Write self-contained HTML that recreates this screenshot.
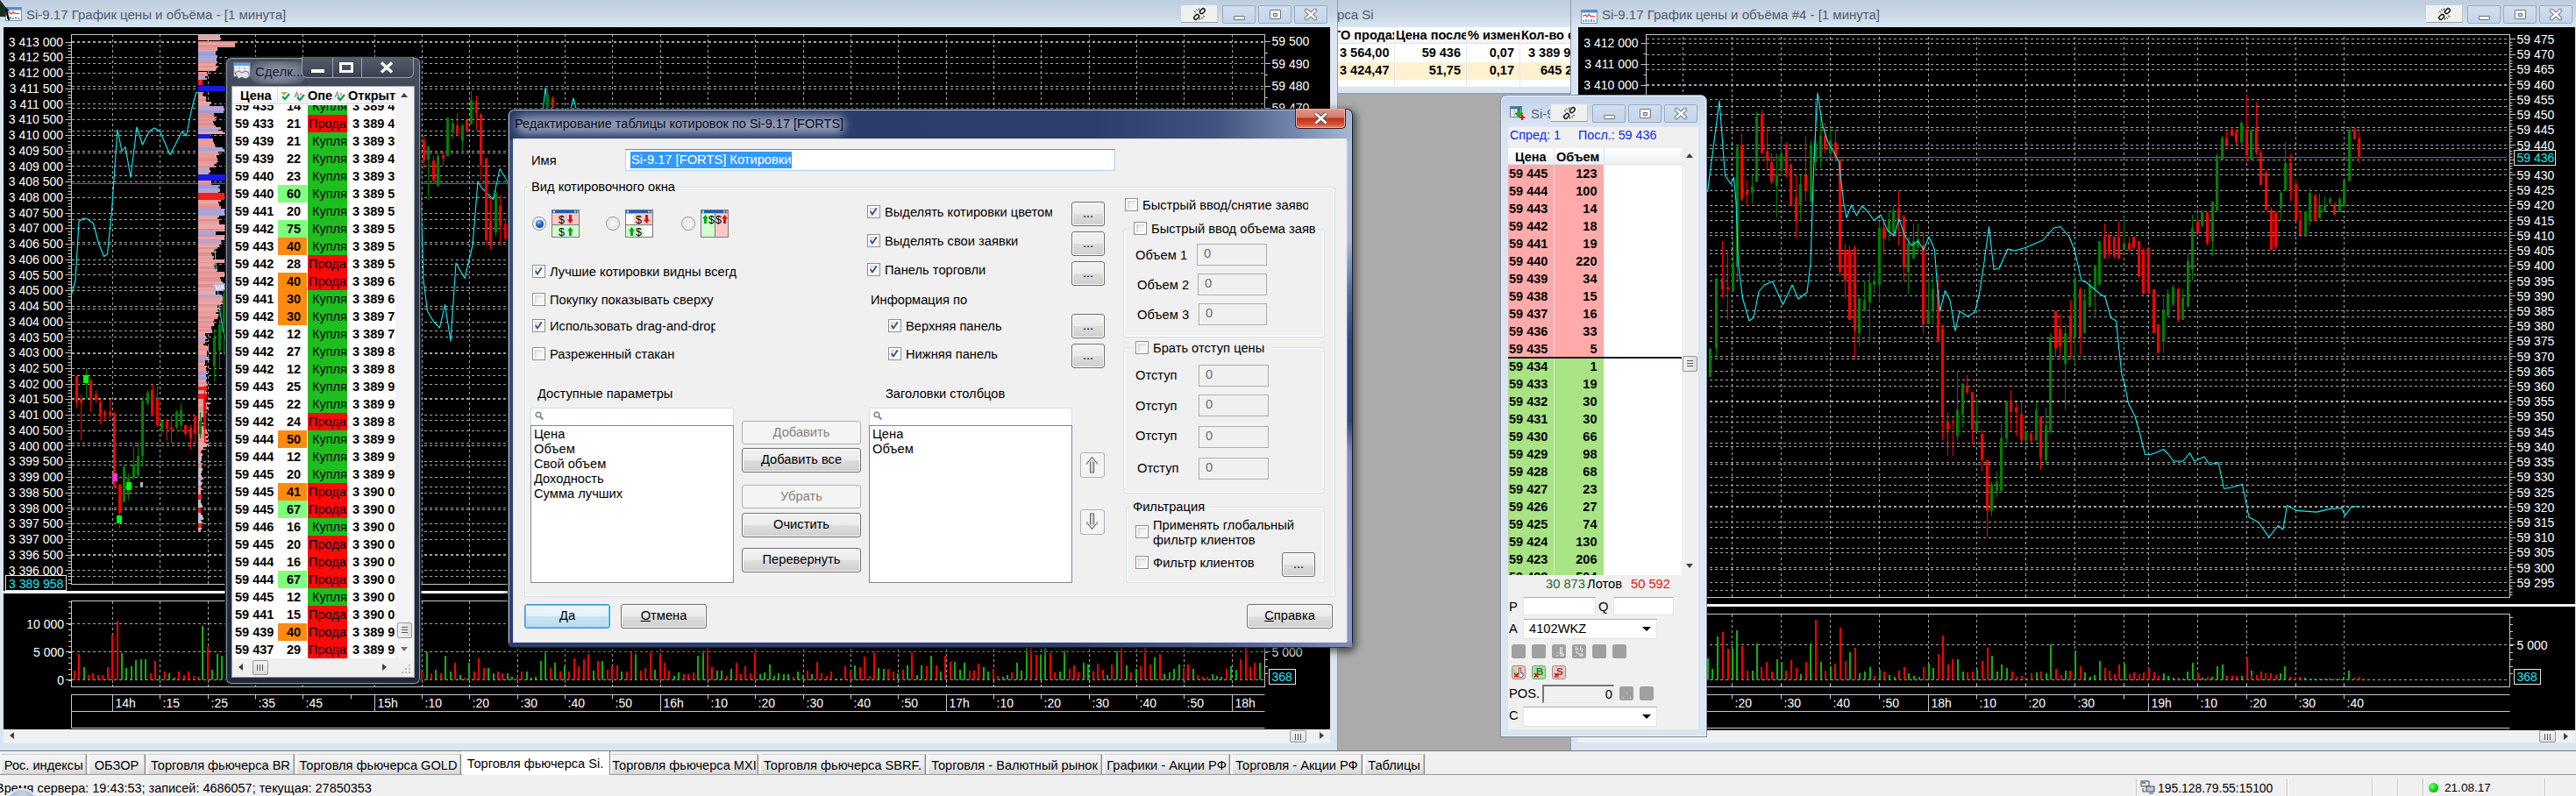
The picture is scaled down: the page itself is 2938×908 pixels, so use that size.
<!DOCTYPE html>
<html lang="ru"><head><meta charset="utf-8"><title>QUIK</title><style>
*{box-sizing:border-box}
html,body{margin:0;padding:0;overflow:hidden;width:2938px;height:908px}
#root{position:absolute;left:0;top:0;width:2938px;height:908px;overflow:hidden;background:#ababab}
body{width:2938px;height:908px;overflow:hidden;position:relative;background:#ababab;
 font-family:"Liberation Sans",sans-serif;font-size:14.7px;color:#000}
.a{position:absolute}
.nw{white-space:nowrap;overflow:hidden}
.tb{position:absolute;left:0;top:0;right:0;height:31px;background:linear-gradient(#bfcedf 0%,#c9d6e4 55%,#dae6f3 100%)}
.tt{position:absolute;top:8px;font-size:15px;color:#4f5b70;white-space:nowrap}
.wb{position:absolute;top:6px;height:21px;width:38px;border:1px solid #98abc6;border-radius:2px;background:linear-gradient(#d3dfee,#c3d3e8)}
.lk{position:absolute;top:6px;height:20px;width:42px;background:#f0f0f0;border-bottom:1px solid #a0a0a0;border-right:1px solid #c8c8c8}
svg{position:absolute;overflow:visible}
.ax{font-family:"Liberation Sans",sans-serif;font-size:14px;fill:#fff}
</style></head><body><div id="root">
<div class="a" style="left:0;top:0;width:1526px;height:856px;background:#dbe5f2;border-right:1px solid #8e9cb2"><div class="tb"></div><svg style="left:6px;top:8px" width="19" height="16" viewBox="0 0 19 16"><rect x=".5" y=".5" width="18" height="15" fill="#fff" stroke="#7a8aa0"/><rect x="1" y="1" width="17" height="2.500" fill="#4a90e0"/><path d="M2 7.500l3-1.500 2 2 2-2.500 2 2h5" stroke="#e03030" fill="none" stroke-width="1.200"/><path d="M3 14v-2M6 14v-3M9 14v-2M12 14v-3M15 14v-2" stroke="#3080d0" stroke-width="1.400"/></svg><div class="tt" style="left:30px">Si-9.17 График цены и объёма - [1 минута]</div><svg style="left:0;top:0" width="16" height="26" viewBox="0 0 16 26"><path d="M0 0L6.600 8.500L6.300 19L0 19z" fill="#16301f"/><path d="M6.300 8.300l4.500 4.200-2.300.6 2.600 9.400-1.800.8-3-9.200z" fill="#000"/></svg><div class="lk" style="left:1347px"><svg width="42" height="20" viewBox="0 0 42 20"><g fill="none" stroke="#1a1a1a"><g transform="rotate(-45 21 10)"><rect x="13" y="8" width="6.500" height="4" rx="2" stroke-width="1.500"/><rect x="22.500" y="8" width="6.500" height="4" rx="2" stroke-width="1.500"/></g><path d="M17.500 4.500l1 1.800M20.500 3.500v2M15 7l1.800 1M24.500 15.500l-1-1.800M21.500 16.500v-2M27 13l-1.800-1" stroke-width="1"/></g></svg></div><div class="wb" style="left:1394px"><div class="a" style="left:12px;top:11px;width:13px;height:5px;border:1px solid #6a7486;background:#fff;border-radius:1px"></div></div><div class="wb" style="left:1435px"><div class="a" style="left:12px;top:4px;width:13px;height:11px;border:1px solid #6a7486;background:#fff;border-radius:1px"></div><div class="a" style="left:16px;top:8px;width:5px;height:4px;border:1px solid #6a7486;background:#cfdbea"></div></div><div class="wb" style="left:1476px"><svg width="36" height="19" viewBox="0 0 36 19"><path d="M13 5l10 9M23 5l-10 9" stroke="#6a7486" stroke-width="4.600" stroke-linecap="round"/><path d="M13 5l10 9M23 5l-10 9" stroke="#fff" stroke-width="2.600" stroke-linecap="round"/></svg></div></div><svg class="ax" style="left:0;top:0" width="1526" height="856"><rect x="4" y="31" width="1513" height="801" fill="#000" />
<line x1="128.5" x2="128.5" y1="39" y2="666" stroke="#a6a6a6" stroke-width="1" stroke-dasharray="3 3"/>
<line x1="128.5" x2="128.5" y1="686" y2="783" stroke="#a6a6a6" stroke-width="1" stroke-dasharray="3 3"/>
<line x1="182.5" x2="182.5" y1="39" y2="666" stroke="#a6a6a6" stroke-width="1" stroke-dasharray="3 3"/>
<line x1="182.5" x2="182.5" y1="686" y2="783" stroke="#a6a6a6" stroke-width="1" stroke-dasharray="3 3"/>
<line x1="237.5" x2="237.5" y1="39" y2="666" stroke="#a6a6a6" stroke-width="1" stroke-dasharray="3 3"/>
<line x1="237.5" x2="237.5" y1="686" y2="783" stroke="#a6a6a6" stroke-width="1" stroke-dasharray="3 3"/>
<line x1="291.5" x2="291.5" y1="39" y2="666" stroke="#a6a6a6" stroke-width="1" stroke-dasharray="3 3"/>
<line x1="291.5" x2="291.5" y1="686" y2="783" stroke="#a6a6a6" stroke-width="1" stroke-dasharray="3 3"/>
<line x1="345.5" x2="345.5" y1="39" y2="666" stroke="#a6a6a6" stroke-width="1" stroke-dasharray="3 3"/>
<line x1="345.5" x2="345.5" y1="686" y2="783" stroke="#a6a6a6" stroke-width="1" stroke-dasharray="3 3"/>
<line x1="427.5" x2="427.5" y1="39" y2="666" stroke="#a6a6a6" stroke-width="1" stroke-dasharray="3 3"/>
<line x1="427.5" x2="427.5" y1="686" y2="783" stroke="#a6a6a6" stroke-width="1" stroke-dasharray="3 3"/>
<line x1="481.5" x2="481.5" y1="39" y2="666" stroke="#a6a6a6" stroke-width="1" stroke-dasharray="3 3"/>
<line x1="481.5" x2="481.5" y1="686" y2="783" stroke="#a6a6a6" stroke-width="1" stroke-dasharray="3 3"/>
<line x1="535.5" x2="535.5" y1="39" y2="666" stroke="#a6a6a6" stroke-width="1" stroke-dasharray="3 3"/>
<line x1="535.5" x2="535.5" y1="686" y2="783" stroke="#a6a6a6" stroke-width="1" stroke-dasharray="3 3"/>
<line x1="590.5" x2="590.5" y1="39" y2="666" stroke="#a6a6a6" stroke-width="1" stroke-dasharray="3 3"/>
<line x1="590.5" x2="590.5" y1="686" y2="783" stroke="#a6a6a6" stroke-width="1" stroke-dasharray="3 3"/>
<line x1="644.5" x2="644.5" y1="39" y2="666" stroke="#a6a6a6" stroke-width="1" stroke-dasharray="3 3"/>
<line x1="644.5" x2="644.5" y1="686" y2="783" stroke="#a6a6a6" stroke-width="1" stroke-dasharray="3 3"/>
<line x1="698.5" x2="698.5" y1="39" y2="666" stroke="#a6a6a6" stroke-width="1" stroke-dasharray="3 3"/>
<line x1="698.5" x2="698.5" y1="686" y2="783" stroke="#a6a6a6" stroke-width="1" stroke-dasharray="3 3"/>
<line x1="753.5" x2="753.5" y1="39" y2="666" stroke="#a6a6a6" stroke-width="1" stroke-dasharray="3 3"/>
<line x1="753.5" x2="753.5" y1="686" y2="783" stroke="#a6a6a6" stroke-width="1" stroke-dasharray="3 3"/>
<line x1="807.5" x2="807.5" y1="39" y2="666" stroke="#a6a6a6" stroke-width="1" stroke-dasharray="3 3"/>
<line x1="807.5" x2="807.5" y1="686" y2="783" stroke="#a6a6a6" stroke-width="1" stroke-dasharray="3 3"/>
<line x1="861.5" x2="861.5" y1="39" y2="666" stroke="#a6a6a6" stroke-width="1" stroke-dasharray="3 3"/>
<line x1="861.5" x2="861.5" y1="686" y2="783" stroke="#a6a6a6" stroke-width="1" stroke-dasharray="3 3"/>
<line x1="916.5" x2="916.5" y1="39" y2="666" stroke="#a6a6a6" stroke-width="1" stroke-dasharray="3 3"/>
<line x1="916.5" x2="916.5" y1="686" y2="783" stroke="#a6a6a6" stroke-width="1" stroke-dasharray="3 3"/>
<line x1="970.5" x2="970.5" y1="39" y2="666" stroke="#a6a6a6" stroke-width="1" stroke-dasharray="3 3"/>
<line x1="970.5" x2="970.5" y1="686" y2="783" stroke="#a6a6a6" stroke-width="1" stroke-dasharray="3 3"/>
<line x1="1024.5" x2="1024.5" y1="39" y2="666" stroke="#a6a6a6" stroke-width="1" stroke-dasharray="3 3"/>
<line x1="1024.5" x2="1024.5" y1="686" y2="783" stroke="#a6a6a6" stroke-width="1" stroke-dasharray="3 3"/>
<line x1="1079.5" x2="1079.5" y1="39" y2="666" stroke="#a6a6a6" stroke-width="1" stroke-dasharray="3 3"/>
<line x1="1079.5" x2="1079.5" y1="686" y2="783" stroke="#a6a6a6" stroke-width="1" stroke-dasharray="3 3"/>
<line x1="1133.5" x2="1133.5" y1="39" y2="666" stroke="#a6a6a6" stroke-width="1" stroke-dasharray="3 3"/>
<line x1="1133.5" x2="1133.5" y1="686" y2="783" stroke="#a6a6a6" stroke-width="1" stroke-dasharray="3 3"/>
<line x1="1187.5" x2="1187.5" y1="39" y2="666" stroke="#a6a6a6" stroke-width="1" stroke-dasharray="3 3"/>
<line x1="1187.5" x2="1187.5" y1="686" y2="783" stroke="#a6a6a6" stroke-width="1" stroke-dasharray="3 3"/>
<line x1="1242.5" x2="1242.5" y1="39" y2="666" stroke="#a6a6a6" stroke-width="1" stroke-dasharray="3 3"/>
<line x1="1242.5" x2="1242.5" y1="686" y2="783" stroke="#a6a6a6" stroke-width="1" stroke-dasharray="3 3"/>
<line x1="1296.5" x2="1296.5" y1="39" y2="666" stroke="#a6a6a6" stroke-width="1" stroke-dasharray="3 3"/>
<line x1="1296.5" x2="1296.5" y1="686" y2="783" stroke="#a6a6a6" stroke-width="1" stroke-dasharray="3 3"/>
<line x1="1350.5" x2="1350.5" y1="39" y2="666" stroke="#a6a6a6" stroke-width="1" stroke-dasharray="3 3"/>
<line x1="1350.5" x2="1350.5" y1="686" y2="783" stroke="#a6a6a6" stroke-width="1" stroke-dasharray="3 3"/>
<line x1="1405.5" x2="1405.5" y1="39" y2="666" stroke="#a6a6a6" stroke-width="1" stroke-dasharray="3 3"/>
<line x1="1405.5" x2="1405.5" y1="686" y2="783" stroke="#a6a6a6" stroke-width="1" stroke-dasharray="3 3"/>
<line x1="82" x2="1442" y1="48.5" y2="48.5" stroke="#a6a6a6" stroke-width="1" stroke-dasharray="3 3"/>
<line x1="82" x2="1442" y1="65.5" y2="65.5" stroke="#a6a6a6" stroke-width="1" stroke-dasharray="3 3"/>
<line x1="82" x2="1442" y1="83.5" y2="83.5" stroke="#a6a6a6" stroke-width="1" stroke-dasharray="3 3"/>
<line x1="82" x2="1442" y1="101.5" y2="101.5" stroke="#a6a6a6" stroke-width="1" stroke-dasharray="3 3"/>
<line x1="82" x2="1442" y1="118.5" y2="118.5" stroke="#a6a6a6" stroke-width="1" stroke-dasharray="3 3"/>
<line x1="82" x2="1442" y1="136.5" y2="136.5" stroke="#a6a6a6" stroke-width="1" stroke-dasharray="3 3"/>
<line x1="82" x2="1442" y1="154.5" y2="154.5" stroke="#a6a6a6" stroke-width="1" stroke-dasharray="3 3"/>
<line x1="82" x2="1442" y1="172.5" y2="172.5" stroke="#a6a6a6" stroke-width="1" stroke-dasharray="3 3"/>
<line x1="82" x2="1442" y1="189.5" y2="189.5" stroke="#a6a6a6" stroke-width="1" stroke-dasharray="3 3"/>
<line x1="82" x2="1442" y1="207.5" y2="207.5" stroke="#a6a6a6" stroke-width="1" stroke-dasharray="3 3"/>
<line x1="82" x2="1442" y1="225.5" y2="225.5" stroke="#a6a6a6" stroke-width="1" stroke-dasharray="3 3"/>
<line x1="82" x2="1442" y1="243.5" y2="243.5" stroke="#a6a6a6" stroke-width="1" stroke-dasharray="3 3"/>
<line x1="82" x2="1442" y1="260.5" y2="260.5" stroke="#a6a6a6" stroke-width="1" stroke-dasharray="3 3"/>
<line x1="82" x2="1442" y1="278.5" y2="278.5" stroke="#a6a6a6" stroke-width="1" stroke-dasharray="3 3"/>
<line x1="82" x2="1442" y1="296.5" y2="296.5" stroke="#a6a6a6" stroke-width="1" stroke-dasharray="3 3"/>
<line x1="82" x2="1442" y1="313.5" y2="313.5" stroke="#a6a6a6" stroke-width="1" stroke-dasharray="3 3"/>
<line x1="82" x2="1442" y1="331.5" y2="331.5" stroke="#a6a6a6" stroke-width="1" stroke-dasharray="3 3"/>
<line x1="82" x2="1442" y1="349.5" y2="349.5" stroke="#a6a6a6" stroke-width="1" stroke-dasharray="3 3"/>
<line x1="82" x2="1442" y1="367.5" y2="367.5" stroke="#a6a6a6" stroke-width="1" stroke-dasharray="3 3"/>
<line x1="82" x2="1442" y1="384.5" y2="384.5" stroke="#a6a6a6" stroke-width="1" stroke-dasharray="3 3"/>
<line x1="82" x2="1442" y1="402.5" y2="402.5" stroke="#a6a6a6" stroke-width="1" stroke-dasharray="3 3"/>
<line x1="82" x2="1442" y1="420.5" y2="420.5" stroke="#a6a6a6" stroke-width="1" stroke-dasharray="3 3"/>
<line x1="82" x2="1442" y1="438.5" y2="438.5" stroke="#a6a6a6" stroke-width="1" stroke-dasharray="3 3"/>
<line x1="82" x2="1442" y1="455.5" y2="455.5" stroke="#a6a6a6" stroke-width="1" stroke-dasharray="3 3"/>
<line x1="82" x2="1442" y1="473.5" y2="473.5" stroke="#a6a6a6" stroke-width="1" stroke-dasharray="3 3"/>
<line x1="82" x2="1442" y1="491.5" y2="491.5" stroke="#a6a6a6" stroke-width="1" stroke-dasharray="3 3"/>
<line x1="82" x2="1442" y1="508.5" y2="508.5" stroke="#a6a6a6" stroke-width="1" stroke-dasharray="3 3"/>
<line x1="82" x2="1442" y1="526.5" y2="526.5" stroke="#a6a6a6" stroke-width="1" stroke-dasharray="3 3"/>
<line x1="82" x2="1442" y1="544.5" y2="544.5" stroke="#a6a6a6" stroke-width="1" stroke-dasharray="3 3"/>
<line x1="82" x2="1442" y1="562.5" y2="562.5" stroke="#a6a6a6" stroke-width="1" stroke-dasharray="3 3"/>
<line x1="82" x2="1442" y1="579.5" y2="579.5" stroke="#a6a6a6" stroke-width="1" stroke-dasharray="3 3"/>
<line x1="82" x2="1442" y1="597.5" y2="597.5" stroke="#a6a6a6" stroke-width="1" stroke-dasharray="3 3"/>
<line x1="82" x2="1442" y1="615.5" y2="615.5" stroke="#a6a6a6" stroke-width="1" stroke-dasharray="3 3"/>
<line x1="82" x2="1442" y1="633.5" y2="633.5" stroke="#a6a6a6" stroke-width="1" stroke-dasharray="3 3"/>
<line x1="82" x2="1442" y1="650.5" y2="650.5" stroke="#a6a6a6" stroke-width="1" stroke-dasharray="3 3"/>
<line x1="82" x2="1442" y1="47.5" y2="47.5" stroke="#a6a6a6" stroke-width="1" stroke-dasharray="3 3"/>
<line x1="82" x2="1442" y1="72.5" y2="72.5" stroke="#a6a6a6" stroke-width="1" stroke-dasharray="3 3"/>
<line x1="82" x2="1442" y1="98.5" y2="98.5" stroke="#a6a6a6" stroke-width="1" stroke-dasharray="3 3"/>
<line x1="82" x2="1442" y1="123.5" y2="123.5" stroke="#a6a6a6" stroke-width="1" stroke-dasharray="3 3"/>
<line x1="82" x2="1442" y1="149.5" y2="149.5" stroke="#a6a6a6" stroke-width="1" stroke-dasharray="3 3"/>
<line x1="82" x2="1442" y1="174.5" y2="174.5" stroke="#a6a6a6" stroke-width="1" stroke-dasharray="3 3"/>
<line x1="82" x2="1442" y1="200.5" y2="200.5" stroke="#a6a6a6" stroke-width="1" stroke-dasharray="3 3"/>
<line x1="82" x2="1442" y1="225.5" y2="225.5" stroke="#a6a6a6" stroke-width="1" stroke-dasharray="3 3"/>
<line x1="82" x2="1442" y1="250.5" y2="250.5" stroke="#a6a6a6" stroke-width="1" stroke-dasharray="3 3"/>
<line x1="82" x2="1442" y1="276.5" y2="276.5" stroke="#a6a6a6" stroke-width="1" stroke-dasharray="3 3"/>
<line x1="82" x2="1442" y1="301.5" y2="301.5" stroke="#a6a6a6" stroke-width="1" stroke-dasharray="3 3"/>
<line x1="82" x2="1442" y1="327.5" y2="327.5" stroke="#a6a6a6" stroke-width="1" stroke-dasharray="3 3"/>
<line x1="82" x2="1442" y1="352.5" y2="352.5" stroke="#a6a6a6" stroke-width="1" stroke-dasharray="3 3"/>
<line x1="82" x2="1442" y1="377.5" y2="377.5" stroke="#a6a6a6" stroke-width="1" stroke-dasharray="3 3"/>
<line x1="82" x2="1442" y1="403.5" y2="403.5" stroke="#a6a6a6" stroke-width="1" stroke-dasharray="3 3"/>
<line x1="82" x2="1442" y1="428.5" y2="428.5" stroke="#a6a6a6" stroke-width="1" stroke-dasharray="3 3"/>
<line x1="82" x2="1442" y1="454.5" y2="454.5" stroke="#a6a6a6" stroke-width="1" stroke-dasharray="3 3"/>
<line x1="82" x2="1442" y1="479.5" y2="479.5" stroke="#a6a6a6" stroke-width="1" stroke-dasharray="3 3"/>
<line x1="82" x2="1442" y1="505.5" y2="505.5" stroke="#a6a6a6" stroke-width="1" stroke-dasharray="3 3"/>
<line x1="82" x2="1442" y1="530.5" y2="530.5" stroke="#a6a6a6" stroke-width="1" stroke-dasharray="3 3"/>
<line x1="82" x2="1442" y1="555.5" y2="555.5" stroke="#a6a6a6" stroke-width="1" stroke-dasharray="3 3"/>
<line x1="82" x2="1442" y1="581.5" y2="581.5" stroke="#a6a6a6" stroke-width="1" stroke-dasharray="3 3"/>
<line x1="82" x2="1442" y1="606.5" y2="606.5" stroke="#a6a6a6" stroke-width="1" stroke-dasharray="3 3"/>
<line x1="82" x2="1442" y1="632.5" y2="632.5" stroke="#a6a6a6" stroke-width="1" stroke-dasharray="3 3"/>
<line x1="82" x2="1442" y1="657.5" y2="657.5" stroke="#a6a6a6" stroke-width="1" stroke-dasharray="3 3"/>
<line x1="82" x2="1442" y1="711.5" y2="711.5" stroke="#a6a6a6" stroke-width="1" stroke-dasharray="3 3"/>
<line x1="82" x2="1442" y1="743.5" y2="743.5" stroke="#a6a6a6" stroke-width="1" stroke-dasharray="3 3"/>
<line x1="82" x2="1442" y1="775.5" y2="775.5" stroke="#a6a6a6" stroke-width="1" stroke-dasharray="3 3"/>
<line x1="81.5" y1="209.5" x2="1442.5" y2="209.5" stroke="#1e78e6" stroke-width="1"/>
<rect x="81.5" y="39.5" width="1361.0" height="627.0" fill="none" stroke="#c8c8c8"/>
<rect x="81.5" y="685.5" width="1361.0" height="98.0" fill="none" stroke="#c8c8c8"/>
<line x1="81.5" y1="792.5" x2="1442.5" y2="792.5" stroke="#c8c8c8" stroke-width="1"/>
<line x1="81.5" y1="811.5" x2="1442.5" y2="811.5" stroke="#c8c8c8" stroke-width="1"/>
<line x1="81.5" y1="830.5" x2="1442.5" y2="830.5" stroke="#c8c8c8" stroke-width="1"/>
<line x1="81.5" y1="792.5" x2="81.5" y2="830.5" stroke="#c8c8c8" stroke-width="1"/>
<line x1="128.5" y1="781" x2="128.5" y2="783.5" stroke="#c8c8c8" stroke-width="1"/>
<line x1="182.5" y1="781" x2="182.5" y2="783.5" stroke="#c8c8c8" stroke-width="1"/>
<line x1="237.5" y1="781" x2="237.5" y2="783.5" stroke="#c8c8c8" stroke-width="1"/>
<line x1="291.5" y1="781" x2="291.5" y2="783.5" stroke="#c8c8c8" stroke-width="1"/>
<line x1="345.5" y1="781" x2="345.5" y2="783.5" stroke="#c8c8c8" stroke-width="1"/>
<line x1="427.5" y1="781" x2="427.5" y2="783.5" stroke="#c8c8c8" stroke-width="1"/>
<line x1="481.5" y1="781" x2="481.5" y2="783.5" stroke="#c8c8c8" stroke-width="1"/>
<line x1="535.5" y1="781" x2="535.5" y2="783.5" stroke="#c8c8c8" stroke-width="1"/>
<line x1="590.5" y1="781" x2="590.5" y2="783.5" stroke="#c8c8c8" stroke-width="1"/>
<line x1="644.5" y1="781" x2="644.5" y2="783.5" stroke="#c8c8c8" stroke-width="1"/>
<line x1="698.5" y1="781" x2="698.5" y2="783.5" stroke="#c8c8c8" stroke-width="1"/>
<line x1="753.5" y1="781" x2="753.5" y2="783.5" stroke="#c8c8c8" stroke-width="1"/>
<line x1="807.5" y1="781" x2="807.5" y2="783.5" stroke="#c8c8c8" stroke-width="1"/>
<line x1="861.5" y1="781" x2="861.5" y2="783.5" stroke="#c8c8c8" stroke-width="1"/>
<line x1="916.5" y1="781" x2="916.5" y2="783.5" stroke="#c8c8c8" stroke-width="1"/>
<line x1="970.5" y1="781" x2="970.5" y2="783.5" stroke="#c8c8c8" stroke-width="1"/>
<line x1="1024.5" y1="781" x2="1024.5" y2="783.5" stroke="#c8c8c8" stroke-width="1"/>
<line x1="1079.5" y1="781" x2="1079.5" y2="783.5" stroke="#c8c8c8" stroke-width="1"/>
<line x1="1133.5" y1="781" x2="1133.5" y2="783.5" stroke="#c8c8c8" stroke-width="1"/>
<line x1="1187.5" y1="781" x2="1187.5" y2="783.5" stroke="#c8c8c8" stroke-width="1"/>
<line x1="1242.5" y1="781" x2="1242.5" y2="783.5" stroke="#c8c8c8" stroke-width="1"/>
<line x1="1296.5" y1="781" x2="1296.5" y2="783.5" stroke="#c8c8c8" stroke-width="1"/>
<line x1="1350.5" y1="781" x2="1350.5" y2="783.5" stroke="#c8c8c8" stroke-width="1"/>
<line x1="1405.5" y1="781" x2="1405.5" y2="783.5" stroke="#c8c8c8" stroke-width="1"/>
<rect x="4" y="674" width="1513" height="3" fill="#f4f4f4" />
<text x="72" y="53" text-anchor="end" fill="#fff" font-size="14" >3 413 000</text>
<line x1="74.5" y1="48.5" x2="81.5" y2="48.5" stroke="#c8c8c8" stroke-width="1"/>
<line x1="77.5" y1="51.5" x2="81.5" y2="51.5" stroke="#c8c8c8" stroke-width="1"/>
<line x1="77.5" y1="55.5" x2="81.5" y2="55.5" stroke="#c8c8c8" stroke-width="1"/>
<line x1="77.5" y1="58.5" x2="81.5" y2="58.5" stroke="#c8c8c8" stroke-width="1"/>
<line x1="77.5" y1="62.5" x2="81.5" y2="62.5" stroke="#c8c8c8" stroke-width="1"/>
<text x="72" y="70" text-anchor="end" fill="#fff" font-size="14" >3 412 500</text>
<line x1="74.5" y1="65.5" x2="81.5" y2="65.5" stroke="#c8c8c8" stroke-width="1"/>
<line x1="77.5" y1="69.5" x2="81.5" y2="69.5" stroke="#c8c8c8" stroke-width="1"/>
<line x1="77.5" y1="72.5" x2="81.5" y2="72.5" stroke="#c8c8c8" stroke-width="1"/>
<line x1="77.5" y1="76.5" x2="81.5" y2="76.5" stroke="#c8c8c8" stroke-width="1"/>
<line x1="77.5" y1="79.5" x2="81.5" y2="79.5" stroke="#c8c8c8" stroke-width="1"/>
<text x="72" y="88" text-anchor="end" fill="#fff" font-size="14" >3 412 000</text>
<line x1="74.5" y1="83.5" x2="81.5" y2="83.5" stroke="#c8c8c8" stroke-width="1"/>
<line x1="77.5" y1="87.5" x2="81.5" y2="87.5" stroke="#c8c8c8" stroke-width="1"/>
<line x1="77.5" y1="90.5" x2="81.5" y2="90.5" stroke="#c8c8c8" stroke-width="1"/>
<line x1="77.5" y1="94.5" x2="81.5" y2="94.5" stroke="#c8c8c8" stroke-width="1"/>
<line x1="77.5" y1="97.5" x2="81.5" y2="97.5" stroke="#c8c8c8" stroke-width="1"/>
<text x="72" y="106" text-anchor="end" fill="#fff" font-size="14" >3 411 500</text>
<line x1="74.5" y1="101.5" x2="81.5" y2="101.5" stroke="#c8c8c8" stroke-width="1"/>
<line x1="77.5" y1="104.5" x2="81.5" y2="104.5" stroke="#c8c8c8" stroke-width="1"/>
<line x1="77.5" y1="108.5" x2="81.5" y2="108.5" stroke="#c8c8c8" stroke-width="1"/>
<line x1="77.5" y1="111.5" x2="81.5" y2="111.5" stroke="#c8c8c8" stroke-width="1"/>
<line x1="77.5" y1="115.5" x2="81.5" y2="115.5" stroke="#c8c8c8" stroke-width="1"/>
<text x="72" y="124" text-anchor="end" fill="#fff" font-size="14" >3 411 000</text>
<line x1="74.5" y1="118.5" x2="81.5" y2="118.5" stroke="#c8c8c8" stroke-width="1"/>
<line x1="77.5" y1="122.5" x2="81.5" y2="122.5" stroke="#c8c8c8" stroke-width="1"/>
<line x1="77.5" y1="126.5" x2="81.5" y2="126.5" stroke="#c8c8c8" stroke-width="1"/>
<line x1="77.5" y1="129.5" x2="81.5" y2="129.5" stroke="#c8c8c8" stroke-width="1"/>
<line x1="77.5" y1="133.5" x2="81.5" y2="133.5" stroke="#c8c8c8" stroke-width="1"/>
<text x="72" y="141" text-anchor="end" fill="#fff" font-size="14" >3 410 500</text>
<line x1="74.5" y1="136.5" x2="81.5" y2="136.5" stroke="#c8c8c8" stroke-width="1"/>
<line x1="77.5" y1="140.5" x2="81.5" y2="140.5" stroke="#c8c8c8" stroke-width="1"/>
<line x1="77.5" y1="143.5" x2="81.5" y2="143.5" stroke="#c8c8c8" stroke-width="1"/>
<line x1="77.5" y1="147.5" x2="81.5" y2="147.5" stroke="#c8c8c8" stroke-width="1"/>
<line x1="77.5" y1="150.5" x2="81.5" y2="150.5" stroke="#c8c8c8" stroke-width="1"/>
<text x="72" y="159" text-anchor="end" fill="#fff" font-size="14" >3 410 000</text>
<line x1="74.5" y1="154.5" x2="81.5" y2="154.5" stroke="#c8c8c8" stroke-width="1"/>
<line x1="77.5" y1="157.5" x2="81.5" y2="157.5" stroke="#c8c8c8" stroke-width="1"/>
<line x1="77.5" y1="161.5" x2="81.5" y2="161.5" stroke="#c8c8c8" stroke-width="1"/>
<line x1="77.5" y1="165.5" x2="81.5" y2="165.5" stroke="#c8c8c8" stroke-width="1"/>
<line x1="77.5" y1="168.5" x2="81.5" y2="168.5" stroke="#c8c8c8" stroke-width="1"/>
<text x="72" y="177" text-anchor="end" fill="#fff" font-size="14" >3 409 500</text>
<line x1="74.5" y1="172.5" x2="81.5" y2="172.5" stroke="#c8c8c8" stroke-width="1"/>
<line x1="77.5" y1="175.5" x2="81.5" y2="175.5" stroke="#c8c8c8" stroke-width="1"/>
<line x1="77.5" y1="179.5" x2="81.5" y2="179.5" stroke="#c8c8c8" stroke-width="1"/>
<line x1="77.5" y1="182.5" x2="81.5" y2="182.5" stroke="#c8c8c8" stroke-width="1"/>
<line x1="77.5" y1="186.5" x2="81.5" y2="186.5" stroke="#c8c8c8" stroke-width="1"/>
<text x="72" y="195" text-anchor="end" fill="#fff" font-size="14" >3 409 000</text>
<line x1="74.5" y1="189.5" x2="81.5" y2="189.5" stroke="#c8c8c8" stroke-width="1"/>
<line x1="77.5" y1="193.5" x2="81.5" y2="193.5" stroke="#c8c8c8" stroke-width="1"/>
<line x1="77.5" y1="196.5" x2="81.5" y2="196.5" stroke="#c8c8c8" stroke-width="1"/>
<line x1="77.5" y1="200.5" x2="81.5" y2="200.5" stroke="#c8c8c8" stroke-width="1"/>
<line x1="77.5" y1="204.5" x2="81.5" y2="204.5" stroke="#c8c8c8" stroke-width="1"/>
<text x="72" y="212" text-anchor="end" fill="#fff" font-size="14" >3 408 500</text>
<line x1="74.5" y1="207.5" x2="81.5" y2="207.5" stroke="#c8c8c8" stroke-width="1"/>
<line x1="77.5" y1="211.5" x2="81.5" y2="211.5" stroke="#c8c8c8" stroke-width="1"/>
<line x1="77.5" y1="214.5" x2="81.5" y2="214.5" stroke="#c8c8c8" stroke-width="1"/>
<line x1="77.5" y1="218.5" x2="81.5" y2="218.5" stroke="#c8c8c8" stroke-width="1"/>
<line x1="77.5" y1="221.5" x2="81.5" y2="221.5" stroke="#c8c8c8" stroke-width="1"/>
<text x="72" y="230" text-anchor="end" fill="#fff" font-size="14" >3 408 000</text>
<line x1="74.5" y1="225.5" x2="81.5" y2="225.5" stroke="#c8c8c8" stroke-width="1"/>
<line x1="77.5" y1="228.5" x2="81.5" y2="228.5" stroke="#c8c8c8" stroke-width="1"/>
<line x1="77.5" y1="232.5" x2="81.5" y2="232.5" stroke="#c8c8c8" stroke-width="1"/>
<line x1="77.5" y1="235.5" x2="81.5" y2="235.5" stroke="#c8c8c8" stroke-width="1"/>
<line x1="77.5" y1="239.5" x2="81.5" y2="239.5" stroke="#c8c8c8" stroke-width="1"/>
<text x="72" y="248" text-anchor="end" fill="#fff" font-size="14" >3 407 500</text>
<line x1="74.5" y1="243.5" x2="81.5" y2="243.5" stroke="#c8c8c8" stroke-width="1"/>
<line x1="77.5" y1="246.5" x2="81.5" y2="246.5" stroke="#c8c8c8" stroke-width="1"/>
<line x1="77.5" y1="250.5" x2="81.5" y2="250.5" stroke="#c8c8c8" stroke-width="1"/>
<line x1="77.5" y1="253.5" x2="81.5" y2="253.5" stroke="#c8c8c8" stroke-width="1"/>
<line x1="77.5" y1="257.5" x2="81.5" y2="257.5" stroke="#c8c8c8" stroke-width="1"/>
<text x="72" y="265" text-anchor="end" fill="#fff" font-size="14" >3 407 000</text>
<line x1="74.5" y1="260.5" x2="81.5" y2="260.5" stroke="#c8c8c8" stroke-width="1"/>
<line x1="77.5" y1="264.5" x2="81.5" y2="264.5" stroke="#c8c8c8" stroke-width="1"/>
<line x1="77.5" y1="267.5" x2="81.5" y2="267.5" stroke="#c8c8c8" stroke-width="1"/>
<line x1="77.5" y1="271.5" x2="81.5" y2="271.5" stroke="#c8c8c8" stroke-width="1"/>
<line x1="77.5" y1="274.5" x2="81.5" y2="274.5" stroke="#c8c8c8" stroke-width="1"/>
<text x="72" y="283" text-anchor="end" fill="#fff" font-size="14" >3 406 500</text>
<line x1="74.5" y1="278.5" x2="81.5" y2="278.5" stroke="#c8c8c8" stroke-width="1"/>
<line x1="77.5" y1="282.5" x2="81.5" y2="282.5" stroke="#c8c8c8" stroke-width="1"/>
<line x1="77.5" y1="285.5" x2="81.5" y2="285.5" stroke="#c8c8c8" stroke-width="1"/>
<line x1="77.5" y1="289.5" x2="81.5" y2="289.5" stroke="#c8c8c8" stroke-width="1"/>
<line x1="77.5" y1="292.5" x2="81.5" y2="292.5" stroke="#c8c8c8" stroke-width="1"/>
<text x="72" y="301" text-anchor="end" fill="#fff" font-size="14" >3 406 000</text>
<line x1="74.5" y1="296.5" x2="81.5" y2="296.5" stroke="#c8c8c8" stroke-width="1"/>
<line x1="77.5" y1="299.5" x2="81.5" y2="299.5" stroke="#c8c8c8" stroke-width="1"/>
<line x1="77.5" y1="303.5" x2="81.5" y2="303.5" stroke="#c8c8c8" stroke-width="1"/>
<line x1="77.5" y1="306.5" x2="81.5" y2="306.5" stroke="#c8c8c8" stroke-width="1"/>
<line x1="77.5" y1="310.5" x2="81.5" y2="310.5" stroke="#c8c8c8" stroke-width="1"/>
<text x="72" y="319" text-anchor="end" fill="#fff" font-size="14" >3 405 500</text>
<line x1="74.5" y1="313.5" x2="81.5" y2="313.5" stroke="#c8c8c8" stroke-width="1"/>
<line x1="77.5" y1="317.5" x2="81.5" y2="317.5" stroke="#c8c8c8" stroke-width="1"/>
<line x1="77.5" y1="321.5" x2="81.5" y2="321.5" stroke="#c8c8c8" stroke-width="1"/>
<line x1="77.5" y1="324.5" x2="81.5" y2="324.5" stroke="#c8c8c8" stroke-width="1"/>
<line x1="77.5" y1="328.5" x2="81.5" y2="328.5" stroke="#c8c8c8" stroke-width="1"/>
<text x="72" y="336" text-anchor="end" fill="#fff" font-size="14" >3 405 000</text>
<line x1="74.5" y1="331.5" x2="81.5" y2="331.5" stroke="#c8c8c8" stroke-width="1"/>
<line x1="77.5" y1="335.5" x2="81.5" y2="335.5" stroke="#c8c8c8" stroke-width="1"/>
<line x1="77.5" y1="338.5" x2="81.5" y2="338.5" stroke="#c8c8c8" stroke-width="1"/>
<line x1="77.5" y1="342.5" x2="81.5" y2="342.5" stroke="#c8c8c8" stroke-width="1"/>
<line x1="77.5" y1="345.5" x2="81.5" y2="345.5" stroke="#c8c8c8" stroke-width="1"/>
<text x="72" y="354" text-anchor="end" fill="#fff" font-size="14" >3 404 500</text>
<line x1="74.5" y1="349.5" x2="81.5" y2="349.5" stroke="#c8c8c8" stroke-width="1"/>
<line x1="77.5" y1="352.5" x2="81.5" y2="352.5" stroke="#c8c8c8" stroke-width="1"/>
<line x1="77.5" y1="356.5" x2="81.5" y2="356.5" stroke="#c8c8c8" stroke-width="1"/>
<line x1="77.5" y1="360.5" x2="81.5" y2="360.5" stroke="#c8c8c8" stroke-width="1"/>
<line x1="77.5" y1="363.5" x2="81.5" y2="363.5" stroke="#c8c8c8" stroke-width="1"/>
<text x="72" y="372" text-anchor="end" fill="#fff" font-size="14" >3 404 000</text>
<line x1="74.5" y1="367.5" x2="81.5" y2="367.5" stroke="#c8c8c8" stroke-width="1"/>
<line x1="77.5" y1="370.5" x2="81.5" y2="370.5" stroke="#c8c8c8" stroke-width="1"/>
<line x1="77.5" y1="374.5" x2="81.5" y2="374.5" stroke="#c8c8c8" stroke-width="1"/>
<line x1="77.5" y1="377.5" x2="81.5" y2="377.5" stroke="#c8c8c8" stroke-width="1"/>
<line x1="77.5" y1="381.5" x2="81.5" y2="381.5" stroke="#c8c8c8" stroke-width="1"/>
<text x="72" y="390" text-anchor="end" fill="#fff" font-size="14" >3 403 500</text>
<line x1="74.5" y1="384.5" x2="81.5" y2="384.5" stroke="#c8c8c8" stroke-width="1"/>
<line x1="77.5" y1="388.5" x2="81.5" y2="388.5" stroke="#c8c8c8" stroke-width="1"/>
<line x1="77.5" y1="391.5" x2="81.5" y2="391.5" stroke="#c8c8c8" stroke-width="1"/>
<line x1="77.5" y1="395.5" x2="81.5" y2="395.5" stroke="#c8c8c8" stroke-width="1"/>
<line x1="77.5" y1="399.5" x2="81.5" y2="399.5" stroke="#c8c8c8" stroke-width="1"/>
<text x="72" y="407" text-anchor="end" fill="#fff" font-size="14" >3 403 000</text>
<line x1="74.5" y1="402.5" x2="81.5" y2="402.5" stroke="#c8c8c8" stroke-width="1"/>
<line x1="77.5" y1="406.5" x2="81.5" y2="406.5" stroke="#c8c8c8" stroke-width="1"/>
<line x1="77.5" y1="409.5" x2="81.5" y2="409.5" stroke="#c8c8c8" stroke-width="1"/>
<line x1="77.5" y1="413.5" x2="81.5" y2="413.5" stroke="#c8c8c8" stroke-width="1"/>
<line x1="77.5" y1="416.5" x2="81.5" y2="416.5" stroke="#c8c8c8" stroke-width="1"/>
<text x="72" y="425" text-anchor="end" fill="#fff" font-size="14" >3 402 500</text>
<line x1="74.5" y1="420.5" x2="81.5" y2="420.5" stroke="#c8c8c8" stroke-width="1"/>
<line x1="77.5" y1="423.5" x2="81.5" y2="423.5" stroke="#c8c8c8" stroke-width="1"/>
<line x1="77.5" y1="427.5" x2="81.5" y2="427.5" stroke="#c8c8c8" stroke-width="1"/>
<line x1="77.5" y1="430.5" x2="81.5" y2="430.5" stroke="#c8c8c8" stroke-width="1"/>
<line x1="77.5" y1="434.5" x2="81.5" y2="434.5" stroke="#c8c8c8" stroke-width="1"/>
<text x="72" y="443" text-anchor="end" fill="#fff" font-size="14" >3 402 000</text>
<line x1="74.5" y1="438.5" x2="81.5" y2="438.5" stroke="#c8c8c8" stroke-width="1"/>
<line x1="77.5" y1="441.5" x2="81.5" y2="441.5" stroke="#c8c8c8" stroke-width="1"/>
<line x1="77.5" y1="445.5" x2="81.5" y2="445.5" stroke="#c8c8c8" stroke-width="1"/>
<line x1="77.5" y1="448.5" x2="81.5" y2="448.5" stroke="#c8c8c8" stroke-width="1"/>
<line x1="77.5" y1="452.5" x2="81.5" y2="452.5" stroke="#c8c8c8" stroke-width="1"/>
<text x="72" y="460" text-anchor="end" fill="#fff" font-size="14" >3 401 500</text>
<line x1="74.5" y1="455.5" x2="81.5" y2="455.5" stroke="#c8c8c8" stroke-width="1"/>
<line x1="77.5" y1="459.5" x2="81.5" y2="459.5" stroke="#c8c8c8" stroke-width="1"/>
<line x1="77.5" y1="462.5" x2="81.5" y2="462.5" stroke="#c8c8c8" stroke-width="1"/>
<line x1="77.5" y1="466.5" x2="81.5" y2="466.5" stroke="#c8c8c8" stroke-width="1"/>
<line x1="77.5" y1="469.5" x2="81.5" y2="469.5" stroke="#c8c8c8" stroke-width="1"/>
<text x="72" y="478" text-anchor="end" fill="#fff" font-size="14" >3 401 000</text>
<line x1="74.5" y1="473.5" x2="81.5" y2="473.5" stroke="#c8c8c8" stroke-width="1"/>
<line x1="77.5" y1="477.5" x2="81.5" y2="477.5" stroke="#c8c8c8" stroke-width="1"/>
<line x1="77.5" y1="480.5" x2="81.5" y2="480.5" stroke="#c8c8c8" stroke-width="1"/>
<line x1="77.5" y1="484.5" x2="81.5" y2="484.5" stroke="#c8c8c8" stroke-width="1"/>
<line x1="77.5" y1="487.5" x2="81.5" y2="487.5" stroke="#c8c8c8" stroke-width="1"/>
<text x="72" y="496" text-anchor="end" fill="#fff" font-size="14" >3 400 500</text>
<line x1="74.5" y1="491.5" x2="81.5" y2="491.5" stroke="#c8c8c8" stroke-width="1"/>
<line x1="77.5" y1="494.5" x2="81.5" y2="494.5" stroke="#c8c8c8" stroke-width="1"/>
<line x1="77.5" y1="498.5" x2="81.5" y2="498.5" stroke="#c8c8c8" stroke-width="1"/>
<line x1="77.5" y1="501.5" x2="81.5" y2="501.5" stroke="#c8c8c8" stroke-width="1"/>
<line x1="77.5" y1="505.5" x2="81.5" y2="505.5" stroke="#c8c8c8" stroke-width="1"/>
<text x="72" y="514" text-anchor="end" fill="#fff" font-size="14" >3 400 000</text>
<line x1="74.5" y1="508.5" x2="81.5" y2="508.5" stroke="#c8c8c8" stroke-width="1"/>
<line x1="77.5" y1="512.5" x2="81.5" y2="512.5" stroke="#c8c8c8" stroke-width="1"/>
<line x1="77.5" y1="516.5" x2="81.5" y2="516.5" stroke="#c8c8c8" stroke-width="1"/>
<line x1="77.5" y1="519.5" x2="81.5" y2="519.5" stroke="#c8c8c8" stroke-width="1"/>
<line x1="77.5" y1="523.5" x2="81.5" y2="523.5" stroke="#c8c8c8" stroke-width="1"/>
<text x="72" y="531" text-anchor="end" fill="#fff" font-size="14" >3 399 500</text>
<line x1="74.5" y1="526.5" x2="81.5" y2="526.5" stroke="#c8c8c8" stroke-width="1"/>
<line x1="77.5" y1="530.5" x2="81.5" y2="530.5" stroke="#c8c8c8" stroke-width="1"/>
<line x1="77.5" y1="533.5" x2="81.5" y2="533.5" stroke="#c8c8c8" stroke-width="1"/>
<line x1="77.5" y1="537.5" x2="81.5" y2="537.5" stroke="#c8c8c8" stroke-width="1"/>
<line x1="77.5" y1="540.5" x2="81.5" y2="540.5" stroke="#c8c8c8" stroke-width="1"/>
<text x="72" y="549" text-anchor="end" fill="#fff" font-size="14" >3 399 000</text>
<line x1="74.5" y1="544.5" x2="81.5" y2="544.5" stroke="#c8c8c8" stroke-width="1"/>
<line x1="77.5" y1="547.5" x2="81.5" y2="547.5" stroke="#c8c8c8" stroke-width="1"/>
<line x1="77.5" y1="551.5" x2="81.5" y2="551.5" stroke="#c8c8c8" stroke-width="1"/>
<line x1="77.5" y1="555.5" x2="81.5" y2="555.5" stroke="#c8c8c8" stroke-width="1"/>
<line x1="77.5" y1="558.5" x2="81.5" y2="558.5" stroke="#c8c8c8" stroke-width="1"/>
<text x="72" y="567" text-anchor="end" fill="#fff" font-size="14" >3 398 500</text>
<line x1="74.5" y1="562.5" x2="81.5" y2="562.5" stroke="#c8c8c8" stroke-width="1"/>
<line x1="77.5" y1="565.5" x2="81.5" y2="565.5" stroke="#c8c8c8" stroke-width="1"/>
<line x1="77.5" y1="569.5" x2="81.5" y2="569.5" stroke="#c8c8c8" stroke-width="1"/>
<line x1="77.5" y1="572.5" x2="81.5" y2="572.5" stroke="#c8c8c8" stroke-width="1"/>
<line x1="77.5" y1="576.5" x2="81.5" y2="576.5" stroke="#c8c8c8" stroke-width="1"/>
<text x="72" y="585" text-anchor="end" fill="#fff" font-size="14" >3 398 000</text>
<line x1="74.5" y1="579.5" x2="81.5" y2="579.5" stroke="#c8c8c8" stroke-width="1"/>
<line x1="77.5" y1="583.5" x2="81.5" y2="583.5" stroke="#c8c8c8" stroke-width="1"/>
<line x1="77.5" y1="586.5" x2="81.5" y2="586.5" stroke="#c8c8c8" stroke-width="1"/>
<line x1="77.5" y1="590.5" x2="81.5" y2="590.5" stroke="#c8c8c8" stroke-width="1"/>
<line x1="77.5" y1="594.5" x2="81.5" y2="594.5" stroke="#c8c8c8" stroke-width="1"/>
<text x="72" y="602" text-anchor="end" fill="#fff" font-size="14" >3 397 500</text>
<line x1="74.5" y1="597.5" x2="81.5" y2="597.5" stroke="#c8c8c8" stroke-width="1"/>
<line x1="77.5" y1="601.5" x2="81.5" y2="601.5" stroke="#c8c8c8" stroke-width="1"/>
<line x1="77.5" y1="604.5" x2="81.5" y2="604.5" stroke="#c8c8c8" stroke-width="1"/>
<line x1="77.5" y1="608.5" x2="81.5" y2="608.5" stroke="#c8c8c8" stroke-width="1"/>
<line x1="77.5" y1="611.5" x2="81.5" y2="611.5" stroke="#c8c8c8" stroke-width="1"/>
<text x="72" y="620" text-anchor="end" fill="#fff" font-size="14" >3 397 000</text>
<line x1="74.5" y1="615.5" x2="81.5" y2="615.5" stroke="#c8c8c8" stroke-width="1"/>
<line x1="77.5" y1="618.5" x2="81.5" y2="618.5" stroke="#c8c8c8" stroke-width="1"/>
<line x1="77.5" y1="622.5" x2="81.5" y2="622.5" stroke="#c8c8c8" stroke-width="1"/>
<line x1="77.5" y1="625.5" x2="81.5" y2="625.5" stroke="#c8c8c8" stroke-width="1"/>
<line x1="77.5" y1="629.5" x2="81.5" y2="629.5" stroke="#c8c8c8" stroke-width="1"/>
<text x="72" y="638" text-anchor="end" fill="#fff" font-size="14" >3 396 500</text>
<line x1="74.5" y1="633.5" x2="81.5" y2="633.5" stroke="#c8c8c8" stroke-width="1"/>
<line x1="77.5" y1="636.5" x2="81.5" y2="636.5" stroke="#c8c8c8" stroke-width="1"/>
<line x1="77.5" y1="640.5" x2="81.5" y2="640.5" stroke="#c8c8c8" stroke-width="1"/>
<line x1="77.5" y1="643.5" x2="81.5" y2="643.5" stroke="#c8c8c8" stroke-width="1"/>
<line x1="77.5" y1="647.5" x2="81.5" y2="647.5" stroke="#c8c8c8" stroke-width="1"/>
<text x="72" y="656" text-anchor="end" fill="#fff" font-size="14" >3 396 000</text>
<line x1="74.5" y1="650.5" x2="81.5" y2="650.5" stroke="#c8c8c8" stroke-width="1"/>
<line x1="77.5" y1="654.5" x2="81.5" y2="654.5" stroke="#c8c8c8" stroke-width="1"/>
<line x1="77.5" y1="657.5" x2="81.5" y2="657.5" stroke="#c8c8c8" stroke-width="1"/>
<line x1="77.5" y1="661.5" x2="81.5" y2="661.5" stroke="#c8c8c8" stroke-width="1"/>
<line x1="77.5" y1="665.5" x2="81.5" y2="665.5" stroke="#c8c8c8" stroke-width="1"/>
<text x="1450.5" y="52" text-anchor="start" fill="#fff" font-size="14" >59 500</text>
<line x1="1442.5" y1="47.5" x2="1449" y2="47.5" stroke="#c8c8c8" stroke-width="1"/>
<line x1="1442.5" y1="60.5" x2="1446" y2="60.5" stroke="#c8c8c8" stroke-width="1"/>
<text x="1450.5" y="78" text-anchor="start" fill="#fff" font-size="14" >59 490</text>
<line x1="1442.5" y1="72.5" x2="1449" y2="72.5" stroke="#c8c8c8" stroke-width="1"/>
<line x1="1442.5" y1="85.5" x2="1446" y2="85.5" stroke="#c8c8c8" stroke-width="1"/>
<text x="1450.5" y="103" text-anchor="start" fill="#fff" font-size="14" >59 480</text>
<line x1="1442.5" y1="98.5" x2="1449" y2="98.5" stroke="#c8c8c8" stroke-width="1"/>
<line x1="1442.5" y1="111.5" x2="1446" y2="111.5" stroke="#c8c8c8" stroke-width="1"/>
<text x="1450.5" y="128" text-anchor="start" fill="#fff" font-size="14" >59 470</text>
<line x1="1442.5" y1="123.5" x2="1449" y2="123.5" stroke="#c8c8c8" stroke-width="1"/>
<line x1="1442.5" y1="136.5" x2="1446" y2="136.5" stroke="#c8c8c8" stroke-width="1"/>
<text x="1450.5" y="154" text-anchor="start" fill="#fff" font-size="14" >59 460</text>
<line x1="1442.5" y1="149.5" x2="1449" y2="149.5" stroke="#c8c8c8" stroke-width="1"/>
<line x1="1442.5" y1="161.5" x2="1446" y2="161.5" stroke="#c8c8c8" stroke-width="1"/>
<text x="1450.5" y="179" text-anchor="start" fill="#fff" font-size="14" >59 450</text>
<line x1="1442.5" y1="174.5" x2="1449" y2="174.5" stroke="#c8c8c8" stroke-width="1"/>
<line x1="1442.5" y1="187.5" x2="1446" y2="187.5" stroke="#c8c8c8" stroke-width="1"/>
<text x="1450.5" y="205" text-anchor="start" fill="#fff" font-size="14" >59 440</text>
<line x1="1442.5" y1="200.5" x2="1449" y2="200.5" stroke="#c8c8c8" stroke-width="1"/>
<line x1="1442.5" y1="212.5" x2="1446" y2="212.5" stroke="#c8c8c8" stroke-width="1"/>
<text x="1450.5" y="230" text-anchor="start" fill="#fff" font-size="14" >59 430</text>
<line x1="1442.5" y1="225.5" x2="1449" y2="225.5" stroke="#c8c8c8" stroke-width="1"/>
<line x1="1442.5" y1="238.5" x2="1446" y2="238.5" stroke="#c8c8c8" stroke-width="1"/>
<text x="1450.5" y="256" text-anchor="start" fill="#fff" font-size="14" >59 420</text>
<line x1="1442.5" y1="250.5" x2="1449" y2="250.5" stroke="#c8c8c8" stroke-width="1"/>
<line x1="1442.5" y1="263.5" x2="1446" y2="263.5" stroke="#c8c8c8" stroke-width="1"/>
<text x="1450.5" y="281" text-anchor="start" fill="#fff" font-size="14" >59 410</text>
<line x1="1442.5" y1="276.5" x2="1449" y2="276.5" stroke="#c8c8c8" stroke-width="1"/>
<line x1="1442.5" y1="289.5" x2="1446" y2="289.5" stroke="#c8c8c8" stroke-width="1"/>
<text x="1450.5" y="306" text-anchor="start" fill="#fff" font-size="14" >59 400</text>
<line x1="1442.5" y1="301.5" x2="1449" y2="301.5" stroke="#c8c8c8" stroke-width="1"/>
<line x1="1442.5" y1="314.5" x2="1446" y2="314.5" stroke="#c8c8c8" stroke-width="1"/>
<text x="1450.5" y="332" text-anchor="start" fill="#fff" font-size="14" >59 390</text>
<line x1="1442.5" y1="327.5" x2="1449" y2="327.5" stroke="#c8c8c8" stroke-width="1"/>
<line x1="1442.5" y1="339.5" x2="1446" y2="339.5" stroke="#c8c8c8" stroke-width="1"/>
<text x="1450.5" y="357" text-anchor="start" fill="#fff" font-size="14" >59 380</text>
<line x1="1442.5" y1="352.5" x2="1449" y2="352.5" stroke="#c8c8c8" stroke-width="1"/>
<line x1="1442.5" y1="365.5" x2="1446" y2="365.5" stroke="#c8c8c8" stroke-width="1"/>
<text x="1450.5" y="383" text-anchor="start" fill="#fff" font-size="14" >59 370</text>
<line x1="1442.5" y1="377.5" x2="1449" y2="377.5" stroke="#c8c8c8" stroke-width="1"/>
<line x1="1442.5" y1="390.5" x2="1446" y2="390.5" stroke="#c8c8c8" stroke-width="1"/>
<text x="1450.5" y="408" text-anchor="start" fill="#fff" font-size="14" >59 360</text>
<line x1="1442.5" y1="403.5" x2="1449" y2="403.5" stroke="#c8c8c8" stroke-width="1"/>
<line x1="1442.5" y1="416.5" x2="1446" y2="416.5" stroke="#c8c8c8" stroke-width="1"/>
<text x="1450.5" y="434" text-anchor="start" fill="#fff" font-size="14" >59 350</text>
<line x1="1442.5" y1="428.5" x2="1449" y2="428.5" stroke="#c8c8c8" stroke-width="1"/>
<line x1="1442.5" y1="441.5" x2="1446" y2="441.5" stroke="#c8c8c8" stroke-width="1"/>
<text x="1450.5" y="459" text-anchor="start" fill="#fff" font-size="14" >59 340</text>
<line x1="1442.5" y1="454.5" x2="1449" y2="454.5" stroke="#c8c8c8" stroke-width="1"/>
<line x1="1442.5" y1="467.5" x2="1446" y2="467.5" stroke="#c8c8c8" stroke-width="1"/>
<text x="1450.5" y="484" text-anchor="start" fill="#fff" font-size="14" >59 330</text>
<line x1="1442.5" y1="479.5" x2="1449" y2="479.5" stroke="#c8c8c8" stroke-width="1"/>
<line x1="1442.5" y1="492.5" x2="1446" y2="492.5" stroke="#c8c8c8" stroke-width="1"/>
<text x="1450.5" y="510" text-anchor="start" fill="#fff" font-size="14" >59 320</text>
<line x1="1442.5" y1="505.5" x2="1449" y2="505.5" stroke="#c8c8c8" stroke-width="1"/>
<line x1="1442.5" y1="517.5" x2="1446" y2="517.5" stroke="#c8c8c8" stroke-width="1"/>
<text x="1450.5" y="535" text-anchor="start" fill="#fff" font-size="14" >59 310</text>
<line x1="1442.5" y1="530.5" x2="1449" y2="530.5" stroke="#c8c8c8" stroke-width="1"/>
<line x1="1442.5" y1="543.5" x2="1446" y2="543.5" stroke="#c8c8c8" stroke-width="1"/>
<text x="1450.5" y="561" text-anchor="start" fill="#fff" font-size="14" >59 300</text>
<line x1="1442.5" y1="555.5" x2="1449" y2="555.5" stroke="#c8c8c8" stroke-width="1"/>
<line x1="1442.5" y1="568.5" x2="1446" y2="568.5" stroke="#c8c8c8" stroke-width="1"/>
<text x="1450.5" y="586" text-anchor="start" fill="#fff" font-size="14" >59 290</text>
<line x1="1442.5" y1="581.5" x2="1449" y2="581.5" stroke="#c8c8c8" stroke-width="1"/>
<line x1="1442.5" y1="594.5" x2="1446" y2="594.5" stroke="#c8c8c8" stroke-width="1"/>
<text x="1450.5" y="611" text-anchor="start" fill="#fff" font-size="14" >59 280</text>
<line x1="1442.5" y1="606.5" x2="1449" y2="606.5" stroke="#c8c8c8" stroke-width="1"/>
<line x1="1442.5" y1="619.5" x2="1446" y2="619.5" stroke="#c8c8c8" stroke-width="1"/>
<text x="1450.5" y="637" text-anchor="start" fill="#fff" font-size="14" >59 270</text>
<line x1="1442.5" y1="632.5" x2="1449" y2="632.5" stroke="#c8c8c8" stroke-width="1"/>
<line x1="1442.5" y1="644.5" x2="1446" y2="644.5" stroke="#c8c8c8" stroke-width="1"/>
<text x="1450.5" y="662" text-anchor="start" fill="#fff" font-size="14" >59 260</text>
<line x1="1442.5" y1="657.5" x2="1449" y2="657.5" stroke="#c8c8c8" stroke-width="1"/>
<rect x="6.5" y="656.5" width="69" height="17" fill="#000" stroke="#e8e8e8"/>
<text x="10" y="671" text-anchor="start" fill="#19e8f0" font-size="14" >3 389 958</text>
<text x="73" y="717" text-anchor="end" fill="#fff" font-size="14" >10 000</text>
<text x="73" y="749" text-anchor="end" fill="#fff" font-size="14" >5 000</text>
<text x="73" y="781" text-anchor="end" fill="#fff" font-size="14" >0</text>
<line x1="75" y1="711.5" x2="81.5" y2="711.5" stroke="#c8c8c8" stroke-width="1"/>
<line x1="75" y1="743.5" x2="81.5" y2="743.5" stroke="#c8c8c8" stroke-width="1"/>
<line x1="75" y1="775.5" x2="81.5" y2="775.5" stroke="#c8c8c8" stroke-width="1"/>
<line x1="78" y1="776.5" x2="81.5" y2="776.5" stroke="#c8c8c8" stroke-width="1"/>
<line x1="78" y1="769.5" x2="81.5" y2="769.5" stroke="#c8c8c8" stroke-width="1"/>
<line x1="78" y1="763.5" x2="81.5" y2="763.5" stroke="#c8c8c8" stroke-width="1"/>
<line x1="78" y1="756.5" x2="81.5" y2="756.5" stroke="#c8c8c8" stroke-width="1"/>
<line x1="78" y1="750.5" x2="81.5" y2="750.5" stroke="#c8c8c8" stroke-width="1"/>
<line x1="78" y1="744.5" x2="81.5" y2="744.5" stroke="#c8c8c8" stroke-width="1"/>
<line x1="78" y1="737.5" x2="81.5" y2="737.5" stroke="#c8c8c8" stroke-width="1"/>
<line x1="78" y1="731.5" x2="81.5" y2="731.5" stroke="#c8c8c8" stroke-width="1"/>
<line x1="78" y1="724.5" x2="81.5" y2="724.5" stroke="#c8c8c8" stroke-width="1"/>
<line x1="78" y1="718.5" x2="81.5" y2="718.5" stroke="#c8c8c8" stroke-width="1"/>
<line x1="78" y1="712.5" x2="81.5" y2="712.5" stroke="#c8c8c8" stroke-width="1"/>
<line x1="78" y1="705.5" x2="81.5" y2="705.5" stroke="#c8c8c8" stroke-width="1"/>
<line x1="78" y1="699.5" x2="81.5" y2="699.5" stroke="#c8c8c8" stroke-width="1"/>
<line x1="78" y1="692.5" x2="81.5" y2="692.5" stroke="#c8c8c8" stroke-width="1"/>
<line x1="78" y1="686.5" x2="81.5" y2="686.5" stroke="#c8c8c8" stroke-width="1"/>
<text x="1450.5" y="749" text-anchor="start" fill="#fff" font-size="14" >5 000</text>
<line x1="1442.5" y1="743.5" x2="1449" y2="743.5" stroke="#c8c8c8" stroke-width="1"/>
<line x1="1442.5" y1="768.5" x2="1446" y2="768.5" stroke="#c8c8c8" stroke-width="1"/>
<line x1="1442.5" y1="760.5" x2="1446" y2="760.5" stroke="#c8c8c8" stroke-width="1"/>
<line x1="1442.5" y1="752.5" x2="1446" y2="752.5" stroke="#c8c8c8" stroke-width="1"/>
<line x1="1442.5" y1="744.5" x2="1446" y2="744.5" stroke="#c8c8c8" stroke-width="1"/>
<line x1="1442.5" y1="736.5" x2="1446" y2="736.5" stroke="#c8c8c8" stroke-width="1"/>
<line x1="1442.5" y1="728.5" x2="1446" y2="728.5" stroke="#c8c8c8" stroke-width="1"/>
<line x1="1442.5" y1="720.5" x2="1446" y2="720.5" stroke="#c8c8c8" stroke-width="1"/>
<line x1="1442.5" y1="712.5" x2="1446" y2="712.5" stroke="#c8c8c8" stroke-width="1"/>
<line x1="1442.5" y1="704.5" x2="1446" y2="704.5" stroke="#c8c8c8" stroke-width="1"/>
<line x1="1442.5" y1="696.5" x2="1446" y2="696.5" stroke="#c8c8c8" stroke-width="1"/>
<line x1="1442.5" y1="688.5" x2="1446" y2="688.5" stroke="#c8c8c8" stroke-width="1"/>
<rect x="1447.5" y="763.5" width="30" height="17" fill="#000" stroke="#e8e8e8"/>
<text x="1450.5" y="777" text-anchor="start" fill="#19e8f0" font-size="14" >368</text>
<line x1="128.5" y1="792.5" x2="128.5" y2="811.5" stroke="#c8c8c8" stroke-width="1"/>
<text x="131.5" y="807" text-anchor="start" fill="#fff" font-size="14" >14h</text>
<line x1="182.5" y1="792.5" x2="182.5" y2="797.5" stroke="#c8c8c8" stroke-width="1"/>
<text x="185.5" y="807" text-anchor="start" fill="#fff" font-size="14" >:15</text>
<line x1="237.5" y1="792.5" x2="237.5" y2="797.5" stroke="#c8c8c8" stroke-width="1"/>
<text x="240.5" y="807" text-anchor="start" fill="#fff" font-size="14" >:25</text>
<line x1="291.5" y1="792.5" x2="291.5" y2="797.5" stroke="#c8c8c8" stroke-width="1"/>
<text x="294.5" y="807" text-anchor="start" fill="#fff" font-size="14" >:35</text>
<line x1="345.5" y1="792.5" x2="345.5" y2="797.5" stroke="#c8c8c8" stroke-width="1"/>
<text x="348.5" y="807" text-anchor="start" fill="#fff" font-size="14" >:45</text>
<line x1="400.5" y1="792.5" x2="400.5" y2="797.5" stroke="#c8c8c8" stroke-width="1"/>
<line x1="427.5" y1="792.5" x2="427.5" y2="811.5" stroke="#c8c8c8" stroke-width="1"/>
<text x="430.5" y="807" text-anchor="start" fill="#fff" font-size="14" >15h</text>
<line x1="481.5" y1="792.5" x2="481.5" y2="797.5" stroke="#c8c8c8" stroke-width="1"/>
<text x="484.5" y="807" text-anchor="start" fill="#fff" font-size="14" >:10</text>
<line x1="535.5" y1="792.5" x2="535.5" y2="797.5" stroke="#c8c8c8" stroke-width="1"/>
<text x="538.5" y="807" text-anchor="start" fill="#fff" font-size="14" >:20</text>
<line x1="590.5" y1="792.5" x2="590.5" y2="797.5" stroke="#c8c8c8" stroke-width="1"/>
<text x="593.5" y="807" text-anchor="start" fill="#fff" font-size="14" >:30</text>
<line x1="644.5" y1="792.5" x2="644.5" y2="797.5" stroke="#c8c8c8" stroke-width="1"/>
<text x="647.5" y="807" text-anchor="start" fill="#fff" font-size="14" >:40</text>
<line x1="698.5" y1="792.5" x2="698.5" y2="797.5" stroke="#c8c8c8" stroke-width="1"/>
<text x="701.5" y="807" text-anchor="start" fill="#fff" font-size="14" >:50</text>
<line x1="753.5" y1="792.5" x2="753.5" y2="811.5" stroke="#c8c8c8" stroke-width="1"/>
<text x="756.5" y="807" text-anchor="start" fill="#fff" font-size="14" >16h</text>
<line x1="807.5" y1="792.5" x2="807.5" y2="797.5" stroke="#c8c8c8" stroke-width="1"/>
<text x="810.5" y="807" text-anchor="start" fill="#fff" font-size="14" >:10</text>
<line x1="861.5" y1="792.5" x2="861.5" y2="797.5" stroke="#c8c8c8" stroke-width="1"/>
<text x="864.5" y="807" text-anchor="start" fill="#fff" font-size="14" >:20</text>
<line x1="916.5" y1="792.5" x2="916.5" y2="797.5" stroke="#c8c8c8" stroke-width="1"/>
<text x="919.5" y="807" text-anchor="start" fill="#fff" font-size="14" >:30</text>
<line x1="970.5" y1="792.5" x2="970.5" y2="797.5" stroke="#c8c8c8" stroke-width="1"/>
<text x="973.5" y="807" text-anchor="start" fill="#fff" font-size="14" >:40</text>
<line x1="1024.5" y1="792.5" x2="1024.5" y2="797.5" stroke="#c8c8c8" stroke-width="1"/>
<text x="1027.5" y="807" text-anchor="start" fill="#fff" font-size="14" >:50</text>
<line x1="1079.5" y1="792.5" x2="1079.5" y2="811.5" stroke="#c8c8c8" stroke-width="1"/>
<text x="1082.5" y="807" text-anchor="start" fill="#fff" font-size="14" >17h</text>
<line x1="1133.5" y1="792.5" x2="1133.5" y2="797.5" stroke="#c8c8c8" stroke-width="1"/>
<text x="1136.5" y="807" text-anchor="start" fill="#fff" font-size="14" >:10</text>
<line x1="1187.5" y1="792.5" x2="1187.5" y2="797.5" stroke="#c8c8c8" stroke-width="1"/>
<text x="1190.5" y="807" text-anchor="start" fill="#fff" font-size="14" >:20</text>
<line x1="1242.5" y1="792.5" x2="1242.5" y2="797.5" stroke="#c8c8c8" stroke-width="1"/>
<text x="1245.5" y="807" text-anchor="start" fill="#fff" font-size="14" >:30</text>
<line x1="1296.5" y1="792.5" x2="1296.5" y2="797.5" stroke="#c8c8c8" stroke-width="1"/>
<text x="1299.5" y="807" text-anchor="start" fill="#fff" font-size="14" >:40</text>
<line x1="1350.5" y1="792.5" x2="1350.5" y2="797.5" stroke="#c8c8c8" stroke-width="1"/>
<text x="1353.5" y="807" text-anchor="start" fill="#fff" font-size="14" >:50</text>
<line x1="1405.5" y1="792.5" x2="1405.5" y2="811.5" stroke="#c8c8c8" stroke-width="1"/>
<text x="1408.5" y="807" text-anchor="start" fill="#fff" font-size="14" >18h</text>
<rect x="84" y="765" width="2" height="10.5" fill="#ff0000" />
<rect x="89" y="746" width="2" height="29.5" fill="#ff0000" />
<rect x="95" y="761" width="2" height="14.5" fill="#10b010" />
<rect x="100" y="770" width="2" height="5.5" fill="#ff0000" />
<rect x="105" y="768" width="2" height="7.5" fill="#ff0000" />
<rect x="111" y="770" width="2" height="5.5" fill="#ff0000" />
<rect x="116" y="770" width="2" height="5.5" fill="#ff0000" />
<rect x="122" y="761" width="2" height="14.5" fill="#ff0000" />
<rect x="127" y="724" width="2" height="51.5" fill="#ff0000" />
<rect x="133" y="708" width="2" height="67.5" fill="#ff0000" />
<rect x="138" y="745" width="2" height="30.5" fill="#10b010" />
<rect x="143" y="762" width="2" height="13.5" fill="#10b010" />
<rect x="149" y="760" width="2" height="15.5" fill="#10b010" />
<rect x="154" y="753" width="2" height="22.5" fill="#10b010" />
<rect x="160" y="752" width="2" height="23.5" fill="#10b010" />
<rect x="165" y="752" width="2" height="23.5" fill="#10b010" />
<rect x="171" y="768" width="2" height="7.5" fill="#ff0000" />
<rect x="176" y="754" width="2" height="21.5" fill="#ff0000" />
<rect x="181" y="770" width="2" height="5.5" fill="#10b010" />
<rect x="187" y="766" width="2" height="9.5" fill="#ff0000" />
<rect x="192" y="768" width="2" height="7.5" fill="#10b010" />
<rect x="198" y="773" width="2" height="2.5" fill="#10b010" />
<rect x="203" y="766" width="2" height="9.5" fill="#ff0000" />
<rect x="209" y="770" width="2" height="5.5" fill="#ff0000" />
<rect x="214" y="766" width="2" height="9.5" fill="#ff0000" />
<rect x="220" y="771" width="2" height="4.5" fill="#ff0000" />
<rect x="225" y="772" width="2" height="3.5" fill="#ff0000" />
<rect x="230" y="714" width="2" height="61.5" fill="#10b010" />
<rect x="236" y="738" width="2" height="37.5" fill="#ff0000" />
<rect x="241" y="764" width="2" height="11.5" fill="#10b010" />
<rect x="247" y="746" width="2" height="29.5" fill="#10b010" />
<rect x="252" y="748" width="2" height="27.5" fill="#10b010" />
<rect x="258" y="766" width="2" height="9.5" fill="#10b010" />
<rect x="263" y="766" width="2" height="9.5" fill="#10b010" />
<rect x="268" y="771" width="2" height="4.5" fill="#10b010" />
<rect x="274" y="755" width="2" height="20.5" fill="#ff0000" />
<rect x="279" y="772" width="2" height="3.5" fill="#10b010" />
<rect x="285" y="772" width="2" height="3.5" fill="#10b010" />
<rect x="290" y="760" width="2" height="15.5" fill="#ff0000" />
<rect x="296" y="772" width="2" height="3.5" fill="#ff0000" />
<rect x="301" y="771" width="2" height="4.5" fill="#ff0000" />
<rect x="306" y="766" width="2" height="9.5" fill="#10b010" />
<rect x="312" y="764" width="2" height="11.5" fill="#ff0000" />
<rect x="317" y="760" width="2" height="15.5" fill="#ff0000" />
<rect x="323" y="746" width="2" height="29.5" fill="#10b010" />
<rect x="328" y="758" width="2" height="17.5" fill="#ff0000" />
<rect x="334" y="770" width="2" height="5.5" fill="#10b010" />
<rect x="339" y="767" width="2" height="8.5" fill="#ff0000" />
<rect x="344" y="748" width="2" height="27.5" fill="#ff0000" />
<rect x="350" y="771" width="2" height="4.5" fill="#ff0000" />
<rect x="355" y="746" width="2" height="29.5" fill="#ff0000" />
<rect x="361" y="761" width="2" height="14.5" fill="#ff0000" />
<rect x="366" y="772" width="2" height="3.5" fill="#10b010" />
<rect x="372" y="756" width="2" height="19.5" fill="#ff0000" />
<rect x="377" y="772" width="2" height="3.5" fill="#10b010" />
<rect x="382" y="771" width="2" height="4.5" fill="#ff0000" />
<rect x="388" y="771" width="2" height="4.5" fill="#ff0000" />
<rect x="393" y="760" width="2" height="15.5" fill="#ff0000" />
<rect x="399" y="771" width="2" height="4.5" fill="#10b010" />
<rect x="404" y="754" width="2" height="21.5" fill="#10b010" />
<rect x="410" y="771" width="2" height="4.5" fill="#10b010" />
<rect x="415" y="760" width="2" height="15.5" fill="#10b010" />
<rect x="420" y="771" width="2" height="4.5" fill="#10b010" />
<rect x="426" y="769" width="2" height="6.5" fill="#ff0000" />
<rect x="431" y="772" width="2" height="3.5" fill="#ff0000" />
<rect x="437" y="762" width="2" height="13.5" fill="#ff0000" />
<rect x="442" y="747" width="2" height="28.5" fill="#10b010" />
<rect x="448" y="752" width="2" height="23.5" fill="#ff0000" />
<rect x="453" y="750" width="2" height="25.5" fill="#ff0000" />
<rect x="458" y="771" width="2" height="4.5" fill="#10b010" />
<rect x="464" y="771" width="2" height="4.5" fill="#10b010" />
<rect x="469" y="762" width="2" height="13.5" fill="#ff0000" />
<rect x="475" y="772" width="2" height="3.5" fill="#ff0000" />
<rect x="480" y="766" width="2" height="9.5" fill="#ff0000" />
<rect x="486" y="744" width="2" height="31.5" fill="#10b010" />
<rect x="491" y="768" width="2" height="7.5" fill="#ff0000" />
<rect x="496" y="764" width="2" height="11.5" fill="#10b010" />
<rect x="502" y="768" width="2" height="7.5" fill="#ff0000" />
<rect x="507" y="748" width="2" height="27.5" fill="#10b010" />
<rect x="513" y="766" width="2" height="9.5" fill="#10b010" />
<rect x="518" y="756" width="2" height="19.5" fill="#ff0000" />
<rect x="524" y="770" width="2" height="5.5" fill="#10b010" />
<rect x="529" y="773" width="2" height="2.5" fill="#ff0000" />
<rect x="534" y="756" width="2" height="19.5" fill="#10b010" />
<rect x="540" y="766" width="2" height="9.5" fill="#ff0000" />
<rect x="545" y="751" width="2" height="24.5" fill="#ff0000" />
<rect x="551" y="762" width="2" height="13.5" fill="#ff0000" />
<rect x="556" y="762" width="2" height="13.5" fill="#10b010" />
<rect x="562" y="768" width="2" height="7.5" fill="#10b010" />
<rect x="567" y="766" width="2" height="9.5" fill="#ff0000" />
<rect x="572" y="768" width="2" height="7.5" fill="#ff0000" />
<rect x="578" y="768" width="2" height="7.5" fill="#10b010" />
<rect x="583" y="772" width="2" height="3.5" fill="#10b010" />
<rect x="589" y="772" width="2" height="3.5" fill="#ff0000" />
<rect x="594" y="766" width="2" height="9.5" fill="#ff0000" />
<rect x="600" y="766" width="2" height="9.5" fill="#10b010" />
<rect x="605" y="773" width="2" height="2.5" fill="#10b010" />
<rect x="610" y="772" width="2" height="3.5" fill="#10b010" />
<rect x="616" y="754" width="2" height="21.5" fill="#10b010" />
<rect x="621" y="742" width="2" height="33.5" fill="#10b010" />
<rect x="627" y="762" width="2" height="13.5" fill="#ff0000" />
<rect x="632" y="756" width="2" height="19.5" fill="#10b010" />
<rect x="638" y="766" width="2" height="9.5" fill="#ff0000" />
<rect x="643" y="760" width="2" height="15.5" fill="#10b010" />
<rect x="648" y="766" width="2" height="9.5" fill="#ff0000" />
<rect x="654" y="751" width="2" height="24.5" fill="#ff0000" />
<rect x="659" y="760" width="2" height="15.5" fill="#ff0000" />
<rect x="665" y="752" width="2" height="23.5" fill="#ff0000" />
<rect x="670" y="746" width="2" height="29.5" fill="#ff0000" />
<rect x="676" y="765" width="2" height="10.5" fill="#10b010" />
<rect x="681" y="754" width="2" height="21.5" fill="#ff0000" />
<rect x="686" y="754" width="2" height="21.5" fill="#10b010" />
<rect x="692" y="764" width="2" height="11.5" fill="#ff0000" />
<rect x="697" y="760" width="2" height="15.5" fill="#ff0000" />
<rect x="703" y="759" width="2" height="16.5" fill="#ff0000" />
<rect x="708" y="766" width="2" height="9.5" fill="#10b010" />
<rect x="714" y="766" width="2" height="9.5" fill="#ff0000" />
<rect x="719" y="744" width="2" height="31.5" fill="#ff0000" />
<rect x="724" y="746" width="2" height="29.5" fill="#10b010" />
<rect x="730" y="765" width="2" height="10.5" fill="#ff0000" />
<rect x="735" y="762" width="2" height="13.5" fill="#ff0000" />
<rect x="741" y="744" width="2" height="31.5" fill="#ff0000" />
<rect x="746" y="764" width="2" height="11.5" fill="#10b010" />
<rect x="752" y="745" width="2" height="30.5" fill="#ff0000" />
<rect x="757" y="756" width="2" height="19.5" fill="#ff0000" />
<rect x="762" y="765" width="2" height="10.5" fill="#ff0000" />
<rect x="768" y="771" width="2" height="4.5" fill="#10b010" />
<rect x="773" y="767" width="2" height="8.5" fill="#10b010" />
<rect x="779" y="769" width="2" height="6.5" fill="#ff0000" />
<rect x="784" y="769" width="2" height="6.5" fill="#ff0000" />
<rect x="790" y="767" width="2" height="8.5" fill="#ff0000" />
<rect x="795" y="748" width="2" height="27.5" fill="#10b010" />
<rect x="801" y="742" width="2" height="33.5" fill="#10b010" />
<rect x="806" y="728" width="2" height="47.5" fill="#ff0000" />
<rect x="811" y="761" width="2" height="14.5" fill="#ff0000" />
<rect x="817" y="765" width="2" height="10.5" fill="#10b010" />
<rect x="822" y="765" width="2" height="10.5" fill="#10b010" />
<rect x="828" y="771" width="2" height="4.5" fill="#ff0000" />
<rect x="833" y="763" width="2" height="12.5" fill="#10b010" />
<rect x="839" y="756" width="2" height="19.5" fill="#ff0000" />
<rect x="844" y="769" width="2" height="6.5" fill="#ff0000" />
<rect x="849" y="760" width="2" height="15.5" fill="#ff0000" />
<rect x="855" y="768" width="2" height="7.5" fill="#ff0000" />
<rect x="860" y="744" width="2" height="31.5" fill="#ff0000" />
<rect x="866" y="769" width="2" height="6.5" fill="#10b010" />
<rect x="871" y="767" width="2" height="8.5" fill="#10b010" />
<rect x="877" y="758" width="2" height="17.5" fill="#10b010" />
<rect x="882" y="771" width="2" height="4.5" fill="#10b010" />
<rect x="887" y="768" width="2" height="7.5" fill="#10b010" />
<rect x="893" y="769" width="2" height="6.5" fill="#10b010" />
<rect x="898" y="769" width="2" height="6.5" fill="#10b010" />
<rect x="904" y="772" width="2" height="3.5" fill="#ff0000" />
<rect x="909" y="766" width="2" height="9.5" fill="#10b010" />
<rect x="915" y="770" width="2" height="5.5" fill="#10b010" />
<rect x="920" y="765" width="2" height="10.5" fill="#ff0000" />
<rect x="925" y="769" width="2" height="6.5" fill="#10b010" />
<rect x="931" y="755" width="2" height="20.5" fill="#ff0000" />
<rect x="936" y="768" width="2" height="7.5" fill="#ff0000" />
<rect x="942" y="771" width="2" height="4.5" fill="#ff0000" />
<rect x="947" y="766" width="2" height="9.5" fill="#ff0000" />
<rect x="953" y="774" width="2" height="1.5" fill="#10b010" />
<rect x="958" y="774" width="2" height="1.5" fill="#10b010" />
<rect x="963" y="760" width="2" height="15.5" fill="#ff0000" />
<rect x="969" y="765" width="2" height="10.5" fill="#ff0000" />
<rect x="974" y="759" width="2" height="16.5" fill="#10b010" />
<rect x="980" y="761" width="2" height="14.5" fill="#ff0000" />
<rect x="985" y="749" width="2" height="26.5" fill="#ff0000" />
<rect x="991" y="771" width="2" height="4.5" fill="#ff0000" />
<rect x="996" y="744" width="2" height="31.5" fill="#ff0000" />
<rect x="1001" y="762" width="2" height="13.5" fill="#10b010" />
<rect x="1007" y="763" width="2" height="12.5" fill="#10b010" />
<rect x="1012" y="763" width="2" height="12.5" fill="#ff0000" />
<rect x="1018" y="766" width="2" height="9.5" fill="#ff0000" />
<rect x="1023" y="768" width="2" height="7.5" fill="#10b010" />
<rect x="1029" y="764" width="2" height="11.5" fill="#ff0000" />
<rect x="1034" y="759" width="2" height="16.5" fill="#10b010" />
<rect x="1039" y="744" width="2" height="31.5" fill="#ff0000" />
<rect x="1045" y="770" width="2" height="5.5" fill="#10b010" />
<rect x="1050" y="759" width="2" height="16.5" fill="#10b010" />
<rect x="1056" y="760" width="2" height="15.5" fill="#ff0000" />
<rect x="1061" y="748" width="2" height="27.5" fill="#10b010" />
<rect x="1067" y="759" width="2" height="16.5" fill="#ff0000" />
<rect x="1072" y="766" width="2" height="9.5" fill="#10b010" />
<rect x="1077" y="748" width="2" height="27.5" fill="#ff0000" />
<rect x="1083" y="755" width="2" height="20.5" fill="#ff0000" />
<rect x="1088" y="755" width="2" height="20.5" fill="#10b010" />
<rect x="1094" y="764" width="2" height="11.5" fill="#10b010" />
<rect x="1099" y="756" width="2" height="19.5" fill="#10b010" />
<rect x="1105" y="765" width="2" height="10.5" fill="#ff0000" />
<rect x="1110" y="765" width="2" height="10.5" fill="#ff0000" />
<rect x="1115" y="757" width="2" height="18.5" fill="#ff0000" />
<rect x="1121" y="761" width="2" height="14.5" fill="#10b010" />
<rect x="1126" y="766" width="2" height="9.5" fill="#10b010" />
<rect x="1132" y="763" width="2" height="12.5" fill="#ff0000" />
<rect x="1137" y="771" width="2" height="4.5" fill="#ff0000" />
<rect x="1143" y="772" width="2" height="3.5" fill="#10b010" />
<rect x="1148" y="770" width="2" height="5.5" fill="#10b010" />
<rect x="1153" y="767" width="2" height="8.5" fill="#ff0000" />
<rect x="1159" y="756" width="2" height="19.5" fill="#10b010" />
<rect x="1164" y="765" width="2" height="10.5" fill="#10b010" />
<rect x="1170" y="728" width="2" height="47.5" fill="#10b010" />
<rect x="1175" y="728" width="2" height="47.5" fill="#ff0000" />
<rect x="1181" y="747" width="2" height="28.5" fill="#ff0000" />
<rect x="1186" y="747" width="2" height="28.5" fill="#10b010" />
<rect x="1191" y="728" width="2" height="47.5" fill="#10b010" />
<rect x="1197" y="745" width="2" height="30.5" fill="#ff0000" />
<rect x="1202" y="767" width="2" height="8.5" fill="#ff0000" />
<rect x="1208" y="766" width="2" height="9.5" fill="#10b010" />
<rect x="1213" y="742" width="2" height="33.5" fill="#10b010" />
<rect x="1219" y="763" width="2" height="12.5" fill="#ff0000" />
<rect x="1224" y="759" width="2" height="16.5" fill="#ff0000" />
<rect x="1229" y="767" width="2" height="8.5" fill="#ff0000" />
<rect x="1235" y="756" width="2" height="19.5" fill="#10b010" />
<rect x="1240" y="758" width="2" height="17.5" fill="#10b010" />
<rect x="1246" y="766" width="2" height="9.5" fill="#ff0000" />
<rect x="1251" y="757" width="2" height="18.5" fill="#ff0000" />
<rect x="1257" y="764" width="2" height="11.5" fill="#ff0000" />
<rect x="1262" y="770" width="2" height="5.5" fill="#10b010" />
<rect x="1267" y="758" width="2" height="17.5" fill="#ff0000" />
<rect x="1273" y="742" width="2" height="33.5" fill="#10b010" />
<rect x="1278" y="728" width="2" height="47.5" fill="#ff0000" />
<rect x="1284" y="759" width="2" height="16.5" fill="#10b010" />
<rect x="1289" y="767" width="2" height="8.5" fill="#ff0000" />
<rect x="1295" y="763" width="2" height="12.5" fill="#10b010" />
<rect x="1300" y="760" width="2" height="15.5" fill="#ff0000" />
<rect x="1305" y="728" width="2" height="47.5" fill="#ff0000" />
<rect x="1311" y="758" width="2" height="17.5" fill="#ff0000" />
<rect x="1316" y="750" width="2" height="25.5" fill="#10b010" />
<rect x="1322" y="746" width="2" height="29.5" fill="#ff0000" />
<rect x="1327" y="769" width="2" height="6.5" fill="#10b010" />
<rect x="1333" y="767" width="2" height="8.5" fill="#10b010" />
<rect x="1338" y="763" width="2" height="12.5" fill="#10b010" />
<rect x="1344" y="758" width="2" height="17.5" fill="#10b010" />
<rect x="1349" y="762" width="2" height="13.5" fill="#ff0000" />
<rect x="1354" y="758" width="2" height="17.5" fill="#ff0000" />
<rect x="1360" y="763" width="2" height="12.5" fill="#10b010" />
<rect x="1365" y="770" width="2" height="5.5" fill="#ff0000" />
<rect x="1371" y="772" width="2" height="3.5" fill="#ff0000" />
<rect x="1376" y="772" width="2" height="3.5" fill="#ff0000" />
<rect x="1382" y="769" width="2" height="6.5" fill="#10b010" />
<rect x="1387" y="771" width="2" height="4.5" fill="#10b010" />
<rect x="1392" y="772" width="2" height="3.5" fill="#10b010" />
<rect x="1398" y="763" width="2" height="12.5" fill="#ff0000" />
<rect x="1403" y="760" width="2" height="15.5" fill="#10b010" />
<rect x="1409" y="764" width="2" height="11.5" fill="#10b010" />
<rect x="1414" y="752" width="2" height="23.5" fill="#ff0000" />
<rect x="1420" y="734" width="2" height="41.5" fill="#ff0000" />
<rect x="1425" y="761" width="2" height="14.5" fill="#ff0000" />
<rect x="1430" y="756" width="2" height="19.5" fill="#ff0000" />
<rect x="1436" y="756" width="2" height="19.5" fill="#10b010" />
<polyline fill="none" stroke="#0cf2fa" stroke-width="1.1" stroke-linejoin="round" points="226.5,105.0 232.0,150.0 238.0,215.0 243.0,250.0 246.0,300.0 250.0,350.0 254.0,375.0 258.0,390.0"/>
<rect x="226" y="40" width="25" height="3" fill="#e8a0a0" />
<rect x="226" y="43" width="26" height="2" fill="#e8a8a8" />
<rect x="226" y="45" width="25" height="1" fill="#e8a8a8" />
<rect x="226" y="47" width="45" height="2" fill="#e49090" />
<rect x="226" y="49" width="42" height="2" fill="#e8a8a8" />
<rect x="226" y="51" width="42" height="3" fill="#e49090" />
<rect x="226" y="54" width="22" height="3" fill="#e89a9a" />
<rect x="226" y="57" width="22" height="1" fill="#e8a8a8" />
<rect x="226" y="58" width="20" height="2" fill="#a0a8dc" />
<rect x="226" y="60" width="20" height="3" fill="#9c9cd8" />
<rect x="226" y="63" width="22" height="3" fill="#a0a8dc" />
<rect x="226" y="66" width="21" height="2" fill="#b0a8d8" />
<rect x="226" y="68" width="21" height="2" fill="#a0a8dc" />
<rect x="226" y="70" width="22" height="2" fill="#e49090" />
<rect x="226" y="72" width="20" height="3" fill="#eaa4a4" />
<rect x="226" y="75" width="23" height="2" fill="#e49090" />
<rect x="226" y="77" width="21" height="2" fill="#eaa4a4" />
<rect x="226" y="79" width="20" height="2" fill="#e89a9a" />
<rect x="226" y="82" width="10" height="2" fill="#e8a0a0" />
<rect x="226" y="84" width="11" height="2" fill="#dc9090" />
<rect x="226" y="86" width="11" height="1" fill="#dc9090" />
<rect x="226" y="87" width="8" height="2" fill="#c8a0c0" />
<rect x="226" y="89" width="10" height="2" fill="#a0a8dc" />
<rect x="226" y="91" width="5" height="3" fill="#ee2020" />
<rect x="226" y="94" width="5" height="2" fill="#ee2020" />
<rect x="226" y="96" width="5" height="1" fill="#ee2020" />
<rect x="226" y="98" width="31" height="3" fill="#1818e8" />
<rect x="226" y="101" width="31" height="2" fill="#1818e8" />
<rect x="226" y="103" width="31" height="1" fill="#1818e8" />
<rect x="226" y="105" width="6" height="2" fill="#dc9090" />
<rect x="226" y="107" width="5" height="2" fill="#e89a9a" />
<rect x="226" y="109" width="6" height="1" fill="#e49090" />
<rect x="226" y="110" width="9" height="3" fill="#e8a0a0" />
<rect x="226" y="113" width="9" height="2" fill="#dc9090" />
<rect x="226" y="115" width="9" height="1" fill="#e8a0a0" />
<rect x="226" y="116" width="15" height="2" fill="#e8a8a8" />
<rect x="226" y="118" width="13" height="3" fill="#e8a0a0" />
<rect x="226" y="121" width="29" height="3" fill="#b0a8d8" />
<rect x="226" y="124" width="30" height="2" fill="#c8a0c0" />
<rect x="226" y="126" width="29" height="2" fill="#9c9cd8" />
<rect x="226" y="128" width="29" height="1" fill="#9c9cd8" />
<rect x="226" y="129" width="18" height="2" fill="#dc9090" />
<rect x="226" y="131" width="18" height="2" fill="#e49090" />
<rect x="226" y="133" width="21" height="2" fill="#e49090" />
<rect x="226" y="135" width="19" height="1" fill="#e8a0a0" />
<rect x="226" y="136" width="20" height="2" fill="#dc9090" />
<rect x="226" y="138" width="17" height="2" fill="#e89a9a" />
<rect x="226" y="140" width="18" height="3" fill="#dc9090" />
<rect x="226" y="143" width="20" height="2" fill="#e89a9a" />
<rect x="226" y="145" width="26" height="3" fill="#b0a8d8" />
<rect x="226" y="148" width="23" height="1" fill="#9c9cd8" />
<rect x="226" y="149" width="28" height="2" fill="#e89a9a" />
<rect x="226" y="151" width="31" height="2" fill="#e8a8a8" />
<rect x="226" y="153" width="14" height="3" fill="#1818e8" />
<rect x="226" y="156" width="14" height="2" fill="#1818e8" />
<rect x="226" y="158" width="17" height="2" fill="#e8a0a0" />
<rect x="226" y="160" width="17" height="2" fill="#e89a9a" />
<rect x="226" y="162" width="18" height="2" fill="#e8a0a0" />
<rect x="226" y="164" width="19" height="3" fill="#e89a9a" />
<rect x="226" y="167" width="20" height="1" fill="#e8a0a0" />
<rect x="226" y="168" width="28" height="2" fill="#a8a4dc" />
<rect x="226" y="170" width="30" height="2" fill="#a0a8dc" />
<rect x="226" y="172" width="30" height="1" fill="#c8a0c0" />
<rect x="226" y="173" width="23" height="2" fill="#e8a0a0" />
<rect x="226" y="175" width="24" height="2" fill="#e89a9a" />
<rect x="226" y="177" width="21" height="3" fill="#e89a9a" />
<rect x="226" y="180" width="22" height="2" fill="#e49090" />
<rect x="226" y="182" width="22" height="2" fill="#dc9090" />
<rect x="226" y="184" width="23" height="1" fill="#e8a0a0" />
<rect x="226" y="185" width="21" height="2" fill="#e89a9a" />
<rect x="226" y="187" width="18" height="2" fill="#eaa4a4" />
<rect x="226" y="189" width="20" height="2" fill="#dc9090" />
<rect x="226" y="191" width="13" height="3" fill="#c8a0c0" />
<rect x="226" y="194" width="14" height="3" fill="#c8a0c0" />
<rect x="226" y="197" width="12" height="2" fill="#b0a8d8" />
<rect x="226" y="199" width="31" height="3" fill="#1818e8" />
<rect x="226" y="202" width="31" height="3" fill="#1818e8" />
<rect x="226" y="205" width="31" height="1" fill="#1818e8" />
<rect x="226" y="206" width="15" height="2" fill="#e8a0a0" />
<rect x="226" y="208" width="15" height="3" fill="#dc9090" />
<rect x="226" y="211" width="25" height="2" fill="#9c9cd8" />
<rect x="226" y="213" width="23" height="2" fill="#9c9cd8" />
<rect x="226" y="215" width="25" height="2" fill="#b0a8d8" />
<rect x="226" y="217" width="25" height="2" fill="#a8a4dc" />
<rect x="226" y="219" width="23" height="1" fill="#c8a0c0" />
<rect x="226" y="220" width="30" height="2" fill="#ee2020" />
<rect x="226" y="222" width="30" height="2" fill="#ee2020" />
<rect x="226" y="224" width="30" height="3" fill="#ee2020" />
<rect x="226" y="227" width="30" height="1" fill="#ee2020" />
<rect x="226" y="228" width="26" height="2" fill="#e8a0a0" />
<rect x="226" y="230" width="23" height="2" fill="#e8a8a8" />
<rect x="226" y="232" width="24" height="3" fill="#e89a9a" />
<rect x="226" y="235" width="26" height="3" fill="#e49090" />
<rect x="226" y="238" width="32" height="2" fill="#a8a4dc" />
<rect x="226" y="240" width="30" height="3" fill="#a8a4dc" />
<rect x="226" y="243" width="34" height="3" fill="#a8a4dc" />
<rect x="226" y="246" width="24" height="2" fill="#eaa4a4" />
<rect x="226" y="248" width="22" height="2" fill="#e8a8a8" />
<rect x="226" y="250" width="24" height="2" fill="#dc9090" />
<rect x="226" y="252" width="24" height="2" fill="#e89a9a" />
<rect x="226" y="254" width="24" height="2" fill="#eaa4a4" />
<rect x="226" y="256" width="33" height="3" fill="#e8a8a8" />
<rect x="226" y="259" width="33" height="2" fill="#e8a8a8" />
<rect x="226" y="261" width="32" height="2" fill="#dc9090" />
<rect x="226" y="263" width="33" height="1" fill="#e89a9a" />
<rect x="226" y="264" width="20" height="3" fill="#a8a4dc" />
<rect x="226" y="267" width="20" height="1" fill="#a0a8dc" />
<rect x="226" y="268" width="33" height="2" fill="#e49090" />
<rect x="226" y="270" width="30" height="3" fill="#e8a8a8" />
<rect x="226" y="273" width="32" height="1" fill="#e49090" />
<rect x="226" y="274" width="26" height="2" fill="#c8a0c0" />
<rect x="226" y="276" width="26" height="2" fill="#b0a8d8" />
<rect x="226" y="278" width="24" height="3" fill="#eaa4a4" />
<rect x="226" y="281" width="25" height="1" fill="#eaa4a4" />
<rect x="226" y="282" width="22" height="2" fill="#dc9090" />
<rect x="226" y="284" width="18" height="3" fill="#eaa4a4" />
<rect x="226" y="287" width="21" height="1" fill="#e8a0a0" />
<rect x="226" y="288" width="15" height="2" fill="#dc9090" />
<rect x="226" y="290" width="16" height="2" fill="#dc9090" />
<rect x="226" y="292" width="18" height="2" fill="#eaa4a4" />
<rect x="226" y="294" width="17" height="2" fill="#e89a9a" />
<rect x="226" y="296" width="30" height="3" fill="#eaa4a4" />
<rect x="226" y="299" width="34" height="1" fill="#e49090" />
<rect x="226" y="300" width="19" height="2" fill="#eaa4a4" />
<rect x="226" y="302" width="18" height="2" fill="#e8a8a8" />
<rect x="226" y="304" width="19" height="3" fill="#e49090" />
<rect x="226" y="307" width="22" height="2" fill="#e8a8a8" />
<rect x="226" y="309" width="21" height="1" fill="#e89a9a" />
<rect x="226" y="310" width="30" height="2" fill="#e49090" />
<rect x="226" y="312" width="32" height="2" fill="#e89a9a" />
<rect x="226" y="314" width="30" height="2" fill="#e8a0a0" />
<rect x="226" y="316" width="25" height="2" fill="#e49090" />
<rect x="226" y="318" width="26" height="3" fill="#e49090" />
<rect x="226" y="321" width="28" height="3" fill="#eaa4a4" />
<rect x="226" y="324" width="26" height="2" fill="#dc9090" />
<rect x="226" y="326" width="33" height="2" fill="#dc9090" />
<rect x="226" y="328" width="34" height="2" fill="#eaa4a4" />
<rect x="226" y="330" width="20" height="2" fill="#e8a0a0" />
<rect x="226" y="332" width="20" height="2" fill="#e8a8a8" />
<rect x="226" y="334" width="20" height="2" fill="#e8a8a8" />
<rect x="226" y="336" width="27" height="2" fill="#b0a8d8" />
<rect x="226" y="338" width="28" height="2" fill="#c8a0c0" />
<rect x="226" y="340" width="30.0" height="3" fill="#e8a0a0" />
<rect x="226" y="343" width="27.0" height="2" fill="#e8a0a0" />
<rect x="226" y="345" width="30.0" height="2" fill="#e8a8a8" />
<rect x="226" y="347" width="26.0" height="1" fill="#dc9090" />
<rect x="226" y="348" width="22" height="3" fill="#e89a9a" />
<rect x="226" y="351" width="24" height="2" fill="#eaa4a4" />
<rect x="226" y="353" width="22" height="1" fill="#e8a8a8" />
<rect x="226" y="354" width="23.4" height="2" fill="#e8a0a0" />
<rect x="226" y="356" width="20.4" height="2" fill="#e89a9a" />
<rect x="226" y="358" width="23.4" height="3" fill="#e8a0a0" />
<rect x="226" y="361" width="22.4" height="2" fill="#dc9090" />
<rect x="226" y="363" width="22.4" height="1" fill="#e49090" />
<rect x="226" y="364" width="18.4" height="2" fill="#eaa4a4" />
<rect x="226" y="366" width="17.4" height="2" fill="#dc9090" />
<rect x="226" y="368" width="18.4" height="2" fill="#e89a9a" />
<rect x="226" y="370" width="18.4" height="2" fill="#e8a0a0" />
<rect x="226" y="372" width="15.2" height="2" fill="#dc9090" />
<rect x="226" y="374" width="15.2" height="2" fill="#e8a0a0" />
<rect x="226" y="376" width="16.2" height="2" fill="#dc9090" />
<rect x="226" y="378" width="16.2" height="2" fill="#eaa4a4" />
<rect x="226" y="380" width="8" height="3" fill="#e8a0a0" />
<rect x="226" y="383" width="9" height="2" fill="#eaa4a4" />
<rect x="226" y="385" width="10" height="2" fill="#a0a8dc" />
<rect x="226" y="387" width="8" height="2" fill="#c8a0c0" />
<rect x="226" y="389" width="11" height="1" fill="#c8a0c0" />
<rect x="226" y="390" width="8" height="2" fill="#dc9090" />
<rect x="226" y="392" width="6" height="2" fill="#e89a9a" />
<rect x="226" y="394" width="10" height="1" fill="#e8a0a0" />
<rect x="226" y="395" width="12" height="3" fill="#e89a9a" />
<rect x="226" y="398" width="12" height="2" fill="#e49090" />
<rect x="226" y="400" width="10" height="3" fill="#eaa4a4" />
<rect x="226" y="403" width="10" height="2" fill="#e8a0a0" />
<rect x="226" y="405" width="10" height="2" fill="#dc9090" />
<rect x="226" y="407" width="12" height="2" fill="#a8a4dc" />
<rect x="226" y="409" width="13" height="2" fill="#a0a8dc" />
<rect x="226" y="411" width="8" height="3" fill="#dc9090" />
<rect x="226" y="414" width="8" height="2" fill="#e8a8a8" />
<rect x="226" y="416" width="7" height="1" fill="#eaa4a4" />
<rect x="226" y="417" width="10" height="2" fill="#dc9090" />
<rect x="226" y="419" width="9" height="2" fill="#e89a9a" />
<rect x="226" y="421" width="9" height="2" fill="#e89a9a" />
<rect x="226" y="423" width="10" height="2" fill="#e49090" />
<rect x="226" y="425" width="11" height="2" fill="#9c9cd8" />
<rect x="226" y="427" width="9" height="3" fill="#b0a8d8" />
<rect x="226" y="430" width="10" height="3" fill="#9c9cd8" />
<rect x="226" y="433" width="9" height="3" fill="#e8a0a0" />
<rect x="226" y="436" width="10" height="2" fill="#e49090" />
<rect x="226" y="438" width="11" height="2" fill="#e8a0a0" />
<rect x="226" y="440" width="9" height="1" fill="#e8a8a8" />
<rect x="226" y="441" width="10" height="3" fill="#ee2020" />
<rect x="226" y="444" width="10" height="1" fill="#ee2020" />
<rect x="226" y="445" width="9" height="2" fill="#dc9090" />
<rect x="226" y="447" width="10" height="2" fill="#e8a8a8" />
<rect x="226" y="449" width="10" height="2" fill="#ee2020" />
<rect x="226" y="451" width="10" height="3" fill="#ee2020" />
<rect x="226" y="454" width="10" height="1" fill="#ee2020" />
<rect x="226" y="455" width="9" height="2" fill="#e89a9a" />
<rect x="226" y="457" width="9" height="2" fill="#e89a9a" />
<rect x="226" y="459" width="14" height="2" fill="#e89a9a" />
<rect x="226" y="461" width="10" height="3" fill="#e8a0a0" />
<rect x="226" y="464" width="12" height="3" fill="#dc9090" />
<rect x="226" y="467" width="9" height="2" fill="#dc9090" />
<rect x="226" y="469" width="10" height="2" fill="#e8a8a8" />
<rect x="226" y="471" width="6" height="2" fill="#e49090" />
<rect x="226" y="473" width="8" height="2" fill="#eaa4a4" />
<rect x="226" y="475" width="6" height="1" fill="#e49090" />
<rect x="226" y="476" width="4" height="3" fill="#dc9090" />
<rect x="226" y="479" width="4" height="3" fill="#e8a8a8" />
<rect x="226" y="482" width="6" height="2" fill="#dc9090" />
<rect x="226" y="484" width="4" height="2" fill="#e49090" />
<rect x="226" y="486" width="8" height="2" fill="#e8a8a8" />
<rect x="226" y="488" width="6" height="2" fill="#e8a8a8" />
<rect x="226" y="490" width="10" height="3" fill="#e89a9a" />
<rect x="226" y="493" width="11" height="2" fill="#e49090" />
<rect x="226" y="495" width="8" height="2" fill="#dc9090" />
<rect x="226" y="497" width="11" height="3" fill="#e49090" />
<rect x="226" y="500" width="9" height="2" fill="#eaa4a4" />
<rect x="226" y="502" width="11" height="2" fill="#e49090" />
<rect x="226" y="504" width="8" height="2" fill="#eaa4a4" />
<rect x="226" y="506" width="12" height="2" fill="#eaa4a4" />
<rect x="226" y="508" width="10" height="2" fill="#eaa4a4" />
<rect x="226" y="510" width="6" height="2" fill="#e8a0a0" />
<rect x="226" y="512" width="9" height="1" fill="#e89a9a" />
<rect x="226" y="513" width="4" height="2" fill="#e89a9a" />
<rect x="226" y="515" width="3" height="2" fill="#e8a0a0" />
<rect x="226" y="517" width="5" height="1" fill="#e8a0a0" />
<rect x="226" y="518" width="5" height="2" fill="#e8a8a8" />
<rect x="226" y="520" width="4" height="2" fill="#e8a8a8" />
<rect x="226" y="522" width="4" height="2" fill="#c0c0d0" />
<rect x="226" y="524" width="4" height="2" fill="#c0c0d0" />
<rect x="226" y="526" width="3" height="2" fill="#c0c0d0" />
<rect x="226" y="528" width="5" height="2" fill="#dc9090" />
<rect x="226" y="530" width="4" height="3" fill="#e49090" />
<rect x="226" y="533" width="4" height="1" fill="#e49090" />
<rect x="226" y="534" width="5" height="3" fill="#c0c0d0" />
<rect x="226" y="537" width="4" height="2" fill="#c0c0d0" />
<rect x="226" y="539" width="4" height="1" fill="#c0c0d0" />
<rect x="226" y="540" width="3" height="2" fill="#c0c0d0" />
<rect x="226" y="542" width="4" height="2" fill="#c0c0d0" />
<rect x="226" y="544" width="5" height="1" fill="#c0c0d0" />
<rect x="226" y="545" width="6" height="2" fill="#e89a9a" />
<rect x="226" y="547" width="4" height="1" fill="#e89a9a" />
<rect x="226" y="548" width="3" height="2" fill="#c0c0d0" />
<rect x="226" y="550" width="5" height="2" fill="#c0c0d0" />
<rect x="226" y="552" width="4" height="2" fill="#c0c0d0" />
<rect x="226" y="554" width="3" height="2" fill="#e49090" />
<rect x="226" y="556" width="4" height="2" fill="#e8a0a0" />
<rect x="226" y="558" width="6" height="1" fill="#e8a0a0" />
<rect x="226" y="559" width="3" height="3" fill="#e8a8a8" />
<rect x="226" y="562" width="3" height="2" fill="#e8a8a8" />
<rect x="226" y="564" width="4" height="2" fill="#ee2020" />
<rect x="226" y="566" width="4" height="3" fill="#ee2020" />
<rect x="226" y="569" width="4" height="1" fill="#ee2020" />
<rect x="226" y="570" width="3" height="2" fill="#c0c0d0" />
<rect x="226" y="572" width="3" height="2" fill="#c0c0d0" />
<rect x="226" y="574" width="4" height="2" fill="#c0c0d0" />
<rect x="226" y="576" width="5" height="2" fill="#c0c0d0" />
<rect x="226" y="578" width="5" height="1" fill="#c0c0d0" />
<rect x="226" y="579" width="3" height="2" fill="#ee2020" />
<rect x="226" y="581" width="3" height="2" fill="#ee2020" />
<rect x="226" y="583" width="3" height="2" fill="#ee2020" />
<rect x="226" y="585" width="3" height="2" fill="#c0c0d0" />
<rect x="226" y="587" width="5" height="3" fill="#c0c0d0" />
<rect x="226" y="590" width="6" height="3" fill="#c0c0d0" />
<rect x="226" y="593" width="3" height="1" fill="#c0c0d0" />
<rect x="226" y="594" width="4" height="2" fill="#c0c0d0" />
<rect x="226" y="596" width="6" height="1" fill="#c0c0d0" />
<rect x="226" y="597" width="4" height="2" fill="#ee2020" />
<rect x="226" y="599" width="4" height="2" fill="#ee2020" />
<rect x="226" y="601" width="4" height="1" fill="#ee2020" />
<rect x="226" y="602" width="4" height="2" fill="#e8a8a8" />
<rect x="226" y="604" width="3" height="3" fill="#e49090" />
<rect x="243" y="323" width="15" height="9" fill="#b8b0e0" />
<text x="245" y="331" text-anchor="start" fill="#fff" font-size="9" font-weight="bold">VA</text>
<polyline fill="none" stroke="#0cf2fa" stroke-width="1.1" stroke-linejoin="round" points="81.5,336.0 86.0,320.0 90.0,252.5 95.0,249.0 100.0,250.0 106.5,255.0 112.5,277.5 118.5,292.5 122.5,290.0 127.5,240.0 131.0,190.0 134.0,148.0 139.0,172.5 143.0,167.5 149.0,202.5 156.0,145.0 162.5,165.0 170.0,150.0 176.0,146.0 182.5,150.0 190.0,167.5 194.0,176.5 200.0,165.0 207.5,150.0 212.5,155.0 218.5,125.0 223.5,106.0 226.5,105.0"/>
<polyline fill="none" stroke="#0cf2fa" stroke-width="1.1" stroke-linejoin="round" points="478.5,210.0 480.0,222.5 483.0,320.0 487.5,355.0 495.0,367.5 501.5,374.0 507.5,347.5 514.0,389.0 520.0,300.0 530.0,317.5 539.0,280.0 545.0,207.5 550.0,215.0 555.0,220.0 562.5,227.5 570.0,192.5 577.5,205.0 582.5,220.0"/>
<polyline fill="none" stroke="#0cf2fa" stroke-width="1.1" stroke-linejoin="round" points="619.5,124.0 622.0,100.0 625.0,124.0"/>
<polyline fill="none" stroke="#0cf2fa" stroke-width="1.1" stroke-linejoin="round" points="651.0,124.0 654.0,112.0 657.0,124.0"/>
<rect x="87" y="429.0" width="1" height="36.0" fill="#ff0000"/><rect x="86" y="429.0" width="3" height="30.0" fill="#ff0000"/>
<rect x="92" y="450.0" width="1" height="52.5" fill="#ff0000"/><rect x="91" y="455.0" width="3" height="5.0" fill="#ff0000"/>
<rect x="98" y="420.0" width="1" height="35.0" fill="#008000"/><rect x="97" y="427.5" width="3" height="10.0" fill="#008000"/>
<rect x="103" y="432.5" width="1" height="37.5" fill="#ff0000"/><rect x="102" y="434.0" width="3" height="21.0" fill="#ff0000"/>
<rect x="109" y="445.0" width="1" height="15.0" fill="#ff0000"/><rect x="108" y="450.0" width="3" height="6.0" fill="#ff0000"/>
<rect x="114" y="455.0" width="1" height="29.0" fill="#ff0000"/><rect x="113" y="459.0" width="3" height="13.5" fill="#ff0000"/>
<rect x="119" y="467.5" width="1" height="12.5" fill="#ff0000"/><rect x="118" y="470.0" width="3" height="5.0" fill="#ff0000"/>
<rect x="125" y="455.0" width="1" height="22.5" fill="#ff0000"/><rect x="124" y="470.0" width="3" height="4.0" fill="#ff0000"/>
<rect x="130" y="470.0" width="1" height="87.5" fill="#ff0000"/><rect x="129" y="472.5" width="3" height="82.5" fill="#ff0000"/>
<rect x="136" y="552.5" width="1" height="50.0" fill="#ff0000"/><rect x="135" y="552.5" width="3" height="32.5" fill="#ff0000"/>
<rect x="141" y="530.0" width="1" height="42.5" fill="#008000"/><rect x="140" y="532.5" width="3" height="40.0" fill="#008000"/>
<rect x="146" y="540.0" width="1" height="30.0" fill="#008000"/><rect x="145" y="545.0" width="3" height="20.0" fill="#008000"/>
<rect x="152" y="510.0" width="1" height="37.5" fill="#008000"/><rect x="151" y="530.0" width="3" height="15.0" fill="#008000"/>
<rect x="157" y="505.0" width="1" height="40.0" fill="#008000"/><rect x="156" y="520.0" width="3" height="22.5" fill="#008000"/>
<rect x="162" y="452.5" width="1" height="80.0" fill="#008000"/><rect x="161" y="457.5" width="3" height="62.5" fill="#008000"/>
<rect x="168" y="445.0" width="1" height="17.5" fill="#008000"/><rect x="167" y="447.5" width="3" height="12.5" fill="#008000"/>
<rect x="173" y="437.5" width="1" height="37.5" fill="#ff0000"/><rect x="172" y="445.0" width="3" height="30.0" fill="#ff0000"/>
<rect x="179" y="440.0" width="1" height="47.5" fill="#ff0000"/><rect x="178" y="455.0" width="3" height="30.0" fill="#ff0000"/>
<rect x="184" y="480.0" width="1" height="17.5" fill="#008000"/><rect x="183" y="480.0" width="3" height="10.0" fill="#008000"/>
<rect x="190" y="477.5" width="1" height="25.0" fill="#ff0000"/><rect x="189" y="480.0" width="3" height="9.0" fill="#ff0000"/>
<rect x="195" y="475.0" width="1" height="30.0" fill="#ff0000"/><rect x="194" y="487.5" width="3" height="2.5" fill="#ff0000"/>
<rect x="201" y="467.5" width="1" height="22.5" fill="#008000"/><rect x="200" y="470.0" width="3" height="17.5" fill="#008000"/>
<rect x="206" y="460.0" width="1" height="32.5" fill="#008000"/><rect x="205" y="467.5" width="3" height="17.5" fill="#008000"/>
<rect x="211" y="485.0" width="1" height="12.5" fill="#ff0000"/><rect x="210" y="485.0" width="3" height="10.0" fill="#ff0000"/>
<rect x="217" y="485.0" width="1" height="27.5" fill="#ff0000"/><rect x="216" y="487.5" width="3" height="12.5" fill="#ff0000"/>
<rect x="222" y="472.5" width="1" height="32.5" fill="#ff0000"/><rect x="221" y="475.0" width="3" height="20.0" fill="#ff0000"/>
<rect x="228" y="470.0" width="1" height="30.0" fill="#008000"/><rect x="227" y="480.0" width="3" height="15.0" fill="#008000"/>
<rect x="233" y="440.0" width="1" height="65.0" fill="#ff0000"/><rect x="232" y="450.0" width="3" height="40.0" fill="#ff0000"/>
<rect x="95" y="428" width="6" height="9" fill="#00ff00" />
<rect x="128" y="540" width="6" height="9" fill="#ff30d0" />
<rect x="144" y="550" width="6" height="9" fill="#00ff00" />
<rect x="133" y="588" width="6" height="9" fill="#00ff00" />
<rect x="160" y="550" width="3" height="5" fill="#b0b0b0" />
<rect x="244" y="375.0" width="1" height="60.0" fill="#008000"/><rect x="243" y="385.0" width="3" height="32.5" fill="#008000"/>
<rect x="250" y="365.0" width="1" height="55.0" fill="#008000"/><rect x="249" y="370.0" width="3" height="30.0" fill="#008000"/>
<rect x="255" y="330.0" width="1" height="75.0" fill="#008000"/><rect x="254" y="335.0" width="3" height="35.0" fill="#008000"/>
<rect x="483" y="154.4" width="1" height="38.9" fill="#ff0000"/><rect x="482" y="160.7" width="3" height="22.6" fill="#ff0000"/>
<rect x="488" y="166.9" width="1" height="61.6" fill="#008000"/><rect x="487" y="166.9" width="3" height="15.1" fill="#008000"/>
<rect x="494" y="178.2" width="1" height="30.2" fill="#ff0000"/><rect x="493" y="183.3" width="3" height="22.6" fill="#ff0000"/>
<rect x="499" y="174.5" width="1" height="38.9" fill="#008000"/><rect x="498" y="178.2" width="3" height="33.9" fill="#008000"/>
<rect x="505" y="173.2" width="1" height="15.1" fill="#ff0000"/><rect x="504" y="177.0" width="3" height="3.8" fill="#ff0000"/>
<rect x="510" y="134.3" width="1" height="44.0" fill="#008000"/><rect x="509" y="134.3" width="3" height="44.0" fill="#008000"/>
<rect x="516" y="136.8" width="1" height="21.4" fill="#008000"/><rect x="515" y="140.6" width="3" height="10.1" fill="#008000"/>
<rect x="521" y="129.2" width="1" height="26.4" fill="#ff0000"/><rect x="520" y="143.1" width="3" height="10.1" fill="#ff0000"/>
<rect x="527" y="140.6" width="1" height="32.7" fill="#008000"/><rect x="526" y="143.1" width="3" height="17.6" fill="#008000"/>
<rect x="532" y="136.8" width="1" height="13.8" fill="#ff0000"/><rect x="531" y="136.8" width="3" height="12.6" fill="#ff0000"/>
<rect x="537" y="104.1" width="1" height="37.7" fill="#008000"/><rect x="536" y="114.2" width="3" height="27.6" fill="#008000"/>
<rect x="543" y="109.1" width="1" height="38.9" fill="#ff0000"/><rect x="542" y="115.4" width="3" height="13.8" fill="#ff0000"/>
<rect x="548" y="129.2" width="1" height="76.6" fill="#ff0000"/><rect x="547" y="130.5" width="3" height="57.8" fill="#ff0000"/>
<rect x="554" y="179.5" width="1" height="99.2" fill="#ff0000"/><rect x="553" y="180.8" width="3" height="93.2" fill="#ff0000"/>
<rect x="559" y="225.0" width="1" height="60.0" fill="#ff0000"/><rect x="558" y="250.0" width="3" height="30.0" fill="#ff0000"/>
<rect x="565" y="215.0" width="1" height="55.0" fill="#008000"/><rect x="564" y="220.0" width="3" height="45.0" fill="#008000"/>
<rect x="570" y="222.5" width="1" height="57.5" fill="#ff0000"/><rect x="569" y="235.0" width="3" height="22.5" fill="#ff0000"/>
<rect x="576" y="250.0" width="1" height="30.0" fill="#ff0000"/><rect x="575" y="255.0" width="3" height="17.5" fill="#ff0000"/>
<rect x="624" y="100.0" width="1" height="24.0" fill="#008000"/><rect x="623" y="108.0" width="3" height="15.0" fill="#008000"/>
<rect x="630" y="110.0" width="1" height="14.0" fill="#ff0000"/><rect x="629" y="112.0" width="3" height="11.0" fill="#ff0000"/></svg><div class="a" style="left:4px;top:832px;width:1513px;height:16px;background:#f0f0f0"></div><div class="a" style="left:11px;top:835px;width:0;height:0;border:4px solid transparent;border-right:5px solid #404040;border-left:0"></div><div class="a" style="left:1505px;top:835px;width:0;height:0;border:4px solid transparent;border-left:5px solid #404040;border-right:0"></div><div class="a" style="left:1471px;top:833px;width:19px;height:14px;border:1px solid #989898;border-radius:2px;background:linear-gradient(#f4f4f4,#dcdcdc)"><div class="a" style="left:5px;top:3px;width:7px;height:7px;border-left:1px solid #555;border-right:1px solid #555"><div class="a" style="left:2px;top:0;width:1px;height:7px;background:#555"></div></div></div>
<div class="a" style="left:1526px;top:0;width:266px;height:107px;background:#dbe5f2;border-bottom:1px solid #8e9cb2;overflow:hidden"><div class="tb"></div><div class="tt" style="left:-1px">рса Si</div><div class="a" style="left:0;top:31px;width:266px;height:68px;background:#fff"></div><div class="a" style="left:0;top:31px;width:266px;height:19px;background:linear-gradient(#fff,#f2f2f4);border-bottom:1px solid #e4e4e8"></div><div class="a" style="left:0;top:71px;width:266px;height:20px;background:#fdf1d0"></div><div class="a" style="left:64px;top:31px;width:1px;height:68px;background:#e6e6ea"></div><div class="a nw" style="left:-30px;top:32px;width:94px;font-weight:bold;font-size:14.5px;text-align:left;padding-left:25px">ГО продаж</div><div class="a nw" style="left:-30px;top:52px;width:94px;font-weight:bold;font-size:14.5px;text-align:left;padding-left:32px">3 564,00</div><div class="a nw" style="left:-30px;top:72px;width:94px;font-weight:bold;font-size:14.5px;text-align:left;padding-left:32px">3 424,47</div><div class="a" style="left:146px;top:31px;width:1px;height:68px;background:#e6e6ea"></div><div class="a nw" style="left:65px;top:32px;width:81px;font-weight:bold;font-size:14.5px;text-align:left;padding-left:1px">Цена после</div><div class="a nw" style="left:65px;top:52px;width:81px;font-weight:bold;font-size:14.5px;text-align:right;padding-right:6px">59 436</div><div class="a nw" style="left:65px;top:72px;width:81px;font-weight:bold;font-size:14.5px;text-align:right;padding-right:6px">51,75</div><div class="a" style="left:207px;top:31px;width:1px;height:68px;background:#e6e6ea"></div><div class="a nw" style="left:147px;top:32px;width:60px;font-weight:bold;font-size:14.5px;text-align:left;padding-left:1px">% измен</div><div class="a nw" style="left:147px;top:52px;width:60px;font-weight:bold;font-size:14.5px;text-align:right;padding-right:6px">0,07</div><div class="a nw" style="left:147px;top:72px;width:60px;font-weight:bold;font-size:14.5px;text-align:right;padding-right:6px">0,17</div><div class="a" style="left:277px;top:31px;width:1px;height:68px;background:#e6e6ea"></div><div class="a nw" style="left:208px;top:32px;width:69px;font-weight:bold;font-size:14.5px;text-align:left;padding-left:1px">Кол-во с</div><div class="a nw" style="left:208px;top:52px;width:69px;font-weight:bold;font-size:14.5px;text-align:left;padding-left:9px">3 389 95</div><div class="a nw" style="left:208px;top:72px;width:69px;font-weight:bold;font-size:14.5px;text-align:left;padding-left:23px">645 20</div></div>
<div class="a" style="left:1791px;top:0;width:1147px;height:856px;background:#dbe5f2;border-left:1px solid #8e9cb2"><div class="tb"></div><svg style="left:11px;top:11px" width="19" height="16" viewBox="0 0 19 16"><rect x=".5" y=".5" width="18" height="15" fill="#fff" stroke="#7a8aa0"/><rect x="1" y="1" width="17" height="2.500" fill="#4a90e0"/><path d="M2 7.500l3-1.500 2 2 2-2.500 2 2h5" stroke="#e03030" fill="none" stroke-width="1.200"/><path d="M3 14v-2M6 14v-3M9 14v-2M12 14v-3M15 14v-2" stroke="#3080d0" stroke-width="1.400"/></svg><div class="tt" style="left:35px">Si-9.17 График цены и объёма #4 - [1 минута]</div><div class="lk" style="left:975px"><svg width="42" height="20" viewBox="0 0 42 20"><g fill="none" stroke="#1a1a1a"><g transform="rotate(-45 21 10)"><rect x="13" y="8" width="6.500" height="4" rx="2" stroke-width="1.500"/><rect x="22.500" y="8" width="6.500" height="4" rx="2" stroke-width="1.500"/></g><path d="M17.500 4.500l1 1.800M20.500 3.500v2M15 7l1.800 1M24.500 15.500l-1-1.800M21.500 16.500v-2M27 13l-1.800-1" stroke-width="1"/></g></svg></div><div class="wb" style="left:1022px"><div class="a" style="left:12px;top:11px;width:13px;height:5px;border:1px solid #6a7486;background:#fff;border-radius:1px"></div></div><div class="wb" style="left:1063px"><div class="a" style="left:12px;top:4px;width:13px;height:11px;border:1px solid #6a7486;background:#fff;border-radius:1px"></div><div class="a" style="left:16px;top:8px;width:5px;height:4px;border:1px solid #6a7486;background:#cfdbea"></div></div><div class="wb" style="left:1104px"><svg width="36" height="19" viewBox="0 0 36 19"><path d="M13 5l10 9M23 5l-10 9" stroke="#6a7486" stroke-width="4.600" stroke-linecap="round"/><path d="M13 5l10 9M23 5l-10 9" stroke="#fff" stroke-width="2.600" stroke-linecap="round"/></svg></div></div><svg class="ax" style="left:0;top:0" width="2938" height="856"><rect x="1800" y="31" width="1137" height="802" fill="#000" />
<line x1="1919.5" x2="1919.5" y1="42" y2="681" stroke="#a6a6a6" stroke-width="1" stroke-dasharray="3 3"/>
<line x1="1919.5" x2="1919.5" y1="701" y2="783" stroke="#a6a6a6" stroke-width="1" stroke-dasharray="3 3"/>
<line x1="1975.5" x2="1975.5" y1="42" y2="681" stroke="#a6a6a6" stroke-width="1" stroke-dasharray="3 3"/>
<line x1="1975.5" x2="1975.5" y1="701" y2="783" stroke="#a6a6a6" stroke-width="1" stroke-dasharray="3 3"/>
<line x1="2031.5" x2="2031.5" y1="42" y2="681" stroke="#a6a6a6" stroke-width="1" stroke-dasharray="3 3"/>
<line x1="2031.5" x2="2031.5" y1="701" y2="783" stroke="#a6a6a6" stroke-width="1" stroke-dasharray="3 3"/>
<line x1="2087.5" x2="2087.5" y1="42" y2="681" stroke="#a6a6a6" stroke-width="1" stroke-dasharray="3 3"/>
<line x1="2087.5" x2="2087.5" y1="701" y2="783" stroke="#a6a6a6" stroke-width="1" stroke-dasharray="3 3"/>
<line x1="2143.5" x2="2143.5" y1="42" y2="681" stroke="#a6a6a6" stroke-width="1" stroke-dasharray="3 3"/>
<line x1="2143.5" x2="2143.5" y1="701" y2="783" stroke="#a6a6a6" stroke-width="1" stroke-dasharray="3 3"/>
<line x1="2199.5" x2="2199.5" y1="42" y2="681" stroke="#a6a6a6" stroke-width="1" stroke-dasharray="3 3"/>
<line x1="2199.5" x2="2199.5" y1="701" y2="783" stroke="#a6a6a6" stroke-width="1" stroke-dasharray="3 3"/>
<line x1="2254.5" x2="2254.5" y1="42" y2="681" stroke="#a6a6a6" stroke-width="1" stroke-dasharray="3 3"/>
<line x1="2254.5" x2="2254.5" y1="701" y2="783" stroke="#a6a6a6" stroke-width="1" stroke-dasharray="3 3"/>
<line x1="2310.5" x2="2310.5" y1="42" y2="681" stroke="#a6a6a6" stroke-width="1" stroke-dasharray="3 3"/>
<line x1="2310.5" x2="2310.5" y1="701" y2="783" stroke="#a6a6a6" stroke-width="1" stroke-dasharray="3 3"/>
<line x1="2366.5" x2="2366.5" y1="42" y2="681" stroke="#a6a6a6" stroke-width="1" stroke-dasharray="3 3"/>
<line x1="2366.5" x2="2366.5" y1="701" y2="783" stroke="#a6a6a6" stroke-width="1" stroke-dasharray="3 3"/>
<line x1="2422.5" x2="2422.5" y1="42" y2="681" stroke="#a6a6a6" stroke-width="1" stroke-dasharray="3 3"/>
<line x1="2422.5" x2="2422.5" y1="701" y2="783" stroke="#a6a6a6" stroke-width="1" stroke-dasharray="3 3"/>
<line x1="2450.5" x2="2450.5" y1="42" y2="681" stroke="#a6a6a6" stroke-width="1" stroke-dasharray="3 3"/>
<line x1="2450.5" x2="2450.5" y1="701" y2="783" stroke="#a6a6a6" stroke-width="1" stroke-dasharray="3 3"/>
<line x1="2506.5" x2="2506.5" y1="42" y2="681" stroke="#a6a6a6" stroke-width="1" stroke-dasharray="3 3"/>
<line x1="2506.5" x2="2506.5" y1="701" y2="783" stroke="#a6a6a6" stroke-width="1" stroke-dasharray="3 3"/>
<line x1="2562.5" x2="2562.5" y1="42" y2="681" stroke="#a6a6a6" stroke-width="1" stroke-dasharray="3 3"/>
<line x1="2562.5" x2="2562.5" y1="701" y2="783" stroke="#a6a6a6" stroke-width="1" stroke-dasharray="3 3"/>
<line x1="2618.5" x2="2618.5" y1="42" y2="681" stroke="#a6a6a6" stroke-width="1" stroke-dasharray="3 3"/>
<line x1="2618.5" x2="2618.5" y1="701" y2="783" stroke="#a6a6a6" stroke-width="1" stroke-dasharray="3 3"/>
<line x1="2673.5" x2="2673.5" y1="42" y2="681" stroke="#a6a6a6" stroke-width="1" stroke-dasharray="3 3"/>
<line x1="2673.5" x2="2673.5" y1="701" y2="783" stroke="#a6a6a6" stroke-width="1" stroke-dasharray="3 3"/>
<line x1="1878" x2="2862" y1="49.5" y2="49.5" stroke="#a6a6a6" stroke-width="1" stroke-dasharray="3 3"/>
<line x1="1878" x2="2862" y1="73.5" y2="73.5" stroke="#a6a6a6" stroke-width="1" stroke-dasharray="3 3"/>
<line x1="1878" x2="2862" y1="97.5" y2="97.5" stroke="#a6a6a6" stroke-width="1" stroke-dasharray="3 3"/>
<line x1="1878" x2="2862" y1="121.5" y2="121.5" stroke="#a6a6a6" stroke-width="1" stroke-dasharray="3 3"/>
<line x1="1878" x2="2862" y1="145.5" y2="145.5" stroke="#a6a6a6" stroke-width="1" stroke-dasharray="3 3"/>
<line x1="1878" x2="2862" y1="169.5" y2="169.5" stroke="#a6a6a6" stroke-width="1" stroke-dasharray="3 3"/>
<line x1="1878" x2="2862" y1="193.5" y2="193.5" stroke="#a6a6a6" stroke-width="1" stroke-dasharray="3 3"/>
<line x1="1878" x2="2862" y1="217.5" y2="217.5" stroke="#a6a6a6" stroke-width="1" stroke-dasharray="3 3"/>
<line x1="1878" x2="2862" y1="241.5" y2="241.5" stroke="#a6a6a6" stroke-width="1" stroke-dasharray="3 3"/>
<line x1="1878" x2="2862" y1="265.5" y2="265.5" stroke="#a6a6a6" stroke-width="1" stroke-dasharray="3 3"/>
<line x1="1878" x2="2862" y1="289.5" y2="289.5" stroke="#a6a6a6" stroke-width="1" stroke-dasharray="3 3"/>
<line x1="1878" x2="2862" y1="313.5" y2="313.5" stroke="#a6a6a6" stroke-width="1" stroke-dasharray="3 3"/>
<line x1="1878" x2="2862" y1="337.5" y2="337.5" stroke="#a6a6a6" stroke-width="1" stroke-dasharray="3 3"/>
<line x1="1878" x2="2862" y1="361.5" y2="361.5" stroke="#a6a6a6" stroke-width="1" stroke-dasharray="3 3"/>
<line x1="1878" x2="2862" y1="385.5" y2="385.5" stroke="#a6a6a6" stroke-width="1" stroke-dasharray="3 3"/>
<line x1="1878" x2="2862" y1="409.5" y2="409.5" stroke="#a6a6a6" stroke-width="1" stroke-dasharray="3 3"/>
<line x1="1878" x2="2862" y1="433.5" y2="433.5" stroke="#a6a6a6" stroke-width="1" stroke-dasharray="3 3"/>
<line x1="1878" x2="2862" y1="457.5" y2="457.5" stroke="#a6a6a6" stroke-width="1" stroke-dasharray="3 3"/>
<line x1="1878" x2="2862" y1="481.5" y2="481.5" stroke="#a6a6a6" stroke-width="1" stroke-dasharray="3 3"/>
<line x1="1878" x2="2862" y1="505.5" y2="505.5" stroke="#a6a6a6" stroke-width="1" stroke-dasharray="3 3"/>
<line x1="1878" x2="2862" y1="529.5" y2="529.5" stroke="#a6a6a6" stroke-width="1" stroke-dasharray="3 3"/>
<line x1="1878" x2="2862" y1="553.5" y2="553.5" stroke="#a6a6a6" stroke-width="1" stroke-dasharray="3 3"/>
<line x1="1878" x2="2862" y1="577.5" y2="577.5" stroke="#a6a6a6" stroke-width="1" stroke-dasharray="3 3"/>
<line x1="1878" x2="2862" y1="601.5" y2="601.5" stroke="#a6a6a6" stroke-width="1" stroke-dasharray="3 3"/>
<line x1="1878" x2="2862" y1="625.5" y2="625.5" stroke="#a6a6a6" stroke-width="1" stroke-dasharray="3 3"/>
<line x1="1878" x2="2862" y1="649.5" y2="649.5" stroke="#a6a6a6" stroke-width="1" stroke-dasharray="3 3"/>
<line x1="1878" x2="2862" y1="673.5" y2="673.5" stroke="#a6a6a6" stroke-width="1" stroke-dasharray="3 3"/>
<line x1="1878" x2="2862" y1="44.5" y2="44.5" stroke="#a6a6a6" stroke-width="1" stroke-dasharray="3 3"/>
<line x1="1878" x2="2862" y1="62.5" y2="62.5" stroke="#a6a6a6" stroke-width="1" stroke-dasharray="3 3"/>
<line x1="1878" x2="2862" y1="79.5" y2="79.5" stroke="#a6a6a6" stroke-width="1" stroke-dasharray="3 3"/>
<line x1="1878" x2="2862" y1="96.5" y2="96.5" stroke="#a6a6a6" stroke-width="1" stroke-dasharray="3 3"/>
<line x1="1878" x2="2862" y1="113.5" y2="113.5" stroke="#a6a6a6" stroke-width="1" stroke-dasharray="3 3"/>
<line x1="1878" x2="2862" y1="130.5" y2="130.5" stroke="#a6a6a6" stroke-width="1" stroke-dasharray="3 3"/>
<line x1="1878" x2="2862" y1="148.5" y2="148.5" stroke="#a6a6a6" stroke-width="1" stroke-dasharray="3 3"/>
<line x1="1878" x2="2862" y1="165.5" y2="165.5" stroke="#a6a6a6" stroke-width="1" stroke-dasharray="3 3"/>
<line x1="1878" x2="2862" y1="182.5" y2="182.5" stroke="#a6a6a6" stroke-width="1" stroke-dasharray="3 3"/>
<line x1="1878" x2="2862" y1="199.5" y2="199.5" stroke="#a6a6a6" stroke-width="1" stroke-dasharray="3 3"/>
<line x1="1878" x2="2862" y1="217.5" y2="217.5" stroke="#a6a6a6" stroke-width="1" stroke-dasharray="3 3"/>
<line x1="1878" x2="2862" y1="234.5" y2="234.5" stroke="#a6a6a6" stroke-width="1" stroke-dasharray="3 3"/>
<line x1="1878" x2="2862" y1="251.5" y2="251.5" stroke="#a6a6a6" stroke-width="1" stroke-dasharray="3 3"/>
<line x1="1878" x2="2862" y1="268.5" y2="268.5" stroke="#a6a6a6" stroke-width="1" stroke-dasharray="3 3"/>
<line x1="1878" x2="2862" y1="285.5" y2="285.5" stroke="#a6a6a6" stroke-width="1" stroke-dasharray="3 3"/>
<line x1="1878" x2="2862" y1="303.5" y2="303.5" stroke="#a6a6a6" stroke-width="1" stroke-dasharray="3 3"/>
<line x1="1878" x2="2862" y1="320.5" y2="320.5" stroke="#a6a6a6" stroke-width="1" stroke-dasharray="3 3"/>
<line x1="1878" x2="2862" y1="337.5" y2="337.5" stroke="#a6a6a6" stroke-width="1" stroke-dasharray="3 3"/>
<line x1="1878" x2="2862" y1="354.5" y2="354.5" stroke="#a6a6a6" stroke-width="1" stroke-dasharray="3 3"/>
<line x1="1878" x2="2862" y1="372.5" y2="372.5" stroke="#a6a6a6" stroke-width="1" stroke-dasharray="3 3"/>
<line x1="1878" x2="2862" y1="389.5" y2="389.5" stroke="#a6a6a6" stroke-width="1" stroke-dasharray="3 3"/>
<line x1="1878" x2="2862" y1="406.5" y2="406.5" stroke="#a6a6a6" stroke-width="1" stroke-dasharray="3 3"/>
<line x1="1878" x2="2862" y1="423.5" y2="423.5" stroke="#a6a6a6" stroke-width="1" stroke-dasharray="3 3"/>
<line x1="1878" x2="2862" y1="440.5" y2="440.5" stroke="#a6a6a6" stroke-width="1" stroke-dasharray="3 3"/>
<line x1="1878" x2="2862" y1="458.5" y2="458.5" stroke="#a6a6a6" stroke-width="1" stroke-dasharray="3 3"/>
<line x1="1878" x2="2862" y1="475.5" y2="475.5" stroke="#a6a6a6" stroke-width="1" stroke-dasharray="3 3"/>
<line x1="1878" x2="2862" y1="492.5" y2="492.5" stroke="#a6a6a6" stroke-width="1" stroke-dasharray="3 3"/>
<line x1="1878" x2="2862" y1="509.5" y2="509.5" stroke="#a6a6a6" stroke-width="1" stroke-dasharray="3 3"/>
<line x1="1878" x2="2862" y1="527.5" y2="527.5" stroke="#a6a6a6" stroke-width="1" stroke-dasharray="3 3"/>
<line x1="1878" x2="2862" y1="544.5" y2="544.5" stroke="#a6a6a6" stroke-width="1" stroke-dasharray="3 3"/>
<line x1="1878" x2="2862" y1="561.5" y2="561.5" stroke="#a6a6a6" stroke-width="1" stroke-dasharray="3 3"/>
<line x1="1878" x2="2862" y1="578.5" y2="578.5" stroke="#a6a6a6" stroke-width="1" stroke-dasharray="3 3"/>
<line x1="1878" x2="2862" y1="595.5" y2="595.5" stroke="#a6a6a6" stroke-width="1" stroke-dasharray="3 3"/>
<line x1="1878" x2="2862" y1="613.5" y2="613.5" stroke="#a6a6a6" stroke-width="1" stroke-dasharray="3 3"/>
<line x1="1878" x2="2862" y1="630.5" y2="630.5" stroke="#a6a6a6" stroke-width="1" stroke-dasharray="3 3"/>
<line x1="1878" x2="2862" y1="647.5" y2="647.5" stroke="#a6a6a6" stroke-width="1" stroke-dasharray="3 3"/>
<line x1="1878" x2="2862" y1="664.5" y2="664.5" stroke="#a6a6a6" stroke-width="1" stroke-dasharray="3 3"/>
<line x1="1878" x2="2862" y1="735.5" y2="735.5" stroke="#a6a6a6" stroke-width="1" stroke-dasharray="3 3"/>
<line x1="1878" x2="2862" y1="775.5" y2="775.5" stroke="#a6a6a6" stroke-width="1" stroke-dasharray="3 3"/>
<line x1="1877.5" y1="179.5" x2="2858.5" y2="179.5" stroke="#1e78e6" stroke-width="1"/>
<rect x="1877.5" y="39.5" width="985.0" height="642.0" fill="none" stroke="#c8c8c8"/>
<rect x="1877.5" y="700.5" width="985.0" height="83.0" fill="none" stroke="#c8c8c8"/>
<line x1="1877.5" y1="792.5" x2="2862.5" y2="792.5" stroke="#c8c8c8" stroke-width="1"/>
<line x1="1877.5" y1="811.5" x2="2862.5" y2="811.5" stroke="#c8c8c8" stroke-width="1"/>
<line x1="1877.5" y1="830.5" x2="2862.5" y2="830.5" stroke="#c8c8c8" stroke-width="1"/>
<line x1="1877.5" y1="792.5" x2="1877.5" y2="830.5" stroke="#c8c8c8" stroke-width="1"/>
<line x1="1919.5" y1="781" x2="1919.5" y2="783.5" stroke="#c8c8c8" stroke-width="1"/>
<line x1="1975.5" y1="781" x2="1975.5" y2="783.5" stroke="#c8c8c8" stroke-width="1"/>
<line x1="2031.5" y1="781" x2="2031.5" y2="783.5" stroke="#c8c8c8" stroke-width="1"/>
<line x1="2087.5" y1="781" x2="2087.5" y2="783.5" stroke="#c8c8c8" stroke-width="1"/>
<line x1="2143.5" y1="781" x2="2143.5" y2="783.5" stroke="#c8c8c8" stroke-width="1"/>
<line x1="2199.5" y1="781" x2="2199.5" y2="783.5" stroke="#c8c8c8" stroke-width="1"/>
<line x1="2254.5" y1="781" x2="2254.5" y2="783.5" stroke="#c8c8c8" stroke-width="1"/>
<line x1="2310.5" y1="781" x2="2310.5" y2="783.5" stroke="#c8c8c8" stroke-width="1"/>
<line x1="2366.5" y1="781" x2="2366.5" y2="783.5" stroke="#c8c8c8" stroke-width="1"/>
<line x1="2422.5" y1="781" x2="2422.5" y2="783.5" stroke="#c8c8c8" stroke-width="1"/>
<line x1="2450.5" y1="781" x2="2450.5" y2="783.5" stroke="#c8c8c8" stroke-width="1"/>
<line x1="2506.5" y1="781" x2="2506.5" y2="783.5" stroke="#c8c8c8" stroke-width="1"/>
<line x1="2562.5" y1="781" x2="2562.5" y2="783.5" stroke="#c8c8c8" stroke-width="1"/>
<line x1="2618.5" y1="781" x2="2618.5" y2="783.5" stroke="#c8c8c8" stroke-width="1"/>
<line x1="2673.5" y1="781" x2="2673.5" y2="783.5" stroke="#c8c8c8" stroke-width="1"/>
<rect x="1800" y="689" width="1138" height="3" fill="#f4f4f4" />
<text x="1868.5" y="54" text-anchor="end" fill="#fff" font-size="14" >3 412 000</text>
<line x1="1871.5" y1="49.5" x2="1877.5" y2="49.5" stroke="#c8c8c8" stroke-width="1"/>
<line x1="1874.5" y1="61.5" x2="1877.5" y2="61.5" stroke="#c8c8c8" stroke-width="1"/>
<text x="1868.5" y="78" text-anchor="end" fill="#fff" font-size="14" >3 411 000</text>
<line x1="1871.5" y1="73.5" x2="1877.5" y2="73.5" stroke="#c8c8c8" stroke-width="1"/>
<line x1="1874.5" y1="85.5" x2="1877.5" y2="85.5" stroke="#c8c8c8" stroke-width="1"/>
<text x="1868.5" y="102" text-anchor="end" fill="#fff" font-size="14" >3 410 000</text>
<line x1="1871.5" y1="97.5" x2="1877.5" y2="97.5" stroke="#c8c8c8" stroke-width="1"/>
<line x1="1874.5" y1="109.5" x2="1877.5" y2="109.5" stroke="#c8c8c8" stroke-width="1"/>
<text x="1868.5" y="126" text-anchor="end" fill="#fff" font-size="14" >3 409 000</text>
<line x1="1871.5" y1="121.5" x2="1877.5" y2="121.5" stroke="#c8c8c8" stroke-width="1"/>
<line x1="1874.5" y1="133.5" x2="1877.5" y2="133.5" stroke="#c8c8c8" stroke-width="1"/>
<text x="1868.5" y="150" text-anchor="end" fill="#fff" font-size="14" >3 408 000</text>
<line x1="1871.5" y1="145.5" x2="1877.5" y2="145.5" stroke="#c8c8c8" stroke-width="1"/>
<line x1="1874.5" y1="157.5" x2="1877.5" y2="157.5" stroke="#c8c8c8" stroke-width="1"/>
<text x="1868.5" y="174" text-anchor="end" fill="#fff" font-size="14" >3 407 000</text>
<line x1="1871.5" y1="169.5" x2="1877.5" y2="169.5" stroke="#c8c8c8" stroke-width="1"/>
<line x1="1874.5" y1="181.5" x2="1877.5" y2="181.5" stroke="#c8c8c8" stroke-width="1"/>
<text x="1868.5" y="198" text-anchor="end" fill="#fff" font-size="14" >3 406 000</text>
<line x1="1871.5" y1="193.5" x2="1877.5" y2="193.5" stroke="#c8c8c8" stroke-width="1"/>
<line x1="1874.5" y1="205.5" x2="1877.5" y2="205.5" stroke="#c8c8c8" stroke-width="1"/>
<text x="1868.5" y="222" text-anchor="end" fill="#fff" font-size="14" >3 405 000</text>
<line x1="1871.5" y1="217.5" x2="1877.5" y2="217.5" stroke="#c8c8c8" stroke-width="1"/>
<line x1="1874.5" y1="229.5" x2="1877.5" y2="229.5" stroke="#c8c8c8" stroke-width="1"/>
<text x="1868.5" y="246" text-anchor="end" fill="#fff" font-size="14" >3 404 000</text>
<line x1="1871.5" y1="241.5" x2="1877.5" y2="241.5" stroke="#c8c8c8" stroke-width="1"/>
<line x1="1874.5" y1="253.5" x2="1877.5" y2="253.5" stroke="#c8c8c8" stroke-width="1"/>
<text x="1868.5" y="270" text-anchor="end" fill="#fff" font-size="14" >3 403 000</text>
<line x1="1871.5" y1="265.5" x2="1877.5" y2="265.5" stroke="#c8c8c8" stroke-width="1"/>
<line x1="1874.5" y1="277.5" x2="1877.5" y2="277.5" stroke="#c8c8c8" stroke-width="1"/>
<text x="1868.5" y="294" text-anchor="end" fill="#fff" font-size="14" >3 402 000</text>
<line x1="1871.5" y1="289.5" x2="1877.5" y2="289.5" stroke="#c8c8c8" stroke-width="1"/>
<line x1="1874.5" y1="301.5" x2="1877.5" y2="301.5" stroke="#c8c8c8" stroke-width="1"/>
<text x="1868.5" y="318" text-anchor="end" fill="#fff" font-size="14" >3 401 000</text>
<line x1="1871.5" y1="313.5" x2="1877.5" y2="313.5" stroke="#c8c8c8" stroke-width="1"/>
<line x1="1874.5" y1="325.5" x2="1877.5" y2="325.5" stroke="#c8c8c8" stroke-width="1"/>
<text x="1868.5" y="342" text-anchor="end" fill="#fff" font-size="14" >3 400 000</text>
<line x1="1871.5" y1="337.5" x2="1877.5" y2="337.5" stroke="#c8c8c8" stroke-width="1"/>
<line x1="1874.5" y1="349.5" x2="1877.5" y2="349.5" stroke="#c8c8c8" stroke-width="1"/>
<text x="1868.5" y="366" text-anchor="end" fill="#fff" font-size="14" >3 399 000</text>
<line x1="1871.5" y1="361.5" x2="1877.5" y2="361.5" stroke="#c8c8c8" stroke-width="1"/>
<line x1="1874.5" y1="373.5" x2="1877.5" y2="373.5" stroke="#c8c8c8" stroke-width="1"/>
<text x="1868.5" y="390" text-anchor="end" fill="#fff" font-size="14" >3 398 000</text>
<line x1="1871.5" y1="385.5" x2="1877.5" y2="385.5" stroke="#c8c8c8" stroke-width="1"/>
<line x1="1874.5" y1="397.5" x2="1877.5" y2="397.5" stroke="#c8c8c8" stroke-width="1"/>
<text x="1868.5" y="414" text-anchor="end" fill="#fff" font-size="14" >3 397 000</text>
<line x1="1871.5" y1="409.5" x2="1877.5" y2="409.5" stroke="#c8c8c8" stroke-width="1"/>
<line x1="1874.5" y1="421.5" x2="1877.5" y2="421.5" stroke="#c8c8c8" stroke-width="1"/>
<text x="1868.5" y="438" text-anchor="end" fill="#fff" font-size="14" >3 396 000</text>
<line x1="1871.5" y1="433.5" x2="1877.5" y2="433.5" stroke="#c8c8c8" stroke-width="1"/>
<line x1="1874.5" y1="445.5" x2="1877.5" y2="445.5" stroke="#c8c8c8" stroke-width="1"/>
<text x="1868.5" y="462" text-anchor="end" fill="#fff" font-size="14" >3 395 000</text>
<line x1="1871.5" y1="457.5" x2="1877.5" y2="457.5" stroke="#c8c8c8" stroke-width="1"/>
<line x1="1874.5" y1="469.5" x2="1877.5" y2="469.5" stroke="#c8c8c8" stroke-width="1"/>
<text x="1868.5" y="486" text-anchor="end" fill="#fff" font-size="14" >3 394 000</text>
<line x1="1871.5" y1="481.5" x2="1877.5" y2="481.5" stroke="#c8c8c8" stroke-width="1"/>
<line x1="1874.5" y1="493.5" x2="1877.5" y2="493.5" stroke="#c8c8c8" stroke-width="1"/>
<text x="1868.5" y="510" text-anchor="end" fill="#fff" font-size="14" >3 393 000</text>
<line x1="1871.5" y1="505.5" x2="1877.5" y2="505.5" stroke="#c8c8c8" stroke-width="1"/>
<line x1="1874.5" y1="517.5" x2="1877.5" y2="517.5" stroke="#c8c8c8" stroke-width="1"/>
<text x="1868.5" y="534" text-anchor="end" fill="#fff" font-size="14" >3 392 000</text>
<line x1="1871.5" y1="529.5" x2="1877.5" y2="529.5" stroke="#c8c8c8" stroke-width="1"/>
<line x1="1874.5" y1="541.5" x2="1877.5" y2="541.5" stroke="#c8c8c8" stroke-width="1"/>
<text x="1868.5" y="558" text-anchor="end" fill="#fff" font-size="14" >3 391 000</text>
<line x1="1871.5" y1="553.5" x2="1877.5" y2="553.5" stroke="#c8c8c8" stroke-width="1"/>
<line x1="1874.5" y1="565.5" x2="1877.5" y2="565.5" stroke="#c8c8c8" stroke-width="1"/>
<text x="1868.5" y="582" text-anchor="end" fill="#fff" font-size="14" >3 390 000</text>
<line x1="1871.5" y1="577.5" x2="1877.5" y2="577.5" stroke="#c8c8c8" stroke-width="1"/>
<line x1="1874.5" y1="589.5" x2="1877.5" y2="589.5" stroke="#c8c8c8" stroke-width="1"/>
<text x="1868.5" y="606" text-anchor="end" fill="#fff" font-size="14" >3 389 000</text>
<line x1="1871.5" y1="601.5" x2="1877.5" y2="601.5" stroke="#c8c8c8" stroke-width="1"/>
<line x1="1874.5" y1="613.5" x2="1877.5" y2="613.5" stroke="#c8c8c8" stroke-width="1"/>
<text x="1868.5" y="630" text-anchor="end" fill="#fff" font-size="14" >3 388 000</text>
<line x1="1871.5" y1="625.5" x2="1877.5" y2="625.5" stroke="#c8c8c8" stroke-width="1"/>
<line x1="1874.5" y1="636.5" x2="1877.5" y2="636.5" stroke="#c8c8c8" stroke-width="1"/>
<text x="1868.5" y="654" text-anchor="end" fill="#fff" font-size="14" >3 387 000</text>
<line x1="1871.5" y1="649.5" x2="1877.5" y2="649.5" stroke="#c8c8c8" stroke-width="1"/>
<line x1="1874.5" y1="660.5" x2="1877.5" y2="660.5" stroke="#c8c8c8" stroke-width="1"/>
<text x="1868.5" y="678" text-anchor="end" fill="#fff" font-size="14" >3 386 000</text>
<line x1="1871.5" y1="673.5" x2="1877.5" y2="673.5" stroke="#c8c8c8" stroke-width="1"/>
<line x1="2862.5" y1="44.5" x2="2869" y2="44.5" stroke="#c8c8c8" stroke-width="1"/>
<line x1="2862.5" y1="48.5" x2="2865.5" y2="48.5" stroke="#c8c8c8" stroke-width="1"/>
<line x1="2862.5" y1="51.5" x2="2865.5" y2="51.5" stroke="#c8c8c8" stroke-width="1"/>
<line x1="2862.5" y1="55.5" x2="2865.5" y2="55.5" stroke="#c8c8c8" stroke-width="1"/>
<line x1="2862.5" y1="58.5" x2="2865.5" y2="58.5" stroke="#c8c8c8" stroke-width="1"/>
<text x="2870.5" y="50" text-anchor="start" fill="#fff" font-size="14" >59 475</text>
<line x1="2862.5" y1="62.5" x2="2869" y2="62.5" stroke="#c8c8c8" stroke-width="1"/>
<line x1="2862.5" y1="65.5" x2="2865.5" y2="65.5" stroke="#c8c8c8" stroke-width="1"/>
<line x1="2862.5" y1="69.5" x2="2865.5" y2="69.5" stroke="#c8c8c8" stroke-width="1"/>
<line x1="2862.5" y1="72.5" x2="2865.5" y2="72.5" stroke="#c8c8c8" stroke-width="1"/>
<line x1="2862.5" y1="75.5" x2="2865.5" y2="75.5" stroke="#c8c8c8" stroke-width="1"/>
<text x="2870.5" y="67" text-anchor="start" fill="#fff" font-size="14" >59 470</text>
<line x1="2862.5" y1="79.5" x2="2869" y2="79.5" stroke="#c8c8c8" stroke-width="1"/>
<line x1="2862.5" y1="82.5" x2="2865.5" y2="82.5" stroke="#c8c8c8" stroke-width="1"/>
<line x1="2862.5" y1="86.5" x2="2865.5" y2="86.5" stroke="#c8c8c8" stroke-width="1"/>
<line x1="2862.5" y1="89.5" x2="2865.5" y2="89.5" stroke="#c8c8c8" stroke-width="1"/>
<line x1="2862.5" y1="93.5" x2="2865.5" y2="93.5" stroke="#c8c8c8" stroke-width="1"/>
<text x="2870.5" y="84" text-anchor="start" fill="#fff" font-size="14" >59 465</text>
<line x1="2862.5" y1="96.5" x2="2869" y2="96.5" stroke="#c8c8c8" stroke-width="1"/>
<line x1="2862.5" y1="100.5" x2="2865.5" y2="100.5" stroke="#c8c8c8" stroke-width="1"/>
<line x1="2862.5" y1="103.5" x2="2865.5" y2="103.5" stroke="#c8c8c8" stroke-width="1"/>
<line x1="2862.5" y1="106.5" x2="2865.5" y2="106.5" stroke="#c8c8c8" stroke-width="1"/>
<line x1="2862.5" y1="110.5" x2="2865.5" y2="110.5" stroke="#c8c8c8" stroke-width="1"/>
<text x="2870.5" y="102" text-anchor="start" fill="#fff" font-size="14" >59 460</text>
<line x1="2862.5" y1="113.5" x2="2869" y2="113.5" stroke="#c8c8c8" stroke-width="1"/>
<line x1="2862.5" y1="117.5" x2="2865.5" y2="117.5" stroke="#c8c8c8" stroke-width="1"/>
<line x1="2862.5" y1="120.5" x2="2865.5" y2="120.5" stroke="#c8c8c8" stroke-width="1"/>
<line x1="2862.5" y1="124.5" x2="2865.5" y2="124.5" stroke="#c8c8c8" stroke-width="1"/>
<line x1="2862.5" y1="127.5" x2="2865.5" y2="127.5" stroke="#c8c8c8" stroke-width="1"/>
<text x="2870.5" y="119" text-anchor="start" fill="#fff" font-size="14" >59 455</text>
<line x1="2862.5" y1="130.5" x2="2869" y2="130.5" stroke="#c8c8c8" stroke-width="1"/>
<line x1="2862.5" y1="134.5" x2="2865.5" y2="134.5" stroke="#c8c8c8" stroke-width="1"/>
<line x1="2862.5" y1="137.5" x2="2865.5" y2="137.5" stroke="#c8c8c8" stroke-width="1"/>
<line x1="2862.5" y1="141.5" x2="2865.5" y2="141.5" stroke="#c8c8c8" stroke-width="1"/>
<line x1="2862.5" y1="144.5" x2="2865.5" y2="144.5" stroke="#c8c8c8" stroke-width="1"/>
<text x="2870.5" y="136" text-anchor="start" fill="#fff" font-size="14" >59 450</text>
<line x1="2862.5" y1="148.5" x2="2869" y2="148.5" stroke="#c8c8c8" stroke-width="1"/>
<line x1="2862.5" y1="151.5" x2="2865.5" y2="151.5" stroke="#c8c8c8" stroke-width="1"/>
<line x1="2862.5" y1="155.5" x2="2865.5" y2="155.5" stroke="#c8c8c8" stroke-width="1"/>
<line x1="2862.5" y1="158.5" x2="2865.5" y2="158.5" stroke="#c8c8c8" stroke-width="1"/>
<line x1="2862.5" y1="161.5" x2="2865.5" y2="161.5" stroke="#c8c8c8" stroke-width="1"/>
<text x="2870.5" y="153" text-anchor="start" fill="#fff" font-size="14" >59 445</text>
<line x1="2862.5" y1="165.5" x2="2869" y2="165.5" stroke="#c8c8c8" stroke-width="1"/>
<line x1="2862.5" y1="168.5" x2="2865.5" y2="168.5" stroke="#c8c8c8" stroke-width="1"/>
<line x1="2862.5" y1="172.5" x2="2865.5" y2="172.5" stroke="#c8c8c8" stroke-width="1"/>
<line x1="2862.5" y1="175.5" x2="2865.5" y2="175.5" stroke="#c8c8c8" stroke-width="1"/>
<line x1="2862.5" y1="179.5" x2="2865.5" y2="179.5" stroke="#c8c8c8" stroke-width="1"/>
<text x="2870.5" y="171" text-anchor="start" fill="#fff" font-size="14" >59 440</text>
<line x1="2862.5" y1="182.5" x2="2869" y2="182.5" stroke="#c8c8c8" stroke-width="1"/>
<line x1="2862.5" y1="186.5" x2="2865.5" y2="186.5" stroke="#c8c8c8" stroke-width="1"/>
<line x1="2862.5" y1="189.5" x2="2865.5" y2="189.5" stroke="#c8c8c8" stroke-width="1"/>
<line x1="2862.5" y1="192.5" x2="2865.5" y2="192.5" stroke="#c8c8c8" stroke-width="1"/>
<line x1="2862.5" y1="196.5" x2="2865.5" y2="196.5" stroke="#c8c8c8" stroke-width="1"/>
<line x1="2862.5" y1="199.5" x2="2869" y2="199.5" stroke="#c8c8c8" stroke-width="1"/>
<line x1="2862.5" y1="203.5" x2="2865.5" y2="203.5" stroke="#c8c8c8" stroke-width="1"/>
<line x1="2862.5" y1="206.5" x2="2865.5" y2="206.5" stroke="#c8c8c8" stroke-width="1"/>
<line x1="2862.5" y1="210.5" x2="2865.5" y2="210.5" stroke="#c8c8c8" stroke-width="1"/>
<line x1="2862.5" y1="213.5" x2="2865.5" y2="213.5" stroke="#c8c8c8" stroke-width="1"/>
<text x="2870.5" y="205" text-anchor="start" fill="#fff" font-size="14" >59 430</text>
<line x1="2862.5" y1="217.5" x2="2869" y2="217.5" stroke="#c8c8c8" stroke-width="1"/>
<line x1="2862.5" y1="220.5" x2="2865.5" y2="220.5" stroke="#c8c8c8" stroke-width="1"/>
<line x1="2862.5" y1="223.5" x2="2865.5" y2="223.5" stroke="#c8c8c8" stroke-width="1"/>
<line x1="2862.5" y1="227.5" x2="2865.5" y2="227.5" stroke="#c8c8c8" stroke-width="1"/>
<line x1="2862.5" y1="230.5" x2="2865.5" y2="230.5" stroke="#c8c8c8" stroke-width="1"/>
<text x="2870.5" y="222" text-anchor="start" fill="#fff" font-size="14" >59 425</text>
<line x1="2862.5" y1="234.5" x2="2869" y2="234.5" stroke="#c8c8c8" stroke-width="1"/>
<line x1="2862.5" y1="237.5" x2="2865.5" y2="237.5" stroke="#c8c8c8" stroke-width="1"/>
<line x1="2862.5" y1="241.5" x2="2865.5" y2="241.5" stroke="#c8c8c8" stroke-width="1"/>
<line x1="2862.5" y1="244.5" x2="2865.5" y2="244.5" stroke="#c8c8c8" stroke-width="1"/>
<line x1="2862.5" y1="248.5" x2="2865.5" y2="248.5" stroke="#c8c8c8" stroke-width="1"/>
<text x="2870.5" y="239" text-anchor="start" fill="#fff" font-size="14" >59 420</text>
<line x1="2862.5" y1="251.5" x2="2869" y2="251.5" stroke="#c8c8c8" stroke-width="1"/>
<line x1="2862.5" y1="254.5" x2="2865.5" y2="254.5" stroke="#c8c8c8" stroke-width="1"/>
<line x1="2862.5" y1="258.5" x2="2865.5" y2="258.5" stroke="#c8c8c8" stroke-width="1"/>
<line x1="2862.5" y1="261.5" x2="2865.5" y2="261.5" stroke="#c8c8c8" stroke-width="1"/>
<line x1="2862.5" y1="265.5" x2="2865.5" y2="265.5" stroke="#c8c8c8" stroke-width="1"/>
<text x="2870.5" y="257" text-anchor="start" fill="#fff" font-size="14" >59 415</text>
<line x1="2862.5" y1="268.5" x2="2869" y2="268.5" stroke="#c8c8c8" stroke-width="1"/>
<line x1="2862.5" y1="272.5" x2="2865.5" y2="272.5" stroke="#c8c8c8" stroke-width="1"/>
<line x1="2862.5" y1="275.5" x2="2865.5" y2="275.5" stroke="#c8c8c8" stroke-width="1"/>
<line x1="2862.5" y1="279.5" x2="2865.5" y2="279.5" stroke="#c8c8c8" stroke-width="1"/>
<line x1="2862.5" y1="282.5" x2="2865.5" y2="282.5" stroke="#c8c8c8" stroke-width="1"/>
<text x="2870.5" y="274" text-anchor="start" fill="#fff" font-size="14" >59 410</text>
<line x1="2862.5" y1="285.5" x2="2869" y2="285.5" stroke="#c8c8c8" stroke-width="1"/>
<line x1="2862.5" y1="289.5" x2="2865.5" y2="289.5" stroke="#c8c8c8" stroke-width="1"/>
<line x1="2862.5" y1="292.5" x2="2865.5" y2="292.5" stroke="#c8c8c8" stroke-width="1"/>
<line x1="2862.5" y1="296.5" x2="2865.5" y2="296.5" stroke="#c8c8c8" stroke-width="1"/>
<line x1="2862.5" y1="299.5" x2="2865.5" y2="299.5" stroke="#c8c8c8" stroke-width="1"/>
<text x="2870.5" y="291" text-anchor="start" fill="#fff" font-size="14" >59 405</text>
<line x1="2862.5" y1="303.5" x2="2869" y2="303.5" stroke="#c8c8c8" stroke-width="1"/>
<line x1="2862.5" y1="306.5" x2="2865.5" y2="306.5" stroke="#c8c8c8" stroke-width="1"/>
<line x1="2862.5" y1="310.5" x2="2865.5" y2="310.5" stroke="#c8c8c8" stroke-width="1"/>
<line x1="2862.5" y1="313.5" x2="2865.5" y2="313.5" stroke="#c8c8c8" stroke-width="1"/>
<line x1="2862.5" y1="316.5" x2="2865.5" y2="316.5" stroke="#c8c8c8" stroke-width="1"/>
<text x="2870.5" y="308" text-anchor="start" fill="#fff" font-size="14" >59 400</text>
<line x1="2862.5" y1="320.5" x2="2869" y2="320.5" stroke="#c8c8c8" stroke-width="1"/>
<line x1="2862.5" y1="323.5" x2="2865.5" y2="323.5" stroke="#c8c8c8" stroke-width="1"/>
<line x1="2862.5" y1="327.5" x2="2865.5" y2="327.5" stroke="#c8c8c8" stroke-width="1"/>
<line x1="2862.5" y1="330.5" x2="2865.5" y2="330.5" stroke="#c8c8c8" stroke-width="1"/>
<line x1="2862.5" y1="334.5" x2="2865.5" y2="334.5" stroke="#c8c8c8" stroke-width="1"/>
<text x="2870.5" y="326" text-anchor="start" fill="#fff" font-size="14" >59 395</text>
<line x1="2862.5" y1="337.5" x2="2869" y2="337.5" stroke="#c8c8c8" stroke-width="1"/>
<line x1="2862.5" y1="341.5" x2="2865.5" y2="341.5" stroke="#c8c8c8" stroke-width="1"/>
<line x1="2862.5" y1="344.5" x2="2865.5" y2="344.5" stroke="#c8c8c8" stroke-width="1"/>
<line x1="2862.5" y1="347.5" x2="2865.5" y2="347.5" stroke="#c8c8c8" stroke-width="1"/>
<line x1="2862.5" y1="351.5" x2="2865.5" y2="351.5" stroke="#c8c8c8" stroke-width="1"/>
<text x="2870.5" y="343" text-anchor="start" fill="#fff" font-size="14" >59 390</text>
<line x1="2862.5" y1="354.5" x2="2869" y2="354.5" stroke="#c8c8c8" stroke-width="1"/>
<line x1="2862.5" y1="358.5" x2="2865.5" y2="358.5" stroke="#c8c8c8" stroke-width="1"/>
<line x1="2862.5" y1="361.5" x2="2865.5" y2="361.5" stroke="#c8c8c8" stroke-width="1"/>
<line x1="2862.5" y1="365.5" x2="2865.5" y2="365.5" stroke="#c8c8c8" stroke-width="1"/>
<line x1="2862.5" y1="368.5" x2="2865.5" y2="368.5" stroke="#c8c8c8" stroke-width="1"/>
<text x="2870.5" y="360" text-anchor="start" fill="#fff" font-size="14" >59 385</text>
<line x1="2862.5" y1="372.5" x2="2869" y2="372.5" stroke="#c8c8c8" stroke-width="1"/>
<line x1="2862.5" y1="375.5" x2="2865.5" y2="375.5" stroke="#c8c8c8" stroke-width="1"/>
<line x1="2862.5" y1="378.5" x2="2865.5" y2="378.5" stroke="#c8c8c8" stroke-width="1"/>
<line x1="2862.5" y1="382.5" x2="2865.5" y2="382.5" stroke="#c8c8c8" stroke-width="1"/>
<line x1="2862.5" y1="385.5" x2="2865.5" y2="385.5" stroke="#c8c8c8" stroke-width="1"/>
<text x="2870.5" y="377" text-anchor="start" fill="#fff" font-size="14" >59 380</text>
<line x1="2862.5" y1="389.5" x2="2869" y2="389.5" stroke="#c8c8c8" stroke-width="1"/>
<line x1="2862.5" y1="392.5" x2="2865.5" y2="392.5" stroke="#c8c8c8" stroke-width="1"/>
<line x1="2862.5" y1="396.5" x2="2865.5" y2="396.5" stroke="#c8c8c8" stroke-width="1"/>
<line x1="2862.5" y1="399.5" x2="2865.5" y2="399.5" stroke="#c8c8c8" stroke-width="1"/>
<line x1="2862.5" y1="403.5" x2="2865.5" y2="403.5" stroke="#c8c8c8" stroke-width="1"/>
<text x="2870.5" y="394" text-anchor="start" fill="#fff" font-size="14" >59 375</text>
<line x1="2862.5" y1="406.5" x2="2869" y2="406.5" stroke="#c8c8c8" stroke-width="1"/>
<line x1="2862.5" y1="409.5" x2="2865.5" y2="409.5" stroke="#c8c8c8" stroke-width="1"/>
<line x1="2862.5" y1="413.5" x2="2865.5" y2="413.5" stroke="#c8c8c8" stroke-width="1"/>
<line x1="2862.5" y1="416.5" x2="2865.5" y2="416.5" stroke="#c8c8c8" stroke-width="1"/>
<line x1="2862.5" y1="420.5" x2="2865.5" y2="420.5" stroke="#c8c8c8" stroke-width="1"/>
<text x="2870.5" y="412" text-anchor="start" fill="#fff" font-size="14" >59 370</text>
<line x1="2862.5" y1="423.5" x2="2869" y2="423.5" stroke="#c8c8c8" stroke-width="1"/>
<line x1="2862.5" y1="427.5" x2="2865.5" y2="427.5" stroke="#c8c8c8" stroke-width="1"/>
<line x1="2862.5" y1="430.5" x2="2865.5" y2="430.5" stroke="#c8c8c8" stroke-width="1"/>
<line x1="2862.5" y1="434.5" x2="2865.5" y2="434.5" stroke="#c8c8c8" stroke-width="1"/>
<line x1="2862.5" y1="437.5" x2="2865.5" y2="437.5" stroke="#c8c8c8" stroke-width="1"/>
<text x="2870.5" y="429" text-anchor="start" fill="#fff" font-size="14" >59 365</text>
<line x1="2862.5" y1="440.5" x2="2869" y2="440.5" stroke="#c8c8c8" stroke-width="1"/>
<line x1="2862.5" y1="444.5" x2="2865.5" y2="444.5" stroke="#c8c8c8" stroke-width="1"/>
<line x1="2862.5" y1="447.5" x2="2865.5" y2="447.5" stroke="#c8c8c8" stroke-width="1"/>
<line x1="2862.5" y1="451.5" x2="2865.5" y2="451.5" stroke="#c8c8c8" stroke-width="1"/>
<line x1="2862.5" y1="454.5" x2="2865.5" y2="454.5" stroke="#c8c8c8" stroke-width="1"/>
<text x="2870.5" y="446" text-anchor="start" fill="#fff" font-size="14" >59 360</text>
<line x1="2862.5" y1="458.5" x2="2869" y2="458.5" stroke="#c8c8c8" stroke-width="1"/>
<line x1="2862.5" y1="461.5" x2="2865.5" y2="461.5" stroke="#c8c8c8" stroke-width="1"/>
<line x1="2862.5" y1="465.5" x2="2865.5" y2="465.5" stroke="#c8c8c8" stroke-width="1"/>
<line x1="2862.5" y1="468.5" x2="2865.5" y2="468.5" stroke="#c8c8c8" stroke-width="1"/>
<line x1="2862.5" y1="471.5" x2="2865.5" y2="471.5" stroke="#c8c8c8" stroke-width="1"/>
<text x="2870.5" y="463" text-anchor="start" fill="#fff" font-size="14" >59 355</text>
<line x1="2862.5" y1="475.5" x2="2869" y2="475.5" stroke="#c8c8c8" stroke-width="1"/>
<line x1="2862.5" y1="478.5" x2="2865.5" y2="478.5" stroke="#c8c8c8" stroke-width="1"/>
<line x1="2862.5" y1="482.5" x2="2865.5" y2="482.5" stroke="#c8c8c8" stroke-width="1"/>
<line x1="2862.5" y1="485.5" x2="2865.5" y2="485.5" stroke="#c8c8c8" stroke-width="1"/>
<line x1="2862.5" y1="489.5" x2="2865.5" y2="489.5" stroke="#c8c8c8" stroke-width="1"/>
<text x="2870.5" y="480" text-anchor="start" fill="#fff" font-size="14" >59 350</text>
<line x1="2862.5" y1="492.5" x2="2869" y2="492.5" stroke="#c8c8c8" stroke-width="1"/>
<line x1="2862.5" y1="496.5" x2="2865.5" y2="496.5" stroke="#c8c8c8" stroke-width="1"/>
<line x1="2862.5" y1="499.5" x2="2865.5" y2="499.5" stroke="#c8c8c8" stroke-width="1"/>
<line x1="2862.5" y1="502.5" x2="2865.5" y2="502.5" stroke="#c8c8c8" stroke-width="1"/>
<line x1="2862.5" y1="506.5" x2="2865.5" y2="506.5" stroke="#c8c8c8" stroke-width="1"/>
<text x="2870.5" y="498" text-anchor="start" fill="#fff" font-size="14" >59 345</text>
<line x1="2862.5" y1="509.5" x2="2869" y2="509.5" stroke="#c8c8c8" stroke-width="1"/>
<line x1="2862.5" y1="513.5" x2="2865.5" y2="513.5" stroke="#c8c8c8" stroke-width="1"/>
<line x1="2862.5" y1="516.5" x2="2865.5" y2="516.5" stroke="#c8c8c8" stroke-width="1"/>
<line x1="2862.5" y1="520.5" x2="2865.5" y2="520.5" stroke="#c8c8c8" stroke-width="1"/>
<line x1="2862.5" y1="523.5" x2="2865.5" y2="523.5" stroke="#c8c8c8" stroke-width="1"/>
<text x="2870.5" y="515" text-anchor="start" fill="#fff" font-size="14" >59 340</text>
<line x1="2862.5" y1="527.5" x2="2869" y2="527.5" stroke="#c8c8c8" stroke-width="1"/>
<line x1="2862.5" y1="530.5" x2="2865.5" y2="530.5" stroke="#c8c8c8" stroke-width="1"/>
<line x1="2862.5" y1="533.5" x2="2865.5" y2="533.5" stroke="#c8c8c8" stroke-width="1"/>
<line x1="2862.5" y1="537.5" x2="2865.5" y2="537.5" stroke="#c8c8c8" stroke-width="1"/>
<line x1="2862.5" y1="540.5" x2="2865.5" y2="540.5" stroke="#c8c8c8" stroke-width="1"/>
<text x="2870.5" y="532" text-anchor="start" fill="#fff" font-size="14" >59 335</text>
<line x1="2862.5" y1="544.5" x2="2869" y2="544.5" stroke="#c8c8c8" stroke-width="1"/>
<line x1="2862.5" y1="547.5" x2="2865.5" y2="547.5" stroke="#c8c8c8" stroke-width="1"/>
<line x1="2862.5" y1="551.5" x2="2865.5" y2="551.5" stroke="#c8c8c8" stroke-width="1"/>
<line x1="2862.5" y1="554.5" x2="2865.5" y2="554.5" stroke="#c8c8c8" stroke-width="1"/>
<line x1="2862.5" y1="558.5" x2="2865.5" y2="558.5" stroke="#c8c8c8" stroke-width="1"/>
<text x="2870.5" y="549" text-anchor="start" fill="#fff" font-size="14" >59 330</text>
<line x1="2862.5" y1="561.5" x2="2869" y2="561.5" stroke="#c8c8c8" stroke-width="1"/>
<line x1="2862.5" y1="564.5" x2="2865.5" y2="564.5" stroke="#c8c8c8" stroke-width="1"/>
<line x1="2862.5" y1="568.5" x2="2865.5" y2="568.5" stroke="#c8c8c8" stroke-width="1"/>
<line x1="2862.5" y1="571.5" x2="2865.5" y2="571.5" stroke="#c8c8c8" stroke-width="1"/>
<line x1="2862.5" y1="575.5" x2="2865.5" y2="575.5" stroke="#c8c8c8" stroke-width="1"/>
<text x="2870.5" y="567" text-anchor="start" fill="#fff" font-size="14" >59 325</text>
<line x1="2862.5" y1="578.5" x2="2869" y2="578.5" stroke="#c8c8c8" stroke-width="1"/>
<line x1="2862.5" y1="582.5" x2="2865.5" y2="582.5" stroke="#c8c8c8" stroke-width="1"/>
<line x1="2862.5" y1="585.5" x2="2865.5" y2="585.5" stroke="#c8c8c8" stroke-width="1"/>
<line x1="2862.5" y1="589.5" x2="2865.5" y2="589.5" stroke="#c8c8c8" stroke-width="1"/>
<line x1="2862.5" y1="592.5" x2="2865.5" y2="592.5" stroke="#c8c8c8" stroke-width="1"/>
<text x="2870.5" y="584" text-anchor="start" fill="#fff" font-size="14" >59 320</text>
<line x1="2862.5" y1="595.5" x2="2869" y2="595.5" stroke="#c8c8c8" stroke-width="1"/>
<line x1="2862.5" y1="599.5" x2="2865.5" y2="599.5" stroke="#c8c8c8" stroke-width="1"/>
<line x1="2862.5" y1="602.5" x2="2865.5" y2="602.5" stroke="#c8c8c8" stroke-width="1"/>
<line x1="2862.5" y1="606.5" x2="2865.5" y2="606.5" stroke="#c8c8c8" stroke-width="1"/>
<line x1="2862.5" y1="609.5" x2="2865.5" y2="609.5" stroke="#c8c8c8" stroke-width="1"/>
<text x="2870.5" y="601" text-anchor="start" fill="#fff" font-size="14" >59 315</text>
<line x1="2862.5" y1="613.5" x2="2869" y2="613.5" stroke="#c8c8c8" stroke-width="1"/>
<line x1="2862.5" y1="616.5" x2="2865.5" y2="616.5" stroke="#c8c8c8" stroke-width="1"/>
<line x1="2862.5" y1="620.5" x2="2865.5" y2="620.5" stroke="#c8c8c8" stroke-width="1"/>
<line x1="2862.5" y1="623.5" x2="2865.5" y2="623.5" stroke="#c8c8c8" stroke-width="1"/>
<line x1="2862.5" y1="626.5" x2="2865.5" y2="626.5" stroke="#c8c8c8" stroke-width="1"/>
<text x="2870.5" y="618" text-anchor="start" fill="#fff" font-size="14" >59 310</text>
<line x1="2862.5" y1="630.5" x2="2869" y2="630.5" stroke="#c8c8c8" stroke-width="1"/>
<line x1="2862.5" y1="633.5" x2="2865.5" y2="633.5" stroke="#c8c8c8" stroke-width="1"/>
<line x1="2862.5" y1="637.5" x2="2865.5" y2="637.5" stroke="#c8c8c8" stroke-width="1"/>
<line x1="2862.5" y1="640.5" x2="2865.5" y2="640.5" stroke="#c8c8c8" stroke-width="1"/>
<line x1="2862.5" y1="644.5" x2="2865.5" y2="644.5" stroke="#c8c8c8" stroke-width="1"/>
<text x="2870.5" y="635" text-anchor="start" fill="#fff" font-size="14" >59 305</text>
<line x1="2862.5" y1="647.5" x2="2869" y2="647.5" stroke="#c8c8c8" stroke-width="1"/>
<line x1="2862.5" y1="651.5" x2="2865.5" y2="651.5" stroke="#c8c8c8" stroke-width="1"/>
<line x1="2862.5" y1="654.5" x2="2865.5" y2="654.5" stroke="#c8c8c8" stroke-width="1"/>
<line x1="2862.5" y1="657.5" x2="2865.5" y2="657.5" stroke="#c8c8c8" stroke-width="1"/>
<line x1="2862.5" y1="661.5" x2="2865.5" y2="661.5" stroke="#c8c8c8" stroke-width="1"/>
<text x="2870.5" y="653" text-anchor="start" fill="#fff" font-size="14" >59 300</text>
<line x1="2862.5" y1="664.5" x2="2869" y2="664.5" stroke="#c8c8c8" stroke-width="1"/>
<line x1="2862.5" y1="668.5" x2="2865.5" y2="668.5" stroke="#c8c8c8" stroke-width="1"/>
<line x1="2862.5" y1="671.5" x2="2865.5" y2="671.5" stroke="#c8c8c8" stroke-width="1"/>
<line x1="2862.5" y1="675.5" x2="2865.5" y2="675.5" stroke="#c8c8c8" stroke-width="1"/>
<line x1="2862.5" y1="678.5" x2="2865.5" y2="678.5" stroke="#c8c8c8" stroke-width="1"/>
<text x="2870.5" y="670" text-anchor="start" fill="#fff" font-size="14" >59 295</text>
<rect x="2867.5" y="171.5" width="47" height="17" fill="#000" stroke="#e8e8e8"/>
<text x="2870.5" y="185" text-anchor="start" fill="#19e8f0" font-size="14" >59 436</text>
<text x="2870.5" y="741" text-anchor="start" fill="#fff" font-size="14" >5 000</text>
<line x1="2862.5" y1="735.5" x2="2868" y2="735.5" stroke="#c8c8c8" stroke-width="1"/>
<line x1="2862.5" y1="768.5" x2="2866" y2="768.5" stroke="#c8c8c8" stroke-width="1"/>
<line x1="2862.5" y1="760.5" x2="2866" y2="760.5" stroke="#c8c8c8" stroke-width="1"/>
<line x1="2862.5" y1="752.5" x2="2866" y2="752.5" stroke="#c8c8c8" stroke-width="1"/>
<line x1="2862.5" y1="744.5" x2="2866" y2="744.5" stroke="#c8c8c8" stroke-width="1"/>
<line x1="2862.5" y1="736.5" x2="2866" y2="736.5" stroke="#c8c8c8" stroke-width="1"/>
<line x1="2862.5" y1="728.5" x2="2866" y2="728.5" stroke="#c8c8c8" stroke-width="1"/>
<line x1="2862.5" y1="720.5" x2="2866" y2="720.5" stroke="#c8c8c8" stroke-width="1"/>
<line x1="2862.5" y1="712.5" x2="2866" y2="712.5" stroke="#c8c8c8" stroke-width="1"/>
<line x1="2862.5" y1="704.5" x2="2866" y2="704.5" stroke="#c8c8c8" stroke-width="1"/>
<rect x="2867.5" y="763.5" width="30" height="17" fill="#000" stroke="#e8e8e8"/>
<text x="2870.5" y="777" text-anchor="start" fill="#19e8f0" font-size="14" >368</text>
<line x1="1919.5" y1="792.5" x2="1919.5" y2="797.5" stroke="#c8c8c8" stroke-width="1"/>
<text x="1922.5" y="807" text-anchor="start" fill="#fff" font-size="14" >:10</text>
<line x1="1975.5" y1="792.5" x2="1975.5" y2="797.5" stroke="#c8c8c8" stroke-width="1"/>
<text x="1978.5" y="807" text-anchor="start" fill="#fff" font-size="14" >:20</text>
<line x1="2031.5" y1="792.5" x2="2031.5" y2="797.5" stroke="#c8c8c8" stroke-width="1"/>
<text x="2034.5" y="807" text-anchor="start" fill="#fff" font-size="14" >:30</text>
<line x1="2087.5" y1="792.5" x2="2087.5" y2="797.5" stroke="#c8c8c8" stroke-width="1"/>
<text x="2090.5" y="807" text-anchor="start" fill="#fff" font-size="14" >:40</text>
<line x1="2143.5" y1="792.5" x2="2143.5" y2="797.5" stroke="#c8c8c8" stroke-width="1"/>
<text x="2146.5" y="807" text-anchor="start" fill="#fff" font-size="14" >:50</text>
<line x1="2199.5" y1="792.5" x2="2199.5" y2="811.5" stroke="#c8c8c8" stroke-width="1"/>
<text x="2202.5" y="807" text-anchor="start" fill="#fff" font-size="14" >18h</text>
<line x1="2254.5" y1="792.5" x2="2254.5" y2="797.5" stroke="#c8c8c8" stroke-width="1"/>
<text x="2257.5" y="807" text-anchor="start" fill="#fff" font-size="14" >:10</text>
<line x1="2310.5" y1="792.5" x2="2310.5" y2="797.5" stroke="#c8c8c8" stroke-width="1"/>
<text x="2313.5" y="807" text-anchor="start" fill="#fff" font-size="14" >:20</text>
<line x1="2366.5" y1="792.5" x2="2366.5" y2="797.5" stroke="#c8c8c8" stroke-width="1"/>
<text x="2369.5" y="807" text-anchor="start" fill="#fff" font-size="14" >:30</text>
<line x1="2422.5" y1="792.5" x2="2422.5" y2="797.5" stroke="#c8c8c8" stroke-width="1"/>
<line x1="2450.5" y1="792.5" x2="2450.5" y2="811.5" stroke="#c8c8c8" stroke-width="1"/>
<text x="2453.5" y="807" text-anchor="start" fill="#fff" font-size="14" >19h</text>
<line x1="2506.5" y1="792.5" x2="2506.5" y2="797.5" stroke="#c8c8c8" stroke-width="1"/>
<text x="2509.5" y="807" text-anchor="start" fill="#fff" font-size="14" >:10</text>
<line x1="2562.5" y1="792.5" x2="2562.5" y2="797.5" stroke="#c8c8c8" stroke-width="1"/>
<text x="2565.5" y="807" text-anchor="start" fill="#fff" font-size="14" >:20</text>
<line x1="2618.5" y1="792.5" x2="2618.5" y2="797.5" stroke="#c8c8c8" stroke-width="1"/>
<text x="2621.5" y="807" text-anchor="start" fill="#fff" font-size="14" >:30</text>
<line x1="2673.5" y1="792.5" x2="2673.5" y2="797.5" stroke="#c8c8c8" stroke-width="1"/>
<text x="2676.5" y="807" text-anchor="start" fill="#fff" font-size="14" >:40</text>
<line x1="2422.5" y1="792.5" x2="2422.5" y2="797.5" stroke="#c8c8c8" stroke-width="1"/>
<rect x="1947" y="751" width="2" height="24.5" fill="#10b010" />
<rect x="1952" y="763" width="2" height="12.5" fill="#10b010" />
<rect x="1958" y="726" width="2" height="49.5" fill="#10b010" />
<rect x="1964" y="721" width="2" height="54.5" fill="#ff0000" />
<rect x="1970" y="740" width="2" height="35.5" fill="#ff0000" />
<rect x="1975" y="740" width="2" height="35.5" fill="#10b010" />
<rect x="1980" y="719" width="2" height="56.5" fill="#10b010" />
<rect x="1986" y="737" width="2" height="38.5" fill="#ff0000" />
<rect x="1992" y="765" width="2" height="10.5" fill="#ff0000" />
<rect x="1998" y="765" width="2" height="10.5" fill="#10b010" />
<rect x="2003" y="734" width="2" height="41.5" fill="#10b010" />
<rect x="2008" y="761" width="2" height="14.5" fill="#ff0000" />
<rect x="2014" y="755" width="2" height="20.5" fill="#ff0000" />
<rect x="2020" y="766" width="2" height="9.5" fill="#ff0000" />
<rect x="2026" y="752" width="2" height="23.5" fill="#10b010" />
<rect x="2031" y="755" width="2" height="20.5" fill="#10b010" />
<rect x="2036" y="765" width="2" height="10.5" fill="#ff0000" />
<rect x="2042" y="753" width="2" height="22.5" fill="#ff0000" />
<rect x="2048" y="762" width="2" height="13.5" fill="#ff0000" />
<rect x="2053" y="769" width="2" height="6.5" fill="#10b010" />
<rect x="2059" y="755" width="2" height="20.5" fill="#ff0000" />
<rect x="2064" y="734" width="2" height="41.5" fill="#10b010" />
<rect x="2070" y="707" width="2" height="68.5" fill="#ff0000" />
<rect x="2076" y="755" width="2" height="20.5" fill="#10b010" />
<rect x="2081" y="765" width="2" height="10.5" fill="#ff0000" />
<rect x="2087" y="760" width="2" height="15.5" fill="#10b010" />
<rect x="2092" y="757" width="2" height="18.5" fill="#ff0000" />
<rect x="2098" y="716" width="2" height="59.5" fill="#ff0000" />
<rect x="2104" y="754" width="2" height="21.5" fill="#ff0000" />
<rect x="2109" y="744" width="2" height="31.5" fill="#10b010" />
<rect x="2115" y="739" width="2" height="36.5" fill="#ff0000" />
<rect x="2120" y="768" width="2" height="7.5" fill="#10b010" />
<rect x="2126" y="766" width="2" height="9.5" fill="#10b010" />
<rect x="2132" y="761" width="2" height="14.5" fill="#10b010" />
<rect x="2137" y="771" width="2" height="4.5" fill="#ff0000" />
<rect x="2143" y="764" width="2" height="11.5" fill="#10b010" />
<rect x="2148" y="766" width="2" height="9.5" fill="#ff0000" />
<rect x="2154" y="770" width="2" height="5.5" fill="#10b010" />
<rect x="2160" y="772" width="2" height="3.5" fill="#10b010" />
<rect x="2165" y="765" width="2" height="10.5" fill="#ff0000" />
<rect x="2171" y="761" width="2" height="14.5" fill="#ff0000" />
<rect x="2176" y="768" width="2" height="7.5" fill="#10b010" />
<rect x="2182" y="771" width="2" height="4.5" fill="#10b010" />
<rect x="2188" y="772" width="2" height="3.5" fill="#10b010" />
<rect x="2193" y="761" width="2" height="14.5" fill="#ff0000" />
<rect x="2199" y="757" width="2" height="18.5" fill="#10b010" />
<rect x="2204" y="762" width="2" height="13.5" fill="#10b010" />
<rect x="2210" y="746" width="2" height="29.5" fill="#ff0000" />
<rect x="2215" y="725" width="2" height="50.5" fill="#ff0000" />
<rect x="2221" y="758" width="2" height="17.5" fill="#ff0000" />
<rect x="2226" y="752" width="2" height="23.5" fill="#ff0000" />
<rect x="2232" y="752" width="2" height="23.5" fill="#10b010" />
<rect x="2238" y="766" width="2" height="9.5" fill="#10b010" />
<rect x="2243" y="767" width="2" height="8.5" fill="#ff0000" />
<rect x="2249" y="766" width="2" height="9.5" fill="#ff0000" />
<rect x="2254" y="764" width="2" height="11.5" fill="#10b010" />
<rect x="2260" y="754" width="2" height="21.5" fill="#ff0000" />
<rect x="2266" y="739" width="2" height="36.5" fill="#ff0000" />
<rect x="2271" y="748" width="2" height="27.5" fill="#10b010" />
<rect x="2277" y="766" width="2" height="9.5" fill="#10b010" />
<rect x="2282" y="758" width="2" height="17.5" fill="#10b010" />
<rect x="2288" y="762" width="2" height="13.5" fill="#10b010" />
<rect x="2294" y="766" width="2" height="9.5" fill="#ff0000" />
<rect x="2299" y="772" width="2" height="3.5" fill="#ff0000" />
<rect x="2305" y="771" width="2" height="4.5" fill="#ff0000" />
<rect x="2310" y="774" width="2" height="1.5" fill="#10b010" />
<rect x="2316" y="768" width="2" height="7.5" fill="#ff0000" />
<rect x="2322" y="767" width="2" height="8.5" fill="#10b010" />
<rect x="2327" y="766" width="2" height="9.5" fill="#ff0000" />
<rect x="2333" y="768" width="2" height="7.5" fill="#10b010" />
<rect x="2338" y="735" width="2" height="40.5" fill="#10b010" />
<rect x="2344" y="763" width="2" height="12.5" fill="#ff0000" />
<rect x="2350" y="770" width="2" height="5.5" fill="#ff0000" />
<rect x="2355" y="765" width="2" height="10.5" fill="#10b010" />
<rect x="2360" y="765" width="2" height="10.5" fill="#ff0000" />
<rect x="2366" y="742" width="2" height="33.5" fill="#10b010" />
<rect x="2372" y="760" width="2" height="15.5" fill="#ff0000" />
<rect x="2377" y="767" width="2" height="8.5" fill="#10b010" />
<rect x="2383" y="772" width="2" height="3.5" fill="#10b010" />
<rect x="2388" y="770" width="2" height="5.5" fill="#10b010" />
<rect x="2394" y="754" width="2" height="21.5" fill="#10b010" />
<rect x="2400" y="762" width="2" height="13.5" fill="#ff0000" />
<rect x="2405" y="765" width="2" height="10.5" fill="#ff0000" />
<rect x="2411" y="769" width="2" height="6.5" fill="#ff0000" />
<rect x="2416" y="758" width="2" height="17.5" fill="#ff0000" />
<rect x="2422" y="757" width="2" height="18.5" fill="#10b010" />
<rect x="2428" y="769" width="2" height="6.5" fill="#ff0000" />
<rect x="2433" y="767" width="2" height="8.5" fill="#ff0000" />
<rect x="2439" y="769" width="2" height="6.5" fill="#ff0000" />
<rect x="2444" y="767" width="2" height="8.5" fill="#ff0000" />
<rect x="2450" y="762" width="2" height="13.5" fill="#ff0000" />
<rect x="2456" y="767" width="2" height="8.5" fill="#ff0000" />
<rect x="2461" y="771" width="2" height="4.5" fill="#ff0000" />
<rect x="2467" y="768" width="2" height="7.5" fill="#10b010" />
<rect x="2472" y="771" width="2" height="4.5" fill="#10b010" />
<rect x="2478" y="773" width="2" height="2.5" fill="#10b010" />
<rect x="2483" y="773" width="2" height="2.5" fill="#ff0000" />
<rect x="2489" y="774" width="2" height="1.5" fill="#10b010" />
<rect x="2494" y="766" width="2" height="9.5" fill="#10b010" />
<rect x="2500" y="756" width="2" height="19.5" fill="#10b010" />
<rect x="2506" y="768" width="2" height="7.5" fill="#ff0000" />
<rect x="2511" y="773" width="2" height="2.5" fill="#10b010" />
<rect x="2517" y="772" width="2" height="3.5" fill="#ff0000" />
<rect x="2522" y="772" width="2" height="3.5" fill="#10b010" />
<rect x="2528" y="760" width="2" height="15.5" fill="#10b010" />
<rect x="2534" y="758" width="2" height="17.5" fill="#10b010" />
<rect x="2539" y="771" width="2" height="4.5" fill="#ff0000" />
<rect x="2545" y="771" width="2" height="4.5" fill="#ff0000" />
<rect x="2550" y="771" width="2" height="4.5" fill="#ff0000" />
<rect x="2556" y="771" width="2" height="4.5" fill="#10b010" />
<rect x="2562" y="750" width="2" height="25.5" fill="#ff0000" />
<rect x="2567" y="765" width="2" height="10.5" fill="#10b010" />
<rect x="2573" y="770" width="2" height="5.5" fill="#ff0000" />
<rect x="2578" y="770" width="2" height="5.5" fill="#ff0000" />
<rect x="2567" y="770" width="2" height="5.5" fill="#ff0000" />
<rect x="2573" y="770" width="2" height="5.5" fill="#ff0000" />
<rect x="2578" y="766" width="2" height="9.5" fill="#ff0000" />
<rect x="2583" y="768" width="2" height="7.5" fill="#ff0000" />
<rect x="2589" y="768" width="2" height="7.5" fill="#ff0000" />
<rect x="2595" y="770" width="2" height="5.5" fill="#ff0000" />
<rect x="2600" y="768" width="2" height="7.5" fill="#10b010" />
<rect x="2605" y="760" width="2" height="15.5" fill="#10b010" />
<rect x="2611" y="772" width="2" height="3.5" fill="#ff0000" />
<rect x="2617" y="772" width="2" height="3.5" fill="#ff0000" />
<rect x="2622" y="772" width="2" height="3.5" fill="#ff0000" />
<rect x="2628" y="773" width="2" height="2.5" fill="#10b010" />
<rect x="2634" y="774" width="2" height="1.5" fill="#10b010" />
<rect x="2639" y="774" width="2" height="1.5" fill="#10b010" />
<rect x="2645" y="774" width="2" height="1.5" fill="#10b010" />
<rect x="2651" y="774" width="2" height="1.5" fill="#10b010" />
<rect x="2656" y="774" width="2" height="1.5" fill="#10b010" />
<rect x="2661" y="774" width="2" height="1.5" fill="#ff0000" />
<rect x="2667" y="774" width="2" height="1.5" fill="#10b010" />
<rect x="2672" y="772" width="2" height="3.5" fill="#10b010" />
<rect x="2678" y="765" width="2" height="10.5" fill="#10b010" />
<rect x="2684" y="773" width="2" height="2.5" fill="#ff0000" />
<rect x="2690" y="772" width="2" height="3.5" fill="#ff0000" />
<rect x="1950" y="397.5" width="1" height="32.5" fill="#008000"/><rect x="1949" y="397.5" width="3" height="32.5" fill="#008000"/>
<rect x="1957" y="317.5" width="1" height="92.5" fill="#008000"/><rect x="1956" y="317.5" width="3" height="80.0" fill="#008000"/>
<rect x="1964" y="275.0" width="1" height="65.0" fill="#ff0000"/><rect x="1963" y="317.5" width="3" height="12.5" fill="#ff0000"/>
<rect x="1970" y="285.0" width="1" height="80.0" fill="#ff0000"/><rect x="1969" y="327.5" width="3" height="2.5" fill="#ff0000"/>
<rect x="1976" y="272.5" width="1" height="60.0" fill="#008000"/><rect x="1975" y="300.0" width="3" height="32.5" fill="#008000"/>
<rect x="1981" y="165.0" width="1" height="155.0" fill="#008000"/><rect x="1980" y="167.5" width="3" height="135.0" fill="#008000"/>
<rect x="1986" y="152.5" width="1" height="77.5" fill="#ff0000"/><rect x="1985" y="165.0" width="3" height="62.5" fill="#ff0000"/>
<rect x="1992" y="205.0" width="1" height="30.0" fill="#ff0000"/><rect x="1991" y="217.5" width="3" height="5.0" fill="#ff0000"/>
<rect x="1998" y="200.0" width="1" height="32.5" fill="#008000"/><rect x="1997" y="212.5" width="3" height="7.5" fill="#008000"/>
<rect x="2003" y="127.5" width="1" height="80.0" fill="#008000"/><rect x="2002" y="132.5" width="3" height="75.0" fill="#008000"/>
<rect x="2009" y="125.0" width="1" height="50.0" fill="#ff0000"/><rect x="2008" y="130.0" width="3" height="45.0" fill="#ff0000"/>
<rect x="2015" y="145.0" width="1" height="50.0" fill="#ff0000"/><rect x="2014" y="172.5" width="3" height="10.0" fill="#ff0000"/>
<rect x="2020" y="175.0" width="1" height="35.0" fill="#ff0000"/><rect x="2019" y="185.0" width="3" height="22.5" fill="#ff0000"/>
<rect x="2026" y="175.0" width="1" height="72.5" fill="#008000"/><rect x="2025" y="200.0" width="3" height="12.5" fill="#008000"/>
<rect x="2031" y="157.5" width="1" height="42.5" fill="#008000"/><rect x="2030" y="175.0" width="3" height="20.0" fill="#008000"/>
<rect x="2037" y="162.5" width="1" height="40.0" fill="#ff0000"/><rect x="2036" y="165.0" width="3" height="32.5" fill="#ff0000"/>
<rect x="2042" y="187.5" width="1" height="47.5" fill="#ff0000"/><rect x="2041" y="187.5" width="3" height="47.5" fill="#ff0000"/>
<rect x="2048" y="200.0" width="1" height="72.5" fill="#ff0000"/><rect x="2047" y="225.0" width="3" height="27.5" fill="#ff0000"/>
<rect x="2053" y="200.0" width="1" height="52.5" fill="#008000"/><rect x="2052" y="210.0" width="3" height="25.0" fill="#008000"/>
<rect x="2059" y="155.0" width="1" height="75.0" fill="#ff0000"/><rect x="2058" y="200.0" width="3" height="17.5" fill="#ff0000"/>
<rect x="2065" y="160.0" width="1" height="75.0" fill="#008000"/><rect x="2064" y="165.0" width="3" height="65.0" fill="#008000"/>
<rect x="2070" y="115.0" width="1" height="80.0" fill="#008000"/><rect x="2069" y="162.5" width="3" height="22.5" fill="#008000"/>
<rect x="2076" y="132.5" width="1" height="60.0" fill="#008000"/><rect x="2075" y="155.0" width="3" height="25.0" fill="#008000"/>
<rect x="2081" y="140.0" width="1" height="35.0" fill="#ff0000"/><rect x="2080" y="155.0" width="3" height="15.0" fill="#ff0000"/>
<rect x="2087" y="145.0" width="1" height="35.0" fill="#008000"/><rect x="2086" y="160.0" width="3" height="15.0" fill="#008000"/>
<rect x="2093" y="147.5" width="1" height="37.5" fill="#ff0000"/><rect x="2092" y="162.5" width="3" height="17.5" fill="#ff0000"/>
<rect x="2098" y="180.0" width="1" height="135.0" fill="#ff0000"/><rect x="2097" y="182.5" width="3" height="127.5" fill="#ff0000"/>
<rect x="2104" y="277.5" width="1" height="62.5" fill="#ff0000"/><rect x="2103" y="285.0" width="3" height="35.0" fill="#ff0000"/>
<rect x="2109" y="280.0" width="1" height="85.0" fill="#ff0000"/><rect x="2108" y="285.0" width="3" height="80.0" fill="#ff0000"/>
<rect x="2115" y="280.0" width="1" height="130.0" fill="#ff0000"/><rect x="2114" y="282.5" width="3" height="95.0" fill="#ff0000"/>
<rect x="2120" y="340.0" width="1" height="55.0" fill="#008000"/><rect x="2119" y="340.0" width="3" height="40.0" fill="#008000"/>
<rect x="2126" y="320.0" width="1" height="35.0" fill="#008000"/><rect x="2125" y="342.5" width="3" height="12.5" fill="#008000"/>
<rect x="2132" y="310.0" width="1" height="80.0" fill="#008000"/><rect x="2131" y="322.5" width="3" height="22.5" fill="#008000"/>
<rect x="2137" y="307.5" width="1" height="27.5" fill="#008000"/><rect x="2136" y="320.0" width="3" height="5.0" fill="#008000"/>
<rect x="2143" y="252.5" width="1" height="92.5" fill="#008000"/><rect x="2142" y="260.0" width="3" height="65.0" fill="#008000"/>
<rect x="2148" y="250.0" width="1" height="40.0" fill="#ff0000"/><rect x="2147" y="260.0" width="3" height="12.5" fill="#ff0000"/>
<rect x="2154" y="240.0" width="1" height="35.0" fill="#008000"/><rect x="2153" y="250.0" width="3" height="15.0" fill="#008000"/>
<rect x="2159" y="235.0" width="1" height="35.0" fill="#008000"/><rect x="2158" y="240.0" width="3" height="25.0" fill="#008000"/>
<rect x="2165" y="217.5" width="1" height="62.5" fill="#ff0000"/><rect x="2164" y="237.5" width="3" height="15.0" fill="#ff0000"/>
<rect x="2171" y="245.0" width="1" height="75.0" fill="#ff0000"/><rect x="2170" y="247.5" width="3" height="57.5" fill="#ff0000"/>
<rect x="2176" y="270.0" width="1" height="65.0" fill="#008000"/><rect x="2175" y="277.5" width="3" height="32.5" fill="#008000"/>
<rect x="2182" y="255.0" width="1" height="40.0" fill="#008000"/><rect x="2181" y="275.0" width="3" height="20.0" fill="#008000"/>
<rect x="2187" y="255.0" width="1" height="35.0" fill="#008000"/><rect x="2186" y="272.5" width="3" height="10.0" fill="#008000"/>
<rect x="2193" y="265.0" width="1" height="115.0" fill="#ff0000"/><rect x="2192" y="280.0" width="3" height="90.0" fill="#ff0000"/>
<rect x="2199" y="317.5" width="1" height="52.5" fill="#008000"/><rect x="2198" y="355.0" width="3" height="15.0" fill="#008000"/>
<rect x="2204" y="315.0" width="1" height="55.0" fill="#008000"/><rect x="2203" y="330.0" width="3" height="25.0" fill="#008000"/>
<rect x="2210" y="312.5" width="1" height="77.5" fill="#ff0000"/><rect x="2209" y="330.0" width="3" height="60.0" fill="#ff0000"/>
<rect x="2215" y="370.0" width="1" height="132.5" fill="#ff0000"/><rect x="2214" y="375.0" width="3" height="100.0" fill="#ff0000"/>
<rect x="2221" y="470.0" width="1" height="50.0" fill="#ff0000"/><rect x="2220" y="482.5" width="3" height="7.5" fill="#ff0000"/>
<rect x="2227" y="477.5" width="1" height="42.5" fill="#ff0000"/><rect x="2226" y="480.0" width="3" height="2.5" fill="#ff0000"/>
<rect x="2232" y="422.5" width="1" height="80.0" fill="#008000"/><rect x="2231" y="467.5" width="3" height="30.0" fill="#008000"/>
<rect x="2238" y="437.5" width="1" height="50.0" fill="#008000"/><rect x="2237" y="437.5" width="3" height="35.0" fill="#008000"/>
<rect x="2243" y="427.5" width="1" height="22.5" fill="#ff0000"/><rect x="2242" y="440.0" width="3" height="7.5" fill="#ff0000"/>
<rect x="2249" y="447.5" width="1" height="60.0" fill="#ff0000"/><rect x="2248" y="447.5" width="3" height="42.5" fill="#ff0000"/>
<rect x="2254" y="455.0" width="1" height="37.5" fill="#008000"/><rect x="2253" y="480.0" width="3" height="12.5" fill="#008000"/>
<rect x="2260" y="490.0" width="1" height="47.5" fill="#ff0000"/><rect x="2259" y="495.0" width="3" height="30.0" fill="#ff0000"/>
<rect x="2266" y="525.0" width="1" height="87.5" fill="#ff0000"/><rect x="2265" y="525.0" width="3" height="57.5" fill="#ff0000"/>
<rect x="2271" y="550.0" width="1" height="39.0" fill="#008000"/><rect x="2270" y="552.5" width="3" height="30.0" fill="#008000"/>
<rect x="2277" y="537.5" width="1" height="30.0" fill="#008000"/><rect x="2276" y="550.0" width="3" height="10.0" fill="#008000"/>
<rect x="2282" y="482.5" width="1" height="80.0" fill="#008000"/><rect x="2281" y="500.0" width="3" height="60.0" fill="#008000"/>
<rect x="2288" y="457.5" width="1" height="50.0" fill="#008000"/><rect x="2287" y="457.5" width="3" height="42.5" fill="#008000"/>
<rect x="2293" y="445.0" width="1" height="47.5" fill="#ff0000"/><rect x="2292" y="457.5" width="3" height="12.5" fill="#ff0000"/>
<rect x="2299" y="460.0" width="1" height="37.5" fill="#ff0000"/><rect x="2298" y="465.0" width="3" height="5.0" fill="#ff0000"/>
<rect x="2305" y="457.5" width="1" height="47.5" fill="#ff0000"/><rect x="2304" y="472.5" width="3" height="30.0" fill="#ff0000"/>
<rect x="2310" y="490.0" width="1" height="15.0" fill="#008000"/><rect x="2309" y="492.5" width="3" height="10.0" fill="#008000"/>
<rect x="2316" y="492.5" width="1" height="12.5" fill="#ff0000"/><rect x="2315" y="495.0" width="3" height="7.5" fill="#ff0000"/>
<rect x="2322" y="457.5" width="1" height="45.0" fill="#008000"/><rect x="2321" y="467.5" width="3" height="35.0" fill="#008000"/>
<rect x="2327" y="475.0" width="1" height="61.0" fill="#ff0000"/><rect x="2326" y="475.0" width="3" height="47.5" fill="#ff0000"/>
<rect x="2333" y="465.0" width="1" height="65.0" fill="#008000"/><rect x="2332" y="485.0" width="3" height="40.0" fill="#008000"/>
<rect x="2338" y="380.0" width="1" height="115.0" fill="#008000"/><rect x="2337" y="385.0" width="3" height="107.5" fill="#008000"/>
<rect x="2344" y="355.0" width="1" height="52.5" fill="#ff0000"/><rect x="2343" y="355.0" width="3" height="42.5" fill="#ff0000"/>
<rect x="2349" y="357.5" width="1" height="52.5" fill="#ff0000"/><rect x="2348" y="375.0" width="3" height="20.0" fill="#ff0000"/>
<rect x="2355" y="370.0" width="1" height="97.5" fill="#008000"/><rect x="2354" y="380.0" width="3" height="35.0" fill="#008000"/>
<rect x="2361" y="342.5" width="1" height="67.5" fill="#ff0000"/><rect x="2360" y="360.0" width="3" height="27.5" fill="#ff0000"/>
<rect x="2366" y="312.5" width="1" height="102.5" fill="#008000"/><rect x="2365" y="317.5" width="3" height="67.5" fill="#008000"/>
<rect x="2372" y="327.5" width="1" height="77.5" fill="#ff0000"/><rect x="2371" y="330.0" width="3" height="55.0" fill="#ff0000"/>
<rect x="2377" y="330.0" width="1" height="50.0" fill="#008000"/><rect x="2376" y="342.5" width="3" height="37.5" fill="#008000"/>
<rect x="2383" y="317.5" width="1" height="32.5" fill="#008000"/><rect x="2382" y="325.0" width="3" height="25.0" fill="#008000"/>
<rect x="2389" y="302.5" width="1" height="57.5" fill="#008000"/><rect x="2388" y="302.5" width="3" height="27.5" fill="#008000"/>
<rect x="2394" y="275.0" width="1" height="50.0" fill="#008000"/><rect x="2393" y="275.0" width="3" height="50.0" fill="#008000"/>
<rect x="2400" y="255.0" width="1" height="40.0" fill="#ff0000"/><rect x="2399" y="270.0" width="3" height="25.0" fill="#ff0000"/>
<rect x="2405" y="267.5" width="1" height="27.5" fill="#ff0000"/><rect x="2404" y="267.5" width="3" height="22.5" fill="#ff0000"/>
<rect x="2411" y="270.0" width="1" height="25.0" fill="#ff0000"/><rect x="2410" y="270.0" width="3" height="22.5" fill="#ff0000"/>
<rect x="2416" y="252.5" width="1" height="42.5" fill="#ff0000"/><rect x="2415" y="270.0" width="3" height="25.0" fill="#ff0000"/>
<rect x="2422" y="247.5" width="1" height="37.5" fill="#008000"/><rect x="2421" y="277.5" width="3" height="7.5" fill="#008000"/>
<rect x="2428" y="270.0" width="1" height="17.5" fill="#ff0000"/><rect x="2427" y="277.5" width="3" height="7.5" fill="#ff0000"/>
<rect x="2433" y="270.0" width="1" height="15.0" fill="#ff0000"/><rect x="2432" y="270.0" width="3" height="12.5" fill="#ff0000"/>
<rect x="2439" y="275.0" width="1" height="42.5" fill="#ff0000"/><rect x="2438" y="275.0" width="3" height="40.0" fill="#ff0000"/>
<rect x="2444" y="282.5" width="1" height="55.0" fill="#ff0000"/><rect x="2443" y="285.0" width="3" height="50.0" fill="#ff0000"/>
<rect x="2450" y="282.5" width="1" height="52.5" fill="#ff0000"/><rect x="2449" y="282.5" width="3" height="52.5" fill="#ff0000"/>
<rect x="2456" y="330.0" width="1" height="50.0" fill="#ff0000"/><rect x="2455" y="330.0" width="3" height="50.0" fill="#ff0000"/>
<rect x="2461" y="370.0" width="1" height="32.5" fill="#ff0000"/><rect x="2460" y="370.0" width="3" height="32.5" fill="#ff0000"/>
<rect x="2467" y="340.0" width="1" height="62.5" fill="#008000"/><rect x="2466" y="355.0" width="3" height="35.0" fill="#008000"/>
<rect x="2472" y="330.0" width="1" height="32.5" fill="#008000"/><rect x="2471" y="335.0" width="3" height="25.0" fill="#008000"/>
<rect x="2478" y="325.0" width="1" height="25.0" fill="#008000"/><rect x="2477" y="327.5" width="3" height="20.0" fill="#008000"/>
<rect x="2484" y="327.5" width="1" height="40.0" fill="#ff0000"/><rect x="2483" y="330.0" width="3" height="35.0" fill="#ff0000"/>
<rect x="2489" y="330.0" width="1" height="35.0" fill="#008000"/><rect x="2488" y="340.0" width="3" height="25.0" fill="#008000"/>
<rect x="2495" y="290.0" width="1" height="60.0" fill="#008000"/><rect x="2494" y="297.5" width="3" height="52.5" fill="#008000"/>
<rect x="2500" y="245.0" width="1" height="75.0" fill="#008000"/><rect x="2499" y="260.0" width="3" height="47.5" fill="#008000"/>
<rect x="2506" y="242.5" width="1" height="22.5" fill="#ff0000"/><rect x="2505" y="252.5" width="3" height="12.5" fill="#ff0000"/>
<rect x="2511" y="240.0" width="1" height="20.0" fill="#008000"/><rect x="2510" y="242.5" width="3" height="15.0" fill="#008000"/>
<rect x="2517" y="242.5" width="1" height="37.5" fill="#ff0000"/><rect x="2516" y="242.5" width="3" height="35.0" fill="#ff0000"/>
<rect x="2523" y="230.0" width="1" height="62.5" fill="#008000"/><rect x="2522" y="230.0" width="3" height="45.0" fill="#008000"/>
<rect x="2528" y="175.0" width="1" height="67.5" fill="#008000"/><rect x="2527" y="177.5" width="3" height="62.5" fill="#008000"/>
<rect x="2534" y="155.0" width="1" height="27.5" fill="#008000"/><rect x="2533" y="157.5" width="3" height="25.0" fill="#008000"/>
<rect x="2539" y="150.0" width="1" height="17.5" fill="#ff0000"/><rect x="2538" y="157.5" width="3" height="7.5" fill="#ff0000"/>
<rect x="2545" y="145.0" width="1" height="10.0" fill="#ff0000"/><rect x="2544" y="147.5" width="3" height="7.5" fill="#ff0000"/>
<rect x="2550" y="147.5" width="1" height="17.5" fill="#ff0000"/><rect x="2549" y="150.0" width="3" height="12.5" fill="#ff0000"/>
<rect x="2556" y="137.5" width="1" height="32.5" fill="#008000"/><rect x="2555" y="140.0" width="3" height="22.5" fill="#008000"/>
<rect x="2562" y="107.5" width="1" height="77.5" fill="#ff0000"/><rect x="2561" y="147.5" width="3" height="30.0" fill="#ff0000"/>
<rect x="2567" y="148.3" width="1" height="34.2" fill="#008000"/><rect x="2566" y="148.3" width="3" height="34.2" fill="#008000"/>
<rect x="2573" y="116.9" width="1" height="59.9" fill="#ff0000"/><rect x="2572" y="145.5" width="3" height="28.5" fill="#ff0000"/>
<rect x="2578" y="171.1" width="1" height="39.9" fill="#ff0000"/><rect x="2577" y="174.0" width="3" height="37.1" fill="#ff0000"/>
<rect x="2584" y="194.0" width="1" height="45.6" fill="#ff0000"/><rect x="2583" y="196.8" width="3" height="42.8" fill="#ff0000"/>
<rect x="2590" y="236.7" width="1" height="48.5" fill="#ff0000"/><rect x="2589" y="239.6" width="3" height="45.6" fill="#ff0000"/>
<rect x="2595" y="242.4" width="1" height="42.8" fill="#ff0000"/><rect x="2594" y="242.4" width="3" height="39.9" fill="#ff0000"/>
<rect x="2601" y="218.0" width="1" height="33.0" fill="#008000"/><rect x="2600" y="219.8" width="3" height="18.0" fill="#008000"/>
<rect x="2606" y="162.0" width="1" height="55.8" fill="#008000"/><rect x="2605" y="186.0" width="3" height="31.8" fill="#008000"/>
<rect x="2612" y="176.0" width="1" height="53.6" fill="#ff0000"/><rect x="2611" y="186.0" width="3" height="31.8" fill="#ff0000"/>
<rect x="2618" y="204.0" width="1" height="47.6" fill="#ff0000"/><rect x="2617" y="210.0" width="3" height="41.6" fill="#ff0000"/>
<rect x="2623" y="242.0" width="1" height="26.0" fill="#ff0000"/><rect x="2622" y="251.0" width="3" height="17.0" fill="#ff0000"/>
<rect x="2629" y="241.0" width="1" height="29.0" fill="#008000"/><rect x="2628" y="241.0" width="3" height="27.0" fill="#008000"/>
<rect x="2634" y="214.0" width="1" height="44.0" fill="#008000"/><rect x="2633" y="220.0" width="3" height="31.6" fill="#008000"/>
<rect x="2640" y="221.0" width="1" height="30.6" fill="#ff0000"/><rect x="2639" y="223.0" width="3" height="28.6" fill="#ff0000"/>
<rect x="2645" y="220.6" width="1" height="28.3" fill="#008000"/><rect x="2644" y="234.0" width="3" height="14.9" fill="#008000"/>
<rect x="2651" y="224.0" width="1" height="17.8" fill="#008000"/><rect x="2650" y="234.0" width="3" height="7.8" fill="#008000"/>
<rect x="2657" y="224.0" width="1" height="9.6" fill="#008000"/><rect x="2656" y="227.0" width="3" height="4.0" fill="#008000"/>
<rect x="2662" y="231.0" width="1" height="13.8" fill="#ff0000"/><rect x="2661" y="233.7" width="3" height="11.1" fill="#ff0000"/>
<rect x="2668" y="224.0" width="1" height="17.8" fill="#008000"/><rect x="2667" y="227.0" width="3" height="14.8" fill="#008000"/>
<rect x="2673" y="206.0" width="1" height="31.0" fill="#008000"/><rect x="2672" y="206.0" width="3" height="28.5" fill="#008000"/>
<rect x="2679" y="145.0" width="1" height="61.7" fill="#008000"/><rect x="2678" y="148.0" width="3" height="58.7" fill="#008000"/>
<rect x="2685" y="145.0" width="1" height="14.0" fill="#ff0000"/><rect x="2684" y="148.0" width="3" height="11.0" fill="#ff0000"/>
<rect x="2690" y="148.8" width="1" height="37.0" fill="#ff0000"/><rect x="2689" y="157.8" width="3" height="22.0" fill="#ff0000"/>
<polyline fill="none" stroke="#0cf2fa" stroke-width="1.1" stroke-linejoin="round" points="1947.5,219.0 1961.0,115.0 1967.5,200.0 1974.0,210.0 1977.5,202.5 1980.0,230.0 1982.5,300.0 1987.5,340.0 1995.0,366.0 2000.0,362.5 2006.0,332.5 2012.5,325.0 2021.5,321.0 2033.5,347.5 2044.0,325.0 2051.0,341.0 2061.0,333.5 2065.0,300.0 2069.0,180.0 2073.0,106.0 2078.5,142.5 2085.0,162.5 2091.0,172.5 2097.5,185.0 2102.5,230.0 2106.0,248.5 2111.5,234.0 2117.5,246.0 2123.5,235.0 2129.0,240.0 2137.5,251.5 2145.0,245.0 2152.5,262.5 2160.0,269.0 2166.0,250.0 2172.5,269.0 2180.0,280.0 2187.5,275.0 2194.0,285.0 2200.0,270.0 2206.5,285.0 2209.0,320.0 2212.5,355.0 2218.5,331.5 2224.0,342.5 2230.0,377.5 2235.0,355.0 2244.0,361.0 2252.5,356.0 2257.5,335.0 2262.5,302.5 2268.5,258.5 2274.0,307.5 2280.0,306.0 2290.0,284.0 2297.5,286.0 2310.0,282.5 2330.0,274.0 2342.5,260.0 2350.0,258.5 2360.0,270.0 2366.0,285.0 2374.0,320.0 2380.0,322.5 2387.5,329.0 2395.0,335.0 2401.0,339.0 2407.5,362.5 2413.5,366.0 2417.5,405.0 2420.0,428.0 2422.5,435.0 2427.5,460.0 2435.0,475.0 2440.0,492.5 2446.5,518.5 2452.5,518.5 2460.0,516.0 2467.5,512.5 2472.5,517.5 2479.0,526.0 2490.0,526.0 2497.5,516.5 2502.5,526.0 2514.0,521.0 2520.0,530.0 2530.0,527.5 2536.5,557.5 2545.0,556.0 2557.5,552.5 2561.0,570.0 2565.0,590.0 2575.4,595.5 2587.9,612.6 2598.2,599.5 2603.9,604.0 2608.4,576.6 2619.3,582.4 2642.1,584.1 2656.4,580.6 2670.6,579.5 2674.6,588.1 2682.0,577.8 2691.7,577.8"/></svg><div class="a" style="left:1800px;top:833px;width:1137px;height:14px;background:#f0f0f0"></div><div class="a" style="left:2924px;top:836px;width:0;height:0;border:4px solid transparent;border-left:5px solid #404040;border-right:0"></div><div class="a" style="left:2896px;top:833px;width:19px;height:14px;border:1px solid #989898;border-radius:2px;background:linear-gradient(#f4f4f4,#dcdcdc)"><div class="a" style="left:5px;top:3px;width:7px;height:7px;border-left:1px solid #555;border-right:1px solid #555"><div class="a" style="left:2px;top:0;width:1px;height:7px;background:#555"></div></div></div>
<div class="a" style="left:1711px;top:108px;width:236px;height:733px;border-radius:7px 7px 0 0;background:linear-gradient(#c3d3e8,#dbe5f2 36px,#dbe5f2);border:1px solid #7c8aa2;box-shadow:inset 0 0 0 1px #eef3fa"></div><svg style="left:1722px;top:121px" width="20" height="18" viewBox="0 0 20 18"><rect x=".5" y=".5" width="13" height="12" fill="#fff" stroke="#6a7a90"/><rect x="1" y="1" width="12" height="2.500" fill="#3a78c8"/><path d="M1 6h12M1 9h12M5 3v9M9 3v9" stroke="#b0b8c8"/><path d="M9 3v5h-3l4.500 5 4.500-5h-3v-5z" fill="#18b030" stroke="#087018" stroke-width=".700"/><path d="M14 10v6M11 13h6" stroke="#e01010" stroke-width="2"/></svg><div class="a nw" style="left:1746px;top:121px;width:22px;font-size:15px;color:#566378">Si-9</div><div class="a" style="left:0;top:113px;width:0;height:0"><div class="lk" style="left:1768.5px"><svg width="42" height="20" viewBox="0 0 42 20"><g fill="none" stroke="#1a1a1a"><g transform="rotate(-45 21 10)"><rect x="13" y="8" width="6.500" height="4" rx="2" stroke-width="1.500"/><rect x="22.500" y="8" width="6.500" height="4" rx="2" stroke-width="1.500"/></g><path d="M17.500 4.500l1 1.800M20.500 3.500v2M15 7l1.800 1M24.500 15.500l-1-1.800M21.500 16.500v-2M27 13l-1.800-1" stroke-width="1"/></g></svg></div><div class="wb" style="left:1815.5px"><div class="a" style="left:12px;top:11px;width:13px;height:5px;border:1px solid #6a7486;background:#fff;border-radius:1px"></div></div><div class="wb" style="left:1856.5px"><div class="a" style="left:12px;top:4px;width:13px;height:11px;border:1px solid #6a7486;background:#fff;border-radius:1px"></div><div class="a" style="left:16px;top:8px;width:5px;height:4px;border:1px solid #6a7486;background:#cfdbea"></div></div><div class="wb" style="left:1897.5px"><svg width="36" height="19" viewBox="0 0 36 19"><path d="M13 5l10 9M23 5l-10 9" stroke="#6a7486" stroke-width="4.600" stroke-linecap="round"/><path d="M13 5l10 9M23 5l-10 9" stroke="#fff" stroke-width="2.600" stroke-linecap="round"/></svg></div></div><div class="a" style="left:1720px;top:145px;width:217px;height:687px;background:#f0f0f0"></div><div class="a nw" style="left:1722px;top:146px;font-size:14.3px;color:#0a28e8">Спред: 1</div><div class="a nw" style="left:1800px;top:146px;font-size:14.3px;color:#0a28e8">Посл.: 59 436</div><div class="a" style="left:1720px;top:169px;width:198px;height:487px;background:#fff;overflow:hidden"><div class="a" style="left:0;top:0;width:198px;height:19px;background:linear-gradient(#fff,#eff0f4);border-bottom:1px solid #dcdee4"></div><div class="a nw" style="left:8px;top:2px;font-weight:bold;font-size:14.5px">Цена</div><div class="a nw" style="left:55px;top:2px;font-weight:bold;font-size:14.5px">Объем</div><div class="a" style="left:52px;top:0;width:1px;height:19px;background:#e0e2ea"></div><div class="a" style="left:109px;top:0;width:1px;height:19px;background:#e0e2ea"></div><div class="a" style="left:0;top:19px;width:109px;height:20px;background:#ffaaaa"></div><div class="a nw" style="left:1px;top:21px;font-weight:bold;font-size:14.5px">59 445</div><div class="a nw" style="left:53px;top:21px;width:48.500px;text-align:right;font-weight:bold;font-size:14.5px">123</div><div class="a" style="left:0;top:39px;width:109px;height:20px;background:#ffaaaa"></div><div class="a nw" style="left:1px;top:41px;font-weight:bold;font-size:14.5px">59 444</div><div class="a nw" style="left:53px;top:41px;width:48.500px;text-align:right;font-weight:bold;font-size:14.5px">100</div><div class="a" style="left:0;top:59px;width:109px;height:20px;background:#ffaaaa"></div><div class="a nw" style="left:1px;top:61px;font-weight:bold;font-size:14.5px">59 443</div><div class="a nw" style="left:53px;top:61px;width:48.500px;text-align:right;font-weight:bold;font-size:14.5px">14</div><div class="a" style="left:0;top:79px;width:109px;height:20px;background:#ffaaaa"></div><div class="a nw" style="left:1px;top:81px;font-weight:bold;font-size:14.5px">59 442</div><div class="a nw" style="left:53px;top:81px;width:48.500px;text-align:right;font-weight:bold;font-size:14.5px">18</div><div class="a" style="left:0;top:99px;width:109px;height:20px;background:#ffaaaa"></div><div class="a nw" style="left:1px;top:101px;font-weight:bold;font-size:14.5px">59 441</div><div class="a nw" style="left:53px;top:101px;width:48.500px;text-align:right;font-weight:bold;font-size:14.5px">19</div><div class="a" style="left:0;top:119px;width:109px;height:20px;background:#ffaaaa"></div><div class="a nw" style="left:1px;top:121px;font-weight:bold;font-size:14.5px">59 440</div><div class="a nw" style="left:53px;top:121px;width:48.500px;text-align:right;font-weight:bold;font-size:14.5px">220</div><div class="a" style="left:0;top:139px;width:109px;height:20px;background:#ffaaaa"></div><div class="a nw" style="left:1px;top:141px;font-weight:bold;font-size:14.5px">59 439</div><div class="a nw" style="left:53px;top:141px;width:48.500px;text-align:right;font-weight:bold;font-size:14.5px">34</div><div class="a" style="left:0;top:159px;width:109px;height:20px;background:#ffaaaa"></div><div class="a nw" style="left:1px;top:161px;font-weight:bold;font-size:14.5px">59 438</div><div class="a nw" style="left:53px;top:161px;width:48.500px;text-align:right;font-weight:bold;font-size:14.5px">15</div><div class="a" style="left:0;top:179px;width:109px;height:20px;background:#ffaaaa"></div><div class="a nw" style="left:1px;top:181px;font-weight:bold;font-size:14.5px">59 437</div><div class="a nw" style="left:53px;top:181px;width:48.500px;text-align:right;font-weight:bold;font-size:14.5px">16</div><div class="a" style="left:0;top:199px;width:109px;height:20px;background:#ffaaaa"></div><div class="a nw" style="left:1px;top:201px;font-weight:bold;font-size:14.5px">59 436</div><div class="a nw" style="left:53px;top:201px;width:48.500px;text-align:right;font-weight:bold;font-size:14.5px">33</div><div class="a" style="left:0;top:219px;width:109px;height:20px;background:#ffaaaa"></div><div class="a nw" style="left:1px;top:221px;font-weight:bold;font-size:14.5px">59 435</div><div class="a nw" style="left:53px;top:221px;width:48.500px;text-align:right;font-weight:bold;font-size:14.5px">5</div><div class="a" style="left:0;top:239px;width:109px;height:20px;background:#a8e384"></div><div class="a nw" style="left:1px;top:241px;font-weight:bold;font-size:14.5px">59 434</div><div class="a nw" style="left:53px;top:241px;width:48.500px;text-align:right;font-weight:bold;font-size:14.5px">1</div><div class="a" style="left:0;top:259px;width:109px;height:20px;background:#a8e384"></div><div class="a nw" style="left:1px;top:261px;font-weight:bold;font-size:14.5px">59 433</div><div class="a nw" style="left:53px;top:261px;width:48.500px;text-align:right;font-weight:bold;font-size:14.5px">19</div><div class="a" style="left:0;top:279px;width:109px;height:20px;background:#a8e384"></div><div class="a nw" style="left:1px;top:281px;font-weight:bold;font-size:14.5px">59 432</div><div class="a nw" style="left:53px;top:281px;width:48.500px;text-align:right;font-weight:bold;font-size:14.5px">30</div><div class="a" style="left:0;top:299px;width:109px;height:20px;background:#a8e384"></div><div class="a nw" style="left:1px;top:301px;font-weight:bold;font-size:14.5px">59 431</div><div class="a nw" style="left:53px;top:301px;width:48.500px;text-align:right;font-weight:bold;font-size:14.5px">30</div><div class="a" style="left:0;top:319px;width:109px;height:20px;background:#a8e384"></div><div class="a nw" style="left:1px;top:321px;font-weight:bold;font-size:14.5px">59 430</div><div class="a nw" style="left:53px;top:321px;width:48.500px;text-align:right;font-weight:bold;font-size:14.5px">66</div><div class="a" style="left:0;top:339px;width:109px;height:20px;background:#a8e384"></div><div class="a nw" style="left:1px;top:341px;font-weight:bold;font-size:14.5px">59 429</div><div class="a nw" style="left:53px;top:341px;width:48.500px;text-align:right;font-weight:bold;font-size:14.5px">98</div><div class="a" style="left:0;top:359px;width:109px;height:20px;background:#a8e384"></div><div class="a nw" style="left:1px;top:361px;font-weight:bold;font-size:14.5px">59 428</div><div class="a nw" style="left:53px;top:361px;width:48.500px;text-align:right;font-weight:bold;font-size:14.5px">68</div><div class="a" style="left:0;top:379px;width:109px;height:20px;background:#a8e384"></div><div class="a nw" style="left:1px;top:381px;font-weight:bold;font-size:14.5px">59 427</div><div class="a nw" style="left:53px;top:381px;width:48.500px;text-align:right;font-weight:bold;font-size:14.5px">23</div><div class="a" style="left:0;top:399px;width:109px;height:20px;background:#a8e384"></div><div class="a nw" style="left:1px;top:401px;font-weight:bold;font-size:14.5px">59 426</div><div class="a nw" style="left:53px;top:401px;width:48.500px;text-align:right;font-weight:bold;font-size:14.5px">27</div><div class="a" style="left:0;top:419px;width:109px;height:20px;background:#a8e384"></div><div class="a nw" style="left:1px;top:421px;font-weight:bold;font-size:14.5px">59 425</div><div class="a nw" style="left:53px;top:421px;width:48.500px;text-align:right;font-weight:bold;font-size:14.5px">74</div><div class="a" style="left:0;top:439px;width:109px;height:20px;background:#a8e384"></div><div class="a nw" style="left:1px;top:441px;font-weight:bold;font-size:14.5px">59 424</div><div class="a nw" style="left:53px;top:441px;width:48.500px;text-align:right;font-weight:bold;font-size:14.5px">130</div><div class="a" style="left:0;top:459px;width:109px;height:20px;background:#a8e384"></div><div class="a nw" style="left:1px;top:461px;font-weight:bold;font-size:14.5px">59 423</div><div class="a nw" style="left:53px;top:461px;width:48.500px;text-align:right;font-weight:bold;font-size:14.5px">206</div><div class="a" style="left:0;top:479px;width:109px;height:20px;background:#a8e384"></div><div class="a nw" style="left:1px;top:481px;font-weight:bold;font-size:14.5px">59 422</div><div class="a nw" style="left:53px;top:481px;width:48.500px;text-align:right;font-weight:bold;font-size:14.5px">594</div><div class="a" style="left:52px;top:19px;width:1px;height:467px;background:rgba(255,255,255,.55)"></div><div class="a" style="left:0;top:238px;width:198px;height:2px;background:#1a1a2a"></div></div><div class="a" style="left:1918px;top:169px;width:19px;height:486px;background:#f0f0f0"></div><div class="a" style="left:1923px;top:175px;width:0;height:0;border:4px solid transparent;border-bottom:5px solid #404040;border-top:0"></div><div class="a" style="left:1923px;top:643px;width:0;height:0;border:4px solid transparent;border-top:5px solid #404040;border-bottom:0"></div><div class="a" style="left:1919px;top:406px;width:17px;height:18px;border:1px solid #989898;border-radius:2px;background:linear-gradient(90deg,#f4f4f4,#dcdcdc)"><div class="a" style="left:4px;top:4px;width:7px;height:7px;border-top:1px solid #555;border-bottom:1px solid #555"><div class="a" style="left:0;top:2px;width:7px;height:1px;background:#555"></div></div></div><div class="a nw" style="left:1763px;top:658px;font-size:14.7px;color:#1a6a2a">30 873</div><div class="a nw" style="left:1810px;top:658px;font-size:14.7px">Лотов</div><div class="a nw" style="left:1860px;top:658px;font-size:14.7px;color:#ee1010">50 592</div><div class="a nw" style="left:1721px;top:684px;font-size:14.7px">P</div><div class="a" style="left:1737px;top:681px;width:83px;height:21px;background:#fff;border:1px solid #e2e3ea;border-top-color:#abadb3"></div><div class="a nw" style="left:1823px;top:684px;font-size:14.7px">Q</div><div class="a" style="left:1840px;top:681px;width:69px;height:21px;background:#fff;border:1px solid #e2e3ea;border-top-color:#abadb3"></div><div class="a nw" style="left:1721px;top:709px;font-size:14.7px">A</div><div class="a" style="left:1737px;top:706px;width:153px;height:23px;background:#fff;border:1px solid #e2e3ea;border-top-color:#abadb3"></div><div class="a nw" style="left:1744px;top:709px;font-size:14.7px">4102WKZ</div><div class="a" style="left:1873px;top:715px;width:0;height:0;border:5px solid transparent;border-top:5px solid #000;border-bottom:0"></div><div class="a" style="left:1724px;top:735px;width:16px;height:16px;border-radius:2.500px;background:#a0a0a0"></div><div class="a" style="left:1747px;top:735px;width:16px;height:16px;border-radius:2.500px;background:#a0a0a0"></div><div class="a" style="left:1770px;top:735px;width:16px;height:16px;border-radius:2.500px;background:#a0a0a0"></div><svg style="left:1770px;top:735px" width="16" height="16"><path d="M9.500 3v8M11.500 3v8M9.500 11h3.500v2h-3.500M7 9v1M7 12v1M5 13h1" stroke="#f0f0f0" fill="none"/></svg><div class="a" style="left:1793px;top:735px;width:16px;height:16px;border-radius:2.500px;background:#a0a0a0"></div><svg style="left:1793px;top:735px" width="16" height="16"><path d="M4.500 2v5M6.500 4v3M9.500 2v5M11.500 4v5M4 9h2v2M7 11h5v2h-4M4 13v1" stroke="#f0f0f0" fill="none"/></svg><div class="a" style="left:1816px;top:735px;width:16px;height:16px;border-radius:2.500px;background:#a0a0a0"></div><div class="a" style="left:1839px;top:735px;width:16px;height:16px;border-radius:2.500px;background:#a0a0a0"></div><div class="a" style="left:1724px;top:759px;width:16px;height:16px;border-radius:2.500px;background:#ffc0c0;border:1px solid #8e8e8e"></div><svg style="left:1724px;top:759px" width="16" height="16"><path d="M1.500 1.500l6 8h-6z" fill="#90e890"/><path d="M8.500 3v7l-1 1.500 1.500 2h3l1-1.500v-3h-2.500v-6z" fill="#fff" stroke="#444" stroke-width=".900"/></svg><svg style="left:1726px;top:767px" width="7" height="7"><path d="M1 1l4.500 4.500M5.500 1l-4.500 4.500" stroke="#f00000" stroke-width="1.700"/></svg><div class="a" style="left:1747px;top:759px;width:16px;height:16px;border-radius:2.500px;background:#90f090;border:1px solid #8e8e8e"></div><div class="a nw" style="left:1752px;top:760px;font-size:11.500px;font-weight:bold;color:#585858">B</div><svg style="left:1749px;top:767px" width="7" height="7"><path d="M1 1l4.500 4.500M5.500 1l-4.500 4.500" stroke="#f00000" stroke-width="1.700"/></svg><div class="a" style="left:1770px;top:759px;width:16px;height:16px;border-radius:2.500px;background:#ffc0c0;border:1px solid #8e8e8e"></div><div class="a nw" style="left:1775px;top:760px;font-size:11.500px;font-weight:bold;color:#585858">S</div><svg style="left:1772px;top:767px" width="7" height="7"><path d="M1 1l4.500 4.500M5.500 1l-4.500 4.500" stroke="#f00000" stroke-width="1.700"/></svg><div class="a nw" style="left:1721px;top:783px;font-size:14.7px">POS.</div><div class="a nw" style="left:1759px;top:781px;width:82px;height:21px;border:1px solid #e8e8e8;border-top:2px solid #767676;border-left:2px solid #767676;background:#f0f0f0;text-align:right;padding:1px 1px 0 0;font-size:14.7px">0</div><div class="a" style="left:1847px;top:783px;width:16px;height:16px;border-radius:2.500px;background:#a0a0a0"></div><svg style="left:1847px;top:783px" width="16" height="16"><path d="M8 8h1M4 13h1M12 13h1" stroke="#f0f0f0" fill="none"/></svg><div class="a" style="left:1870px;top:783px;width:16px;height:16px;border-radius:2.500px;background:#a0a0a0"></div><div class="a nw" style="left:1721px;top:808px;font-size:14.7px">C</div><div class="a" style="left:1737px;top:806px;width:153px;height:23px;background:#fff;border:1px solid #e2e3ea;border-top-color:#abadb3"></div><div class="a nw" style="left:1744px;top:809px;font-size:14.7px"></div><div class="a" style="left:1873px;top:815px;width:0;height:0;border:5px solid transparent;border-top:5px solid #000;border-bottom:0"></div>
<div class="a" style="left:257px;top:65px;width:223px;height:716px;border-radius:7px;background:linear-gradient(#4a5161 0,#414857 40px,#2c3445 200px,#212939 100%);border:1px solid #1c2028;box-shadow:inset 0 0 0 1px #8d97a8,0 0 0 1px rgba(30,34,44,.6)"></div><div class="a" style="left:286px;top:70px;width:62px;height:26px;border-radius:10px;background:radial-gradient(ellipse at center,#8e97a8 0%,#7a8394 45%,rgba(67,74,88,0) 100%)"></div><svg style="left:266px;top:72px" width="20" height="20" viewBox="0 0 20 20"><rect x="1" y="0" width="18" height="15" fill="#fff" stroke="#aab"/><rect x="1" y="0" width="18" height="3" fill="#58a0e8"/><path d="M1 6h18M1 9h18M1 12h18M7 3v12M13 3v12" stroke="#c0c4cc" stroke-width="1"/><path d="M2 11l4-2 4 2 4-2 4 2v5l-4 2-4-2-4 2z" fill="#dfe3ea" stroke="#555" stroke-width=".800"/></svg><div class="a nw" style="left:291px;top:73px;font-size:15px;color:#14143c">Сделк...</div><div class="a" style="left:344px;top:65px;width:128px;height:24px;border:1px solid #98a2b2;border-top:0;border-radius:0 0 6px 6px;background:linear-gradient(#565e6e,#3a414e)"></div><div class="a" style="left:379px;top:66px;width:1px;height:22px;background:#98a2b2"></div><div class="a" style="left:412px;top:66px;width:1px;height:22px;background:#98a2b2"></div><div class="a" style="left:355px;top:79px;width:15px;height:4px;background:#fff;box-shadow:0 0 1px #222"></div><div class="a" style="left:387px;top:71px;width:16px;height:12px;border:3px solid #fff;border-top-width:3px;box-shadow:0 0 1px #222"></div><svg style="left:433px;top:70px" width="16" height="14" viewBox="0 0 16 14"><path d="M2 1.500l12 11M14 1.500l-12 11" stroke="#fff" stroke-width="3.400"/></svg><div class="a" style="left:265px;top:99px;width:207px;height:673px;background:#fff;box-shadow:0 0 0 1px #9aa4b4"></div><div class="a" style="left:265px;top:99px;width:186px;height:20px;background:linear-gradient(#fff,#f0f1f5);border-bottom:1px solid #d8dae0"></div><div class="a" style="left:316px;top:99px;width:1px;height:20px;background:#e0e2ea"></div><div class="a" style="left:350px;top:99px;width:1px;height:20px;background:#e0e2ea"></div><div class="a" style="left:396px;top:99px;width:1px;height:20px;background:#e0e2ea"></div><div class="a" style="left:451px;top:99px;width:1px;height:20px;background:#e0e2ea"></div><div class="a nw" style="left:274px;top:101px;font-weight:bold;font-size:14.5px">Цена</div><svg style="left:320px;top:104px" width="12" height="12" viewBox="0 0 12 12"><path d="M0 1h8l-4 4z" fill="#c8a060"/><path d="M2 6l3 3 5-6" stroke="#18a040" stroke-width="2.200" fill="none"/></svg><svg style="left:335px;top:104px" width="13" height="12" viewBox="0 0 13 12"><path d="M1 7l2.500-6 2.500 6M2 5h3" stroke="#8090b0" stroke-width="1.200" fill="none"/><path d="M8 2v3" stroke="#d04040" stroke-width="1"/><path d="M4 7l3 3 5-6" stroke="#18a040" stroke-width="2.200" fill="none"/></svg><div class="a nw" style="left:351px;top:101px;font-weight:bold;font-size:14.5px">Опе</div><svg style="left:381px;top:104px" width="13" height="12" viewBox="0 0 13 12"><path d="M1 7l2.500-6 2.500 6M2 5h3" stroke="#8090b0" stroke-width="1.200" fill="none"/><path d="M8 2v3" stroke="#d04040" stroke-width="1"/><path d="M4 7l3 3 5-6" stroke="#18a040" stroke-width="2.200" fill="none"/></svg><div class="a nw" style="left:397px;top:101px;width:54px;font-weight:bold;font-size:14.5px">Открыт</div><div class="a" style="left:265px;top:120px;width:186px;height:631px;overflow:hidden"><div class="a" style="left:86px;top:-9px;width:45px;height:20px;background:#1ebe1e"></div><div class="a nw" style="left:3px;top:-7px;font-weight:bold;font-size:14.5px">59 435</div><div class="a nw" style="left:51px;top:-7px;width:35px;text-align:center;padding-left:3px;font-weight:bold;font-size:14.5px">14</div><div class="a nw" style="left:91px;top:-7px;width:40px;font-size:14.5px">Купля</div><div class="a nw" style="left:137px;top:-7px;width:48px;font-weight:bold;font-size:14.5px">3 389 4</div><div class="a" style="left:86px;top:11px;width:45px;height:20px;background:#ff0808"></div><div class="a nw" style="left:3px;top:13px;font-weight:bold;font-size:14.5px">59 433</div><div class="a nw" style="left:51px;top:13px;width:35px;text-align:center;padding-left:3px;font-weight:bold;font-size:14.5px">21</div><div class="a nw" style="left:87px;top:13px;width:44px;font-size:14.5px">Продаж</div><div class="a nw" style="left:137px;top:13px;width:48px;font-weight:bold;font-size:14.5px">3 389 4</div><div class="a" style="left:86px;top:31px;width:45px;height:20px;background:#1ebe1e"></div><div class="a nw" style="left:3px;top:33px;font-weight:bold;font-size:14.5px">59 439</div><div class="a nw" style="left:51px;top:33px;width:35px;text-align:center;padding-left:3px;font-weight:bold;font-size:14.5px">21</div><div class="a nw" style="left:91px;top:33px;width:40px;font-size:14.5px">Купля</div><div class="a nw" style="left:137px;top:33px;width:48px;font-weight:bold;font-size:14.5px">3 389 3</div><div class="a" style="left:86px;top:51px;width:45px;height:20px;background:#1ebe1e"></div><div class="a nw" style="left:3px;top:53px;font-weight:bold;font-size:14.5px">59 439</div><div class="a nw" style="left:51px;top:53px;width:35px;text-align:center;padding-left:3px;font-weight:bold;font-size:14.5px">22</div><div class="a nw" style="left:91px;top:53px;width:40px;font-size:14.5px">Купля</div><div class="a nw" style="left:137px;top:53px;width:48px;font-weight:bold;font-size:14.5px">3 389 4</div><div class="a" style="left:86px;top:71px;width:45px;height:20px;background:#1ebe1e"></div><div class="a nw" style="left:3px;top:73px;font-weight:bold;font-size:14.5px">59 440</div><div class="a nw" style="left:51px;top:73px;width:35px;text-align:center;padding-left:3px;font-weight:bold;font-size:14.5px">23</div><div class="a nw" style="left:91px;top:73px;width:40px;font-size:14.5px">Купля</div><div class="a nw" style="left:137px;top:73px;width:48px;font-weight:bold;font-size:14.5px">3 389 3</div><div class="a" style="left:52px;top:91px;width:33px;height:20px;background:#80ff80"></div><div class="a" style="left:86px;top:91px;width:45px;height:20px;background:#1ebe1e"></div><div class="a nw" style="left:3px;top:93px;font-weight:bold;font-size:14.5px">59 440</div><div class="a nw" style="left:51px;top:93px;width:35px;text-align:center;padding-left:3px;font-weight:bold;font-size:14.5px">60</div><div class="a nw" style="left:91px;top:93px;width:40px;font-size:14.5px">Купля</div><div class="a nw" style="left:137px;top:93px;width:48px;font-weight:bold;font-size:14.5px">3 389 5</div><div class="a" style="left:86px;top:111px;width:45px;height:20px;background:#1ebe1e"></div><div class="a nw" style="left:3px;top:113px;font-weight:bold;font-size:14.5px">59 441</div><div class="a nw" style="left:51px;top:113px;width:35px;text-align:center;padding-left:3px;font-weight:bold;font-size:14.5px">20</div><div class="a nw" style="left:91px;top:113px;width:40px;font-size:14.5px">Купля</div><div class="a nw" style="left:137px;top:113px;width:48px;font-weight:bold;font-size:14.5px">3 389 5</div><div class="a" style="left:52px;top:131px;width:33px;height:20px;background:#80ff80"></div><div class="a" style="left:86px;top:131px;width:45px;height:20px;background:#1ebe1e"></div><div class="a nw" style="left:3px;top:133px;font-weight:bold;font-size:14.5px">59 442</div><div class="a nw" style="left:51px;top:133px;width:35px;text-align:center;padding-left:3px;font-weight:bold;font-size:14.5px">75</div><div class="a nw" style="left:91px;top:133px;width:40px;font-size:14.5px">Купля</div><div class="a nw" style="left:137px;top:133px;width:48px;font-weight:bold;font-size:14.5px">3 389 5</div><div class="a" style="left:52px;top:151px;width:33px;height:20px;background:#ff8a10"></div><div class="a" style="left:86px;top:151px;width:45px;height:20px;background:#1ebe1e"></div><div class="a nw" style="left:3px;top:153px;font-weight:bold;font-size:14.5px">59 443</div><div class="a nw" style="left:51px;top:153px;width:35px;text-align:center;padding-left:3px;font-weight:bold;font-size:14.5px">40</div><div class="a nw" style="left:91px;top:153px;width:40px;font-size:14.5px">Купля</div><div class="a nw" style="left:137px;top:153px;width:48px;font-weight:bold;font-size:14.5px">3 389 5</div><div class="a" style="left:86px;top:171px;width:45px;height:20px;background:#ff0808"></div><div class="a nw" style="left:3px;top:173px;font-weight:bold;font-size:14.5px">59 442</div><div class="a nw" style="left:51px;top:173px;width:35px;text-align:center;padding-left:3px;font-weight:bold;font-size:14.5px">28</div><div class="a nw" style="left:87px;top:173px;width:44px;font-size:14.5px">Продаж</div><div class="a nw" style="left:137px;top:173px;width:48px;font-weight:bold;font-size:14.5px">3 389 5</div><div class="a" style="left:52px;top:191px;width:33px;height:20px;background:#ff8a10"></div><div class="a" style="left:86px;top:191px;width:45px;height:20px;background:#ff0808"></div><div class="a nw" style="left:3px;top:193px;font-weight:bold;font-size:14.5px">59 442</div><div class="a nw" style="left:51px;top:193px;width:35px;text-align:center;padding-left:3px;font-weight:bold;font-size:14.5px">40</div><div class="a nw" style="left:87px;top:193px;width:44px;font-size:14.5px">Продаж</div><div class="a nw" style="left:137px;top:193px;width:48px;font-weight:bold;font-size:14.5px">3 389 6</div><div class="a" style="left:52px;top:211px;width:33px;height:20px;background:#ff8a10"></div><div class="a" style="left:86px;top:211px;width:45px;height:20px;background:#1ebe1e"></div><div class="a nw" style="left:3px;top:213px;font-weight:bold;font-size:14.5px">59 441</div><div class="a nw" style="left:51px;top:213px;width:35px;text-align:center;padding-left:3px;font-weight:bold;font-size:14.5px">30</div><div class="a nw" style="left:91px;top:213px;width:40px;font-size:14.5px">Купля</div><div class="a nw" style="left:137px;top:213px;width:48px;font-weight:bold;font-size:14.5px">3 389 6</div><div class="a" style="left:52px;top:231px;width:33px;height:20px;background:#ff8a10"></div><div class="a" style="left:86px;top:231px;width:45px;height:20px;background:#1ebe1e"></div><div class="a nw" style="left:3px;top:233px;font-weight:bold;font-size:14.5px">59 442</div><div class="a nw" style="left:51px;top:233px;width:35px;text-align:center;padding-left:3px;font-weight:bold;font-size:14.5px">30</div><div class="a nw" style="left:91px;top:233px;width:40px;font-size:14.5px">Купля</div><div class="a nw" style="left:137px;top:233px;width:48px;font-weight:bold;font-size:14.5px">3 389 7</div><div class="a" style="left:86px;top:251px;width:45px;height:20px;background:#1ebe1e"></div><div class="a nw" style="left:3px;top:253px;font-weight:bold;font-size:14.5px">59 442</div><div class="a nw" style="left:51px;top:253px;width:35px;text-align:center;padding-left:3px;font-weight:bold;font-size:14.5px">12</div><div class="a nw" style="left:91px;top:253px;width:40px;font-size:14.5px">Купля</div><div class="a nw" style="left:137px;top:253px;width:48px;font-weight:bold;font-size:14.5px">3 389 7</div><div class="a" style="left:86px;top:271px;width:45px;height:20px;background:#1ebe1e"></div><div class="a nw" style="left:3px;top:273px;font-weight:bold;font-size:14.5px">59 442</div><div class="a nw" style="left:51px;top:273px;width:35px;text-align:center;padding-left:3px;font-weight:bold;font-size:14.5px">27</div><div class="a nw" style="left:91px;top:273px;width:40px;font-size:14.5px">Купля</div><div class="a nw" style="left:137px;top:273px;width:48px;font-weight:bold;font-size:14.5px">3 389 8</div><div class="a" style="left:86px;top:291px;width:45px;height:20px;background:#1ebe1e"></div><div class="a nw" style="left:3px;top:293px;font-weight:bold;font-size:14.5px">59 442</div><div class="a nw" style="left:51px;top:293px;width:35px;text-align:center;padding-left:3px;font-weight:bold;font-size:14.5px">12</div><div class="a nw" style="left:91px;top:293px;width:40px;font-size:14.5px">Купля</div><div class="a nw" style="left:137px;top:293px;width:48px;font-weight:bold;font-size:14.5px">3 389 8</div><div class="a" style="left:86px;top:311px;width:45px;height:20px;background:#1ebe1e"></div><div class="a nw" style="left:3px;top:313px;font-weight:bold;font-size:14.5px">59 443</div><div class="a nw" style="left:51px;top:313px;width:35px;text-align:center;padding-left:3px;font-weight:bold;font-size:14.5px">25</div><div class="a nw" style="left:91px;top:313px;width:40px;font-size:14.5px">Купля</div><div class="a nw" style="left:137px;top:313px;width:48px;font-weight:bold;font-size:14.5px">3 389 9</div><div class="a" style="left:86px;top:331px;width:45px;height:20px;background:#1ebe1e"></div><div class="a nw" style="left:3px;top:333px;font-weight:bold;font-size:14.5px">59 445</div><div class="a nw" style="left:51px;top:333px;width:35px;text-align:center;padding-left:3px;font-weight:bold;font-size:14.5px">22</div><div class="a nw" style="left:91px;top:333px;width:40px;font-size:14.5px">Купля</div><div class="a nw" style="left:137px;top:333px;width:48px;font-weight:bold;font-size:14.5px">3 389 9</div><div class="a" style="left:86px;top:351px;width:45px;height:20px;background:#ff0808"></div><div class="a nw" style="left:3px;top:353px;font-weight:bold;font-size:14.5px">59 442</div><div class="a nw" style="left:51px;top:353px;width:35px;text-align:center;padding-left:3px;font-weight:bold;font-size:14.5px">24</div><div class="a nw" style="left:87px;top:353px;width:44px;font-size:14.5px">Продаж</div><div class="a nw" style="left:137px;top:353px;width:48px;font-weight:bold;font-size:14.5px">3 389 8</div><div class="a" style="left:52px;top:371px;width:33px;height:20px;background:#ff8a10"></div><div class="a" style="left:86px;top:371px;width:45px;height:20px;background:#1ebe1e"></div><div class="a nw" style="left:3px;top:373px;font-weight:bold;font-size:14.5px">59 444</div><div class="a nw" style="left:51px;top:373px;width:35px;text-align:center;padding-left:3px;font-weight:bold;font-size:14.5px">50</div><div class="a nw" style="left:91px;top:373px;width:40px;font-size:14.5px">Купля</div><div class="a nw" style="left:137px;top:373px;width:48px;font-weight:bold;font-size:14.5px">3 389 9</div><div class="a" style="left:86px;top:391px;width:45px;height:20px;background:#1ebe1e"></div><div class="a nw" style="left:3px;top:393px;font-weight:bold;font-size:14.5px">59 444</div><div class="a nw" style="left:51px;top:393px;width:35px;text-align:center;padding-left:3px;font-weight:bold;font-size:14.5px">12</div><div class="a nw" style="left:91px;top:393px;width:40px;font-size:14.5px">Купля</div><div class="a nw" style="left:137px;top:393px;width:48px;font-weight:bold;font-size:14.5px">3 389 9</div><div class="a" style="left:86px;top:411px;width:45px;height:20px;background:#1ebe1e"></div><div class="a nw" style="left:3px;top:413px;font-weight:bold;font-size:14.5px">59 445</div><div class="a nw" style="left:51px;top:413px;width:35px;text-align:center;padding-left:3px;font-weight:bold;font-size:14.5px">20</div><div class="a nw" style="left:91px;top:413px;width:40px;font-size:14.5px">Купля</div><div class="a nw" style="left:137px;top:413px;width:48px;font-weight:bold;font-size:14.5px">3 389 9</div><div class="a" style="left:52px;top:431px;width:33px;height:20px;background:#ff8a10"></div><div class="a" style="left:86px;top:431px;width:45px;height:20px;background:#ff0808"></div><div class="a nw" style="left:3px;top:433px;font-weight:bold;font-size:14.5px">59 445</div><div class="a nw" style="left:51px;top:433px;width:35px;text-align:center;padding-left:3px;font-weight:bold;font-size:14.5px">41</div><div class="a nw" style="left:87px;top:433px;width:44px;font-size:14.5px">Продаж</div><div class="a nw" style="left:137px;top:433px;width:48px;font-weight:bold;font-size:14.5px">3 390 0</div><div class="a" style="left:52px;top:451px;width:33px;height:20px;background:#80ff80"></div><div class="a" style="left:86px;top:451px;width:45px;height:20px;background:#ff0808"></div><div class="a nw" style="left:3px;top:453px;font-weight:bold;font-size:14.5px">59 445</div><div class="a nw" style="left:51px;top:453px;width:35px;text-align:center;padding-left:3px;font-weight:bold;font-size:14.5px">67</div><div class="a nw" style="left:87px;top:453px;width:44px;font-size:14.5px">Продаж</div><div class="a nw" style="left:137px;top:453px;width:48px;font-weight:bold;font-size:14.5px">3 390 0</div><div class="a" style="left:86px;top:471px;width:45px;height:20px;background:#1ebe1e"></div><div class="a nw" style="left:3px;top:473px;font-weight:bold;font-size:14.5px">59 446</div><div class="a nw" style="left:51px;top:473px;width:35px;text-align:center;padding-left:3px;font-weight:bold;font-size:14.5px">16</div><div class="a nw" style="left:91px;top:473px;width:40px;font-size:14.5px">Купля</div><div class="a nw" style="left:137px;top:473px;width:48px;font-weight:bold;font-size:14.5px">3 390 0</div><div class="a" style="left:86px;top:491px;width:45px;height:20px;background:#ff0808"></div><div class="a nw" style="left:3px;top:493px;font-weight:bold;font-size:14.5px">59 445</div><div class="a nw" style="left:51px;top:493px;width:35px;text-align:center;padding-left:3px;font-weight:bold;font-size:14.5px">20</div><div class="a nw" style="left:87px;top:493px;width:44px;font-size:14.5px">Продаж</div><div class="a nw" style="left:137px;top:493px;width:48px;font-weight:bold;font-size:14.5px">3 390 0</div><div class="a" style="left:86px;top:511px;width:45px;height:20px;background:#ff0808"></div><div class="a nw" style="left:3px;top:513px;font-weight:bold;font-size:14.5px">59 444</div><div class="a nw" style="left:51px;top:513px;width:35px;text-align:center;padding-left:3px;font-weight:bold;font-size:14.5px">16</div><div class="a nw" style="left:87px;top:513px;width:44px;font-size:14.5px">Продаж</div><div class="a nw" style="left:137px;top:513px;width:48px;font-weight:bold;font-size:14.5px">3 390 0</div><div class="a" style="left:52px;top:531px;width:33px;height:20px;background:#80ff80"></div><div class="a" style="left:86px;top:531px;width:45px;height:20px;background:#ff0808"></div><div class="a nw" style="left:3px;top:533px;font-weight:bold;font-size:14.5px">59 444</div><div class="a nw" style="left:51px;top:533px;width:35px;text-align:center;padding-left:3px;font-weight:bold;font-size:14.5px">67</div><div class="a nw" style="left:87px;top:533px;width:44px;font-size:14.5px">Продаж</div><div class="a nw" style="left:137px;top:533px;width:48px;font-weight:bold;font-size:14.5px">3 390 0</div><div class="a" style="left:86px;top:551px;width:45px;height:20px;background:#1ebe1e"></div><div class="a nw" style="left:3px;top:553px;font-weight:bold;font-size:14.5px">59 445</div><div class="a nw" style="left:51px;top:553px;width:35px;text-align:center;padding-left:3px;font-weight:bold;font-size:14.5px">12</div><div class="a nw" style="left:91px;top:553px;width:40px;font-size:14.5px">Купля</div><div class="a nw" style="left:137px;top:553px;width:48px;font-weight:bold;font-size:14.5px">3 390 0</div><div class="a" style="left:86px;top:571px;width:45px;height:20px;background:#ff0808"></div><div class="a nw" style="left:3px;top:573px;font-weight:bold;font-size:14.5px">59 441</div><div class="a nw" style="left:51px;top:573px;width:35px;text-align:center;padding-left:3px;font-weight:bold;font-size:14.5px">15</div><div class="a nw" style="left:87px;top:573px;width:44px;font-size:14.5px">Продаж</div><div class="a nw" style="left:137px;top:573px;width:48px;font-weight:bold;font-size:14.5px">3 390 0</div><div class="a" style="left:52px;top:591px;width:33px;height:20px;background:#ff8a10"></div><div class="a" style="left:86px;top:591px;width:45px;height:20px;background:#ff0808"></div><div class="a nw" style="left:3px;top:593px;font-weight:bold;font-size:14.5px">59 439</div><div class="a nw" style="left:51px;top:593px;width:35px;text-align:center;padding-left:3px;font-weight:bold;font-size:14.5px">40</div><div class="a nw" style="left:87px;top:593px;width:44px;font-size:14.5px">Продаж</div><div class="a nw" style="left:137px;top:593px;width:48px;font-weight:bold;font-size:14.5px">3 389 9</div><div class="a" style="left:86px;top:611px;width:45px;height:20px;background:#ff0808"></div><div class="a nw" style="left:3px;top:613px;font-weight:bold;font-size:14.5px">59 437</div><div class="a nw" style="left:51px;top:613px;width:35px;text-align:center;padding-left:3px;font-weight:bold;font-size:14.5px">29</div><div class="a nw" style="left:87px;top:613px;width:44px;font-size:14.5px">Продаж</div><div class="a nw" style="left:137px;top:613px;width:48px;font-weight:bold;font-size:14.5px">3 389 9</div></div><div class="a" style="left:451px;top:99px;width:21px;height:652px;background:#f4f4f4"></div><div class="a" style="left:457px;top:106px;width:0;height:0;border:4px solid transparent;border-bottom:5px solid #404040;border-top:0"></div><div class="a" style="left:457px;top:738px;width:0;height:0;border:4px solid transparent;border-top:5px solid #707070;border-bottom:0"></div><div class="a" style="left:453px;top:710px;width:17px;height:18px;border:1px solid #989898;border-radius:2px;background:linear-gradient(90deg,#f4f4f4,#dcdcdc)"><div class="a" style="left:4px;top:4px;width:7px;height:7px;border-top:1px solid #555;border-bottom:1px solid #555"><div class="a" style="left:0;top:2px;width:7px;height:1px;background:#555"></div></div></div><div class="a" style="left:265px;top:751px;width:207px;height:21px;background:#f0f0f0"></div><div class="a" style="left:272px;top:757px;width:0;height:0;border:4px solid transparent;border-right:5px solid #404040;border-left:0"></div><div class="a" style="left:436px;top:757px;width:0;height:0;border:4px solid transparent;border-left:5px solid #404040;border-right:0"></div><div class="a" style="left:288px;top:753px;width:18px;height:17px;border:1px solid #989898;border-radius:2px;background:linear-gradient(#f4f4f4,#dcdcdc)"><div class="a" style="left:4px;top:4px;width:7px;height:7px;border-left:1px solid #555;border-right:1px solid #555"><div class="a" style="left:2px;top:0;width:1px;height:7px;background:#555"></div></div></div><svg style="left:458px;top:758px" width="12" height="12"><g fill="#b8b8b8"><rect x="8" y="0" width="2" height="2"/><rect x="4" y="4" width="2" height="2"/><rect x="8" y="4" width="2" height="2"/><rect x="0" y="8" width="2" height="2"/><rect x="4" y="8" width="2" height="2"/><rect x="8" y="8" width="2" height="2"/></g></svg>
<div class="a" style="left:579px;top:124px;width:964px;height:615px;border-radius:7px;border:1px solid rgba(16,20,28,.8);box-shadow:inset 0 0 0 1px #b4c2d8,2px 3px 9px 2px rgba(0,0,0,.55);background:linear-gradient(90deg,#2a3c66 0%,#2c3f6b 70%,#41547f 84%,#7386ab 93%,#a9b9d2 100%)"></div><div class="a" style="left:581px;top:160px;width:6px;height:572px;background:linear-gradient(#3c5080,#2c3e6a)"></div><div class="a" style="left:1536px;top:160px;width:6px;height:572px;background:linear-gradient(#aebfdc 0%,#a6b6d6 20%,#5a6f9c 30%,#34477a 40%,#34477a 56%,#7f8cb8 62%,#8a97c2 100%);box-shadow:inset 1px 0 0 rgba(255,255,255,.35)"></div><div class="a" style="left:581px;top:732px;width:961px;height:6px;background:linear-gradient(90deg,#2c3e6a 0%,#2c3e6a 65%,#4a5e90 85%,#7f8cb8 100%)"></div><div class="a" style="left:588px;top:132px;width:376px;height:21px;border-radius:10px;background:rgba(158,168,194,.85);filter:blur(5px)"></div><div class="a nw" style="left:587px;top:133px;font-size:14.55px;color:#0c0c14">Редактирование таблицы котировок по Si-9.17 [FORTS]</div><div class="a" style="left:1477px;top:124px;width:58px;height:23px;border:1px solid #3a1c1c;border-top:0;border-radius:0 0 5px 5px;box-shadow:inset 0 0 0 1px #e8b0a8;background:linear-gradient(#e09890 0%,#d87868 45%,#c43014 50%,#d45030 80%,#e8907c 100%)"></div><svg style="left:1498px;top:128px" width="17" height="14" viewBox="0 0 17 14"><path d="M2.500 1.500l12 11M14.500 1.500l-12 11" stroke="#4a4a4a" stroke-width="4.600"/><path d="M2.500 1.500l12 11M14.500 1.500l-12 11" stroke="#fff" stroke-width="3"/></svg><div class="a" style="left:586px;top:159px;width:949px;height:573px;background:#f0f0f0;box-shadow:0 0 0 1px #dfe6f0"></div><div class="a nw" style="left:606px;top:174px;line-height:18px;">Имя</div><div class="a" style="left:713px;top:170px;width:559px;height:25px;background:#fff;border:1px solid #b5cfe7;border-top-color:#5794bf;border-radius:1px"></div><div class="a nw" style="left:719px;top:173px;height:19px;line-height:19px;background:#3399ff;color:#fff;padding:0 1px">Si-9.17 [FORTS] Котировки</div><div class="a" style="left:598px;top:213px;width:925px;height:468px;border:1px solid #d5dfe5;border-radius:3px;box-shadow:inset 0 0 0 1px #fff"></div><div class="a" style="left:603px;top:205px;width:169px;height:16px;background:#f0f0f0"></div><div class="a nw" style="left:606px;top:204px;line-height:18px;">Вид котировочного окна</div><div class="a" style="left:607px;top:247px;width:16px;height:16px;border-radius:8px;border:1px solid #8e8f8f;background:radial-gradient(circle at 50% 50%,#f4f4f4 25%,#c4c8cc 100%);box-shadow:inset 0 0 0 1.500px #fafafa"></div><div class="a" style="left:610.5px;top:250.5px;width:9px;height:9px;border-radius:5px;background:radial-gradient(circle at 40% 30%,#8ad0ff 0%,#2a78d0 35%,#10285a 85%)"></div><svg style="left:629px;top:239px" width="32" height="32" viewBox="0 0 32 32"><rect x=".5" y=".5" width="31" height="31" fill="#fff" stroke="#7a7a7a"/><rect x="1" y="1" width="30" height="3.500" fill="#1460b8"/><rect x="2" y="1.500" width="2" height="2" fill="#fff"/><rect x="26" y="1.500" width="2" height="2" fill="#d8c8a0"/><rect x="29" y="1.500" width="2" height="2" fill="#d8c8a0"/><rect x="1" y="4.500" width="30" height="12.500" fill="#ffc8c8"/><rect x="1" y="18" width="30" height="13" fill="#d0ffd0"/><path d="M1 17.500h30" stroke="#7a7a7a"/><text x="8" y="15.5" font-size="12.500" fill="#000" font-family="Liberation Sans,sans-serif">$</text><text x="8" y="29.5" font-size="12.500" fill="#000" font-family="Liberation Sans,sans-serif">$</text><g transform="translate(18,6)"><path d="M0 5.500l3.500 4.500 3.500-4.500h-2v-5.500h-3v5.500z" fill="#e01000"/></g><g transform="translate(18,20)"><path d="M0 4.500l3.500-4.500 3.500 4.500h-2v5.500h-3v-5.500z" fill="#00a810"/></g></svg><div class="a" style="left:691px;top:247px;width:16px;height:16px;border-radius:8px;border:1px solid #8e8f8f;background:radial-gradient(circle at 50% 50%,#f4f4f4 25%,#c4c8cc 100%);box-shadow:inset 0 0 0 1.500px #fafafa"></div><svg style="left:713px;top:239px" width="32" height="32" viewBox="0 0 32 32"><rect x=".5" y=".5" width="31" height="31" fill="#fff" stroke="#7a7a7a"/><rect x="1" y="1" width="30" height="3.500" fill="#1460b8"/><rect x="2" y="1.500" width="2" height="2" fill="#fff"/><rect x="26" y="1.500" width="2" height="2" fill="#d8c8a0"/><rect x="29" y="1.500" width="2" height="2" fill="#d8c8a0"/><rect x="10" y="4.500" width="21" height="12.500" fill="#ffc8c8"/><rect x="1" y="18" width="20" height="13" fill="#d0ffd0"/><path d="M1 17.500h30" stroke="#7a7a7a"/><text x="12" y="15.5" font-size="12.500" fill="#000" font-family="Liberation Sans,sans-serif">$</text><text x="12" y="29.5" font-size="12.500" fill="#000" font-family="Liberation Sans,sans-serif">$</text><g transform="translate(21,6)"><path d="M0 5.500l3.500 4.500 3.500-4.500h-2v-5.500h-3v5.500z" fill="#e01000"/></g><g transform="translate(4,20)"><path d="M0 4.500l3.500-4.500 3.500 4.500h-2v5.500h-3v-5.500z" fill="#00a810"/></g></svg><div class="a" style="left:777px;top:247px;width:16px;height:16px;border-radius:8px;border:1px solid #8e8f8f;background:radial-gradient(circle at 50% 50%,#f4f4f4 25%,#c4c8cc 100%);box-shadow:inset 0 0 0 1.500px #fafafa"></div><svg style="left:799px;top:239px" width="32" height="32" viewBox="0 0 32 32"><rect x=".5" y=".5" width="31" height="31" fill="#fff" stroke="#7a7a7a"/><rect x="1" y="1" width="30" height="3.500" fill="#1460b8"/><rect x="2" y="1.500" width="2" height="2" fill="#fff"/><rect x="26" y="1.500" width="2" height="2" fill="#d8c8a0"/><rect x="29" y="1.500" width="2" height="2" fill="#d8c8a0"/><rect x="1" y="4.500" width="15.500" height="26.500" fill="#d0ffd0"/><rect x="17" y="4.500" width="14" height="26.500" fill="#ffc8c8"/><path d="M16.500 4.500v27" stroke="#7a7a7a"/><text x="9" y="15.5" font-size="12.500" fill="#000" font-family="Liberation Sans,sans-serif">$</text><text x="17" y="15.5" font-size="12.500" fill="#000" font-family="Liberation Sans,sans-serif">$</text><g transform="translate(2,6)"><path d="M0 4.500l3.500-4.500 3.500 4.500h-2v5.500h-3v-5.500z" fill="#00a810"/></g><g transform="translate(24,6)"><path d="M0 4.500l3.500-4.500 3.500 4.500h-2v5.500h-3v-5.500z" fill="#e01000"/></g></svg><div class="a" style="left:607px;top:302px;width:15px;height:15px;border:1px solid #8e8f8f;background:#f4f4f4;box-shadow:inset 0 0 0 2px #fff,inset 2px 2px 3px 1px #c6cace"></div><svg style="left:609px;top:304px" width="11" height="11" viewBox="0 0 11 11"><path d="M1.800 5l2.200 3.500 4.700-7" stroke="#304a90" stroke-width="1.700" fill="none"/></svg><div class="a nw" style="left:627px;top:301px;line-height:18px;width:213px">Лучшие котировки видны всегда</div><div class="a" style="left:607px;top:334px;width:15px;height:15px;border:1px solid #8e8f8f;background:#f4f4f4;box-shadow:inset 0 0 0 2px #fff,inset 2px 2px 3px 1px #c6cace"></div><div class="a nw" style="left:627px;top:333px;line-height:18px;width:300px">Покупку показывать сверху</div><div class="a" style="left:607px;top:364px;width:15px;height:15px;border:1px solid #8e8f8f;background:#f4f4f4;box-shadow:inset 0 0 0 2px #fff,inset 2px 2px 3px 1px #c6cace"></div><svg style="left:609px;top:366px" width="11" height="11" viewBox="0 0 11 11"><path d="M1.800 5l2.200 3.500 4.700-7" stroke="#304a90" stroke-width="1.700" fill="none"/></svg><div class="a nw" style="left:627px;top:363px;line-height:18px;width:189px">Использовать drag-and-drop</div><div class="a" style="left:607px;top:396px;width:15px;height:15px;border:1px solid #8e8f8f;background:#f4f4f4;box-shadow:inset 0 0 0 2px #fff,inset 2px 2px 3px 1px #c6cace"></div><div class="a nw" style="left:627px;top:395px;line-height:18px;width:300px">Разреженный стакан</div><div class="a" style="left:989px;top:234px;width:15px;height:15px;border:1px solid #8e8f8f;background:#f4f4f4;box-shadow:inset 0 0 0 2px #fff,inset 2px 2px 3px 1px #c6cace"></div><svg style="left:991px;top:236px" width="11" height="11" viewBox="0 0 11 11"><path d="M1.800 5l2.200 3.500 4.700-7" stroke="#304a90" stroke-width="1.700" fill="none"/></svg><div class="a nw" style="left:1009px;top:233px;line-height:18px;width:191px">Выделять котировки цветом</div><div class="a" style="left:989px;top:267px;width:15px;height:15px;border:1px solid #8e8f8f;background:#f4f4f4;box-shadow:inset 0 0 0 2px #fff,inset 2px 2px 3px 1px #c6cace"></div><svg style="left:991px;top:269px" width="11" height="11" viewBox="0 0 11 11"><path d="M1.800 5l2.200 3.500 4.700-7" stroke="#304a90" stroke-width="1.700" fill="none"/></svg><div class="a nw" style="left:1009px;top:266px;line-height:18px;width:191px">Выделять свои заявки</div><div class="a" style="left:989px;top:300px;width:15px;height:15px;border:1px solid #8e8f8f;background:#f4f4f4;box-shadow:inset 0 0 0 2px #fff,inset 2px 2px 3px 1px #c6cace"></div><svg style="left:991px;top:302px" width="11" height="11" viewBox="0 0 11 11"><path d="M1.800 5l2.200 3.500 4.700-7" stroke="#304a90" stroke-width="1.700" fill="none"/></svg><div class="a nw" style="left:1009px;top:299px;line-height:18px;width:191px">Панель торговли</div><div class="a nw" style="left:993px;top:333px;line-height:18px;">Информация по</div><div class="a" style="left:1013px;top:364px;width:15px;height:15px;border:1px solid #8e8f8f;background:#f4f4f4;box-shadow:inset 0 0 0 2px #fff,inset 2px 2px 3px 1px #c6cace"></div><svg style="left:1015px;top:366px" width="11" height="11" viewBox="0 0 11 11"><path d="M1.800 5l2.200 3.500 4.700-7" stroke="#304a90" stroke-width="1.700" fill="none"/></svg><div class="a nw" style="left:1033px;top:363px;line-height:18px;">Верхняя панель</div><div class="a" style="left:1013px;top:396px;width:15px;height:15px;border:1px solid #8e8f8f;background:#f4f4f4;box-shadow:inset 0 0 0 2px #fff,inset 2px 2px 3px 1px #c6cace"></div><svg style="left:1015px;top:398px" width="11" height="11" viewBox="0 0 11 11"><path d="M1.800 5l2.200 3.500 4.700-7" stroke="#304a90" stroke-width="1.700" fill="none"/></svg><div class="a nw" style="left:1033px;top:395px;line-height:18px;">Нижняя панель</div><div class="a nw" style="left:1222px;top:230px;width:38px;height:28px;border-radius:3px;border:1px solid #707070;box-shadow:inset 0 0 0 1px #fcfcfc;background:linear-gradient(#f2f2f2 0%,#ebebeb 48%,#dddddd 52%,#cfcfcf 100%);text-align:center;line-height:25px;color:#000">...</div><div class="a nw" style="left:1222px;top:264px;width:38px;height:28px;border-radius:3px;border:1px solid #707070;box-shadow:inset 0 0 0 1px #fcfcfc;background:linear-gradient(#f2f2f2 0%,#ebebeb 48%,#dddddd 52%,#cfcfcf 100%);text-align:center;line-height:25px;color:#000">...</div><div class="a nw" style="left:1222px;top:298px;width:38px;height:28px;border-radius:3px;border:1px solid #707070;box-shadow:inset 0 0 0 1px #fcfcfc;background:linear-gradient(#f2f2f2 0%,#ebebeb 48%,#dddddd 52%,#cfcfcf 100%);text-align:center;line-height:25px;color:#000">...</div><div class="a nw" style="left:1222px;top:358px;width:38px;height:28px;border-radius:3px;border:1px solid #707070;box-shadow:inset 0 0 0 1px #fcfcfc;background:linear-gradient(#f2f2f2 0%,#ebebeb 48%,#dddddd 52%,#cfcfcf 100%);text-align:center;line-height:25px;color:#000">...</div><div class="a nw" style="left:1222px;top:392px;width:38px;height:28px;border-radius:3px;border:1px solid #707070;box-shadow:inset 0 0 0 1px #fcfcfc;background:linear-gradient(#f2f2f2 0%,#ebebeb 48%,#dddddd 52%,#cfcfcf 100%);text-align:center;line-height:25px;color:#000">...</div><div class="a" style="left:1283px;top:226px;width:15px;height:15px;border:1px solid #8e8f8f;background:#f4f4f4;box-shadow:inset 0 0 0 2px #fff,inset 2px 2px 3px 1px #c6cace"></div><div class="a nw" style="left:1303px;top:225px;line-height:18px;width:189px">Быстрый ввод/снятие заявок</div><div class="a" style="left:1281px;top:261px;width:230px;height:124px;border:1px solid #d5dfe5;border-radius:3px;box-shadow:inset 0 0 0 1px #fff"></div><div class="a" style="left:1290px;top:252px;width:212px;height:18px;background:#f0f0f0"></div><div class="a" style="left:1293px;top:253px;width:15px;height:15px;border:1px solid #8e8f8f;background:#f4f4f4;box-shadow:inset 0 0 0 2px #fff,inset 2px 2px 3px 1px #c6cace"></div><div class="a nw" style="left:1313px;top:252px;line-height:18px;width:187px">Быстрый ввод объема заявки</div><div class="a nw" style="left:1295px;top:282px;line-height:18px;">Объем 1</div><div class="a nw" style="left:1365px;top:278px;width:80px;height:25px;border:1px solid #afafaf;background:#f0f0f0;color:#6d6d6d;padding:2px 0 0 7px">0</div><div class="a nw" style="left:1297px;top:316px;line-height:18px;">Объем 2</div><div class="a nw" style="left:1366px;top:312px;width:79px;height:25px;border:1px solid #afafaf;background:#f0f0f0;color:#6d6d6d;padding:2px 0 0 7px">0</div><div class="a nw" style="left:1297px;top:350px;line-height:18px;">Объем 3</div><div class="a nw" style="left:1367px;top:346px;width:78px;height:25px;border:1px solid #afafaf;background:#f0f0f0;color:#6d6d6d;padding:2px 0 0 7px">0</div><div class="a" style="left:1281px;top:396px;width:230px;height:167px;border:1px solid #d5dfe5;border-radius:3px;box-shadow:inset 0 0 0 1px #fff"></div><div class="a" style="left:1291px;top:388px;width:160px;height:18px;background:#f0f0f0"></div><div class="a" style="left:1295px;top:389px;width:15px;height:15px;border:1px solid #8e8f8f;background:#f4f4f4;box-shadow:inset 0 0 0 2px #fff,inset 2px 2px 3px 1px #c6cace"></div><div class="a nw" style="left:1315px;top:388px;line-height:18px;">Брать отступ цены</div><div class="a nw" style="left:1295px;top:419px;line-height:18px;">Отступ</div><div class="a nw" style="left:1367px;top:416px;width:80px;height:25px;border:1px solid #afafaf;background:#f0f0f0;color:#6d6d6d;padding:2px 0 0 7px">0</div><div class="a nw" style="left:1295px;top:454px;line-height:18px;">Отступ</div><div class="a nw" style="left:1367px;top:450px;width:80px;height:25px;border:1px solid #afafaf;background:#f0f0f0;color:#6d6d6d;padding:2px 0 0 7px">0</div><div class="a nw" style="left:1295px;top:488px;line-height:18px;">Отступ</div><div class="a nw" style="left:1367px;top:486px;width:80px;height:25px;border:1px solid #afafaf;background:#f0f0f0;color:#6d6d6d;padding:2px 0 0 7px">0</div><div class="a nw" style="left:1297px;top:525px;line-height:18px;">Отступ</div><div class="a nw" style="left:1367px;top:522px;width:80px;height:25px;border:1px solid #afafaf;background:#f0f0f0;color:#6d6d6d;padding:2px 0 0 7px">0</div><div class="a" style="left:1284px;top:578px;width:227px;height:87px;border:1px solid #d5dfe5;border-radius:3px;box-shadow:inset 0 0 0 1px #fff"></div><div class="a" style="left:1289px;top:569px;width:86px;height:18px;background:#f0f0f0"></div><div class="a nw" style="left:1292px;top:569px;line-height:18px;">Фильтрация</div><div class="a" style="left:1295px;top:599px;width:15px;height:15px;border:1px solid #8e8f8f;background:#f4f4f4;box-shadow:inset 0 0 0 2px #fff,inset 2px 2px 3px 1px #c6cace"></div><div class="a nw" style="left:1315px;top:590px;line-height:18px;">Применять глобальный</div><div class="a nw" style="left:1315px;top:607px;line-height:18px;">фильтр клиентов</div><div class="a" style="left:1295px;top:634px;width:15px;height:15px;border:1px solid #8e8f8f;background:#f4f4f4;box-shadow:inset 0 0 0 2px #fff,inset 2px 2px 3px 1px #c6cace"></div><div class="a nw" style="left:1315px;top:633px;line-height:18px;">Фильтр клиентов</div><div class="a nw" style="left:1462px;top:630px;width:38px;height:28px;border-radius:3px;border:1px solid #707070;box-shadow:inset 0 0 0 1px #fcfcfc;background:linear-gradient(#f2f2f2 0%,#ebebeb 48%,#dddddd 52%,#cfcfcf 100%);text-align:center;line-height:25px;color:#000">...</div><div class="a nw" style="left:613px;top:440px;line-height:18px;">Доступные параметры</div><div class="a nw" style="left:1010px;top:440px;line-height:18px;">Заголовки столбцов</div><div class="a" style="left:605px;top:465px;width:232px;height:21px;background:#fff;border:1px solid #d4dde6;border-bottom:0"></div><svg style="left:610px;top:469px" width="11" height="11" viewBox="0 0 11 11"><circle cx="4" cy="4" r="2.800" fill="none" stroke="#7a8aa0" stroke-width="1.600"/><path d="M6.200 6.200l3.300 3.300" stroke="#7a8aa0" stroke-width="2"/></svg><div class="a" style="left:605px;top:485px;width:232px;height:180px;background:#fff;border:1px solid #828790"></div><div class="a" style="left:991px;top:465px;width:232px;height:21px;background:#fff;border:1px solid #d4dde6;border-bottom:0"></div><svg style="left:996px;top:469px" width="11" height="11" viewBox="0 0 11 11"><circle cx="4" cy="4" r="2.800" fill="none" stroke="#7a8aa0" stroke-width="1.600"/><path d="M6.200 6.200l3.300 3.300" stroke="#7a8aa0" stroke-width="2"/></svg><div class="a" style="left:991px;top:485px;width:232px;height:180px;background:#fff;border:1px solid #828790"></div><div class="a nw" style="left:609px;top:486px;line-height:18px;">Цена</div><div class="a nw" style="left:609px;top:503px;line-height:18px;">Объем</div><div class="a nw" style="left:609px;top:520px;line-height:18px;">Свой объем</div><div class="a nw" style="left:609px;top:537px;line-height:18px;">Доходность</div><div class="a nw" style="left:609px;top:554px;line-height:18px;">Сумма лучших</div><div class="a nw" style="left:995px;top:486px;line-height:18px;">Цена</div><div class="a nw" style="left:995px;top:503px;line-height:18px;">Объем</div><div class="a nw" style="left:846px;top:480px;width:136px;height:27px;border-radius:3px;border:1px solid #adb2b5;background:#f4f4f4;text-align:center;line-height:24px;color:#838383">Добавить</div><div class="a nw" style="left:846px;top:511px;width:136px;height:28px;border-radius:3px;border:1px solid #707070;box-shadow:inset 0 0 0 1px #fcfcfc;background:linear-gradient(#f2f2f2 0%,#ebebeb 48%,#dddddd 52%,#cfcfcf 100%);text-align:center;line-height:25px;color:#000">Добавить все</div><div class="a nw" style="left:846px;top:553px;width:136px;height:27px;border-radius:3px;border:1px solid #adb2b5;background:#f4f4f4;text-align:center;line-height:24px;color:#838383">Убрать</div><div class="a nw" style="left:846px;top:585px;width:136px;height:28px;border-radius:3px;border:1px solid #707070;box-shadow:inset 0 0 0 1px #fcfcfc;background:linear-gradient(#f2f2f2 0%,#ebebeb 48%,#dddddd 52%,#cfcfcf 100%);text-align:center;line-height:25px;color:#000">Очистить</div><div class="a nw" style="left:846px;top:625px;width:136px;height:28px;border-radius:3px;border:1px solid #707070;box-shadow:inset 0 0 0 1px #fcfcfc;background:linear-gradient(#f2f2f2 0%,#ebebeb 48%,#dddddd 52%,#cfcfcf 100%);text-align:center;line-height:25px;color:#000">Перевернуть</div><div class="a" style="left:1232px;top:516px;width:28px;height:29px;border:1px solid #adb2b5;border-radius:3px;background:#f4f4f4"></div><svg style="left:1238px;top:520px" width="15" height="20" viewBox="0 0 15 20"><path d="M1 9.500l6.500-8 6.500 8M5.500 6.500v12.500h4v-12.500" fill="none" stroke="#5a5a5a" stroke-width="1.100"/><path d="M7.500 5v13" stroke="#a8a8a8"/></svg><div class="a" style="left:1232px;top:581px;width:28px;height:29px;border:1px solid #adb2b5;border-radius:3px;background:#f4f4f4"></div><svg style="left:1238px;top:585px" width="15" height="20" viewBox="0 0 15 20"><path d="M1 10.500l6.500 8 6.500-8M5.500 13.500v-12.500h4v12.500" fill="none" stroke="#5a5a5a" stroke-width="1.100"/><path d="M7.500 2v13" stroke="#a8a8a8"/></svg><div class="a nw" style="left:598px;top:689px;width:98px;height:28px;border-radius:3px;border:1px solid #3c9ad8;box-shadow:inset 0 0 0 1px #48c8f0;background:linear-gradient(#eef6fb 0%,#e4f1f9 48%,#c6e3f1 52%,#bcdcee 100%);text-align:center;line-height:25px;color:#000"><u>Д</u>а</div><div class="a nw" style="left:708px;top:689px;width:98px;height:28px;border-radius:3px;border:1px solid #707070;box-shadow:inset 0 0 0 1px #fcfcfc;background:linear-gradient(#f2f2f2 0%,#ebebeb 48%,#dddddd 52%,#cfcfcf 100%);text-align:center;line-height:25px;color:#000"><u>О</u>тмена</div><div class="a nw" style="left:1422px;top:689px;width:98px;height:28px;border-radius:3px;border:1px solid #707070;box-shadow:inset 0 0 0 1px #fcfcfc;background:linear-gradient(#f2f2f2 0%,#ebebeb 48%,#dddddd 52%,#cfcfcf 100%);text-align:center;line-height:25px;color:#000"><u>С</u>правка</div>
<div class="a" style="left:0;top:856px;width:2938px;height:52px;background:#f0f0f0"></div><div class="a" style="left:0;top:883px;width:2938px;height:1px;background:#9a9a9a"></div><div class="a" style="left:0;top:856px;width:2938px;height:1px;background:#7c7c7c"></div><div class="a nw" style="left:1px;top:860px;width:97.5px;height:23px;border-right:1px solid #8a8a8a;border-left:1px solid #fdfdfd;border-top:1px solid #d0d0d0;box-shadow:inset -1px 0 0 #c4c4c4;text-align:center;font-size:14.6px;padding-top:4px;background:linear-gradient(#f5f5f5 0%,#ebebeb 55%,#d6d6d6 100%)">Рос. индексы</div><div class="a nw" style="left:100.5px;top:860px;width:65.0px;height:23px;border-right:1px solid #8a8a8a;border-left:1px solid #fdfdfd;border-top:1px solid #d0d0d0;box-shadow:inset -1px 0 0 #c4c4c4;text-align:center;font-size:14.6px;padding-top:4px;background:linear-gradient(#f5f5f5 0%,#ebebeb 55%,#d6d6d6 100%)">ОБЗОР</div><div class="a nw" style="left:167.5px;top:860px;width:168.0px;height:23px;border-right:1px solid #8a8a8a;border-left:1px solid #fdfdfd;border-top:1px solid #d0d0d0;box-shadow:inset -1px 0 0 #c4c4c4;text-align:center;font-size:14.6px;padding-top:4px;background:linear-gradient(#f5f5f5 0%,#ebebeb 55%,#d6d6d6 100%)">Торговля фьючерса BR</div><div class="a nw" style="left:337.5px;top:860px;width:188.0px;height:23px;border-right:1px solid #8a8a8a;border-left:1px solid #fdfdfd;border-top:1px solid #d0d0d0;box-shadow:inset -1px 0 0 #c4c4c4;text-align:center;font-size:14.6px;padding-top:4px;background:linear-gradient(#f5f5f5 0%,#ebebeb 55%,#d6d6d6 100%)">Торговля фьючерса GOLD</div><div class="a nw" style="left:526.5px;top:857px;width:169.0px;height:27px;background:#fff;border-right:1px solid #8a8a8a;text-align:center;font-size:14.6px;padding-top:6px">Торговля фьючерса Si.</div><div class="a nw" style="left:696.5px;top:860px;width:168.0px;height:23px;border-right:1px solid #8a8a8a;border-left:1px solid #fdfdfd;border-top:1px solid #d0d0d0;box-shadow:inset -1px 0 0 #c4c4c4;text-align:center;font-size:14.6px;padding-top:4px;background:linear-gradient(#f5f5f5 0%,#ebebeb 55%,#d6d6d6 100%)">Торговля фьючерса MXI</div><div class="a nw" style="left:866.5px;top:860px;width:189.0px;height:23px;border-right:1px solid #8a8a8a;border-left:1px solid #fdfdfd;border-top:1px solid #d0d0d0;box-shadow:inset -1px 0 0 #c4c4c4;text-align:center;font-size:14.6px;padding-top:4px;background:linear-gradient(#f5f5f5 0%,#ebebeb 55%,#d6d6d6 100%)">Торговля фьючерса SBRF.</div><div class="a nw" style="left:1057.5px;top:860px;width:199.0px;height:23px;border-right:1px solid #8a8a8a;border-left:1px solid #fdfdfd;border-top:1px solid #d0d0d0;box-shadow:inset -1px 0 0 #c4c4c4;text-align:center;font-size:14.6px;padding-top:4px;background:linear-gradient(#f5f5f5 0%,#ebebeb 55%,#d6d6d6 100%)">Торговля - Валютный рынок</div><div class="a nw" style="left:1258.5px;top:860px;width:144.0px;height:23px;border-right:1px solid #8a8a8a;border-left:1px solid #fdfdfd;border-top:1px solid #d0d0d0;box-shadow:inset -1px 0 0 #c4c4c4;text-align:center;font-size:14.6px;padding-top:4px;background:linear-gradient(#f5f5f5 0%,#ebebeb 55%,#d6d6d6 100%)">Графики - Акции РФ</div><div class="a nw" style="left:1404.5px;top:860px;width:149.0px;height:23px;border-right:1px solid #8a8a8a;border-left:1px solid #fdfdfd;border-top:1px solid #d0d0d0;box-shadow:inset -1px 0 0 #c4c4c4;text-align:center;font-size:14.6px;padding-top:4px;background:linear-gradient(#f5f5f5 0%,#ebebeb 55%,#d6d6d6 100%)">Торговля - Акции РФ</div><div class="a nw" style="left:1555.5px;top:860px;width:69.0px;height:23px;border-right:1px solid #8a8a8a;border-left:1px solid #fdfdfd;border-top:1px solid #d0d0d0;box-shadow:inset -1px 0 0 #c4c4c4;text-align:center;font-size:14.6px;padding-top:4px;background:linear-gradient(#f5f5f5 0%,#ebebeb 55%,#d6d6d6 100%)">Таблицы</div><div class="a nw" style="left:-5px;top:891px;font-size:14.45px;width:700px">Время сервера: 19:43:53; записей: 4686057; текущая: 27850353</div><div class="a" style="left:2436px;top:888px;width:1px;height:20px;background:#c4c4c4"></div><div class="a" style="left:2437px;top:888px;width:1px;height:20px;background:#fff"></div><div class="a" style="left:2608px;top:888px;width:1px;height:20px;background:#c4c4c4"></div><div class="a" style="left:2609px;top:888px;width:1px;height:20px;background:#fff"></div><div class="a" style="left:2705px;top:888px;width:1px;height:20px;background:#c4c4c4"></div><div class="a" style="left:2706px;top:888px;width:1px;height:20px;background:#fff"></div><div class="a" style="left:2734px;top:888px;width:1px;height:20px;background:#c4c4c4"></div><div class="a" style="left:2735px;top:888px;width:1px;height:20px;background:#fff"></div><div class="a" style="left:2763px;top:888px;width:1px;height:20px;background:#c4c4c4"></div><div class="a" style="left:2764px;top:888px;width:1px;height:20px;background:#fff"></div><div class="a" style="left:2902px;top:888px;width:1px;height:20px;background:#c4c4c4"></div><div class="a" style="left:2903px;top:888px;width:1px;height:20px;background:#fff"></div><svg style="left:2441px;top:890px" width="18" height="16" viewBox="0 0 18 16"><rect x="1" y="1" width="9" height="6" fill="#dfe8f4" stroke="#445"/><rect x="7" y="7" width="9" height="6" fill="#bcd" stroke="#445"/><path d="M3 9v4h3M10 15h5" stroke="#445" fill="none"/><rect x="2" y="2" width="4" height="2" fill="#2a9"/></svg><div class="a nw" style="left:2461px;top:891px;font-size:13.9px">195.128.79.55:15100</div><div class="a" style="left:2770px;top:893px;width:11px;height:11px;border-radius:6px;background:radial-gradient(circle at 35% 35%,#7f7,#0c0 60%,#090)"></div><div class="a nw" style="left:2788px;top:891px;font-size:13.6px">21.08.17</div><div class="a" style="left:7px;top:899px;width:36px;height:36px;border-radius:18px;border:2px solid #dfe6f0;background:radial-gradient(circle at 50% 20%,#c8d4e6,#7c98c4)"></div>
</div></body></html>
